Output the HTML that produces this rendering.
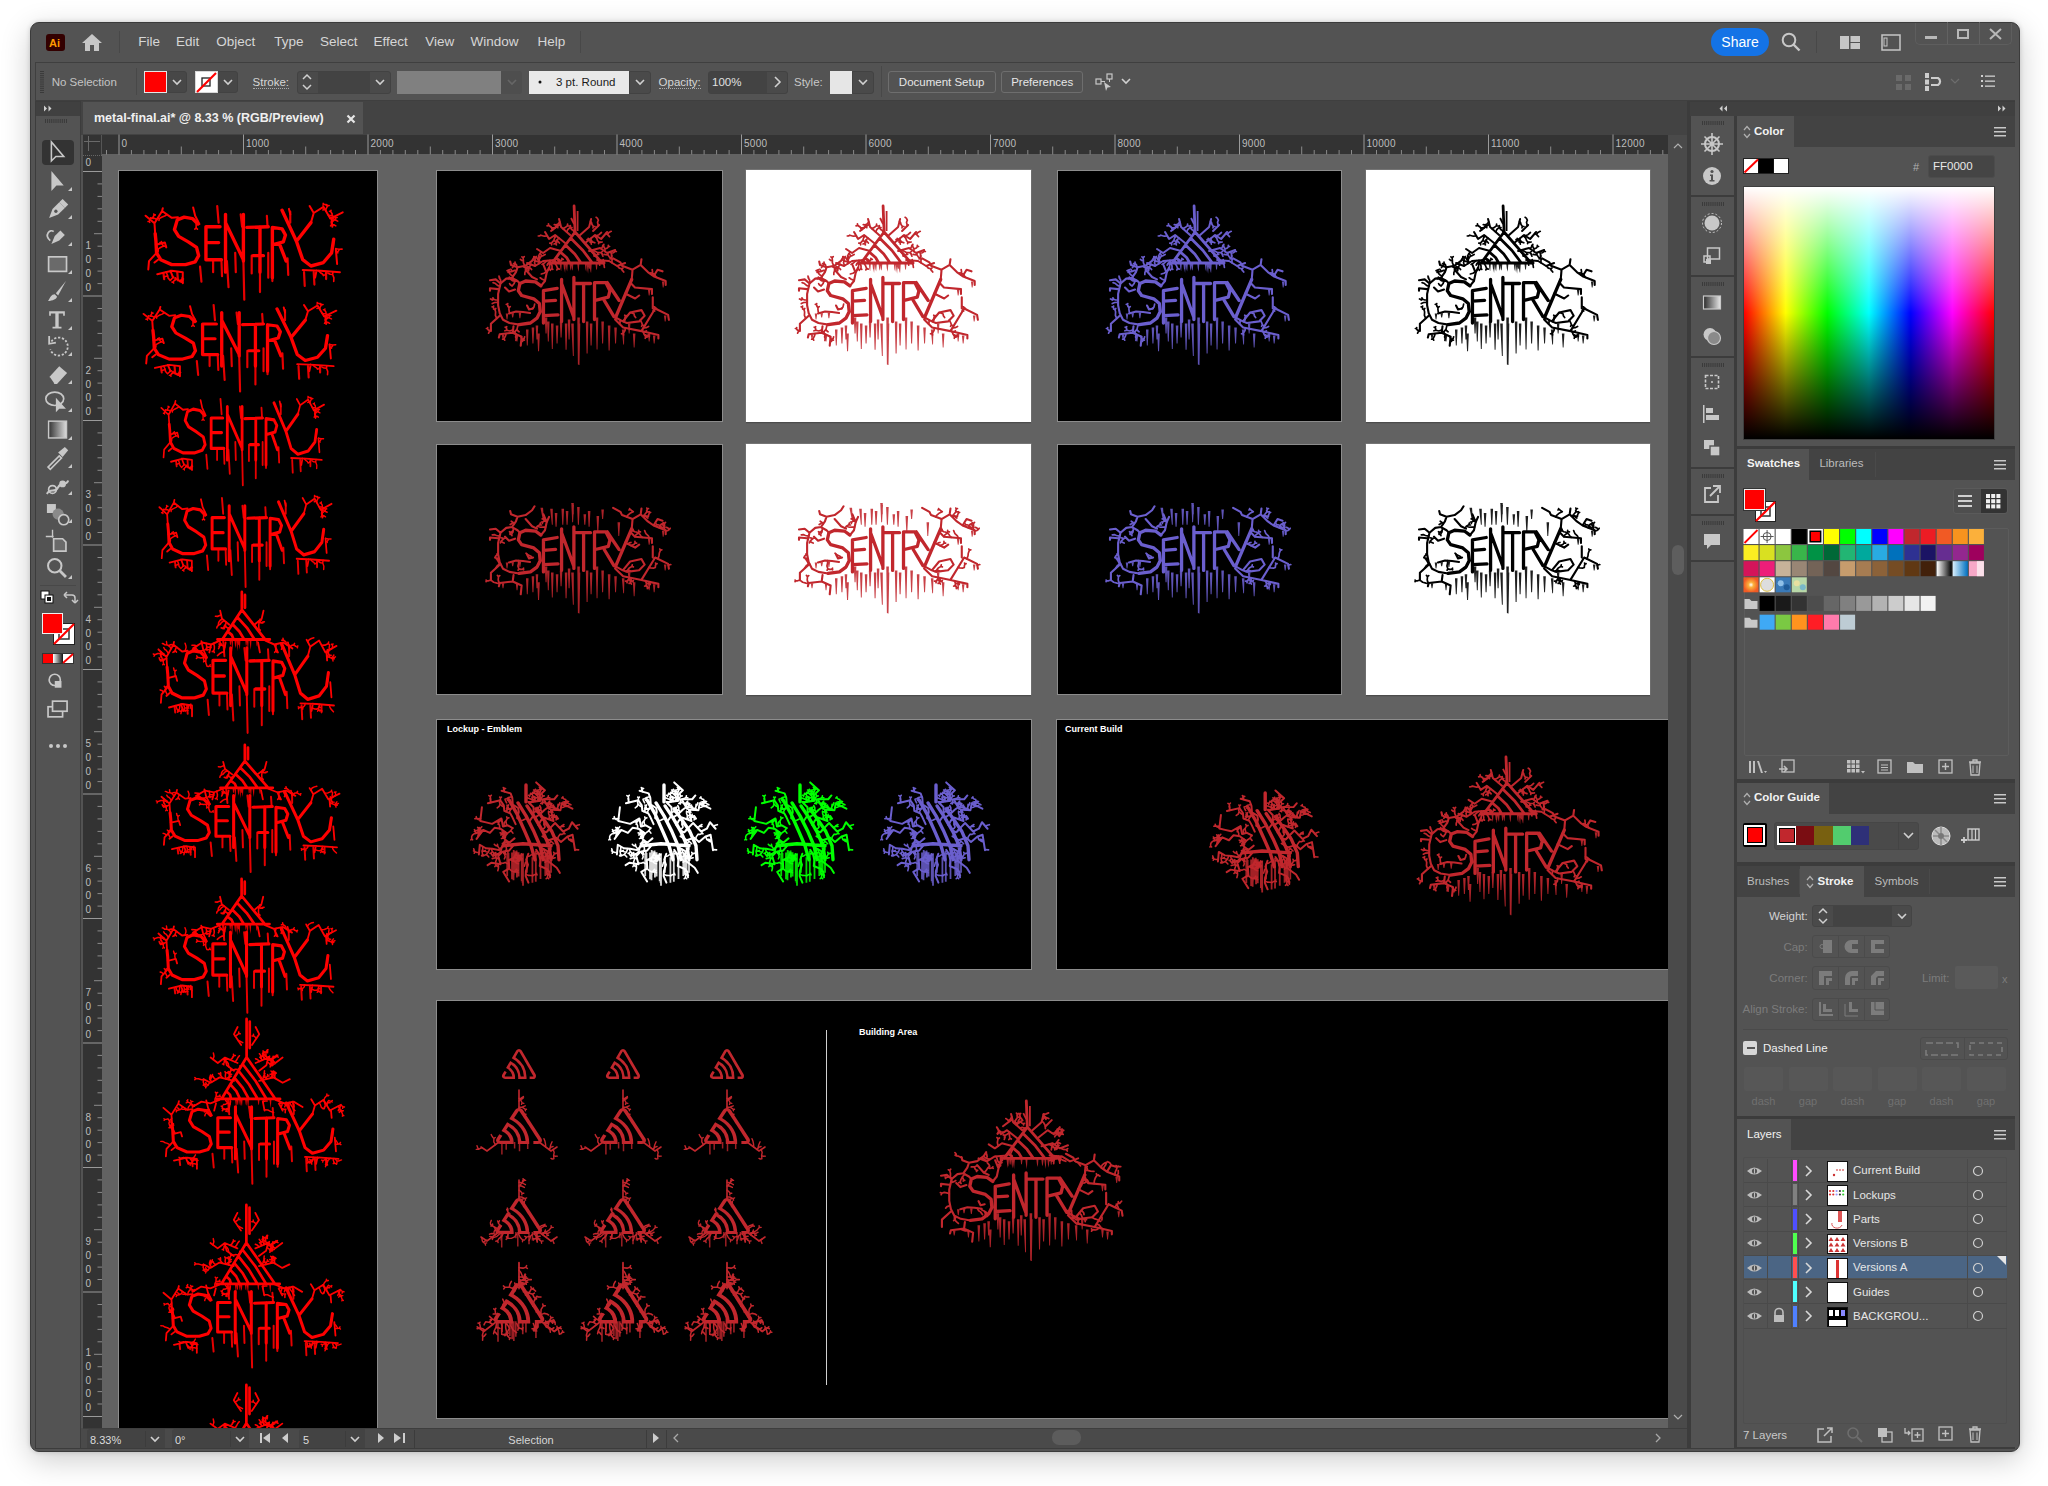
<!DOCTYPE html><html><head><meta charset="utf-8"><style>
*{box-sizing:border-box;margin:0;padding:0}
html,body{width:2048px;height:1486px;overflow:hidden;background:#fff}
body{position:relative;font-family:"Liberation Sans",sans-serif}
.t{position:absolute;white-space:nowrap;line-height:1}
svg{position:absolute;overflow:visible}
</style></head><body><div style="position:absolute;left:30px;top:22px;width:1990px;height:1430px;background:#535353;border-radius:9px;box-shadow:0 8px 30px rgba(0,0,0,0.20),0 0 5px rgba(0,0,0,0.16);border:1px solid #3b3b3b"></div>
<div style="position:absolute;left:46px;top:34px;width:19px;height:17px;background:#330000;border-radius:3px"></div>
<div class="t" style="left:49.0px;top:38.2px;font-size:11px;color:#ff9a00;font-weight:bold;">Ai</div>
<svg style="left:81px;top:33px;" width="22" height="19" viewBox="0 0 22 19"><path d="M11 1 L21 10 L18 10 L18 18 L13 18 L13 12 L9 12 L9 18 L4 18 L4 10 L1 10 Z" fill="#c6c6c6"/></svg>
<div style="position:absolute;left:119px;top:31px;width:1px;height:22px;background:#484848"></div>
<div class="t" style="left:138.3px;top:35.4px;font-size:13.5px;color:#d6d6d6;font-weight:normal;">File</div>
<div class="t" style="left:176.0px;top:35.4px;font-size:13.5px;color:#d6d6d6;font-weight:normal;">Edit</div>
<div class="t" style="left:216.3px;top:35.4px;font-size:13.5px;color:#d6d6d6;font-weight:normal;">Object</div>
<div class="t" style="left:274.3px;top:35.4px;font-size:13.5px;color:#d6d6d6;font-weight:normal;">Type</div>
<div class="t" style="left:320.0px;top:35.4px;font-size:13.5px;color:#d6d6d6;font-weight:normal;">Select</div>
<div class="t" style="left:373.5px;top:35.4px;font-size:13.5px;color:#d6d6d6;font-weight:normal;">Effect</div>
<div class="t" style="left:425.3px;top:35.4px;font-size:13.5px;color:#d6d6d6;font-weight:normal;">View</div>
<div class="t" style="left:470.6px;top:35.4px;font-size:13.5px;color:#d6d6d6;font-weight:normal;">Window</div>
<div class="t" style="left:537.6px;top:35.4px;font-size:13.5px;color:#d6d6d6;font-weight:normal;">Help</div>
<div style="position:absolute;left:580px;top:31px;width:1px;height:22px;background:#484848"></div>
<div style="position:absolute;left:1711px;top:28px;width:58px;height:28px;background:#1473e6;border-radius:14px"></div>
<div class="t" style="left:1540.0px;width:400px;text-align:center;top:34.6px;font-size:14px;color:#ffffff;font-weight:normal;">Share</div>
<svg style="left:1780px;top:31px;" width="22" height="22" viewBox="0 0 22 22"><circle cx="9" cy="9" r="6.3" fill="none" stroke="#c8c8c8" stroke-width="2"/><path d="M13.5 13.5 L19.5 19.5" stroke="#c8c8c8" stroke-width="2.4"/></svg>
<div style="position:absolute;left:1816px;top:31px;width:1px;height:22px;background:#484848"></div>
<svg style="left:1840px;top:36px;" width="21" height="14" viewBox="0 0 21 14"><rect x="0" y="0" width="9" height="13" fill="#c6c6c6"/><rect x="10.5" y="0" width="9.5" height="6" fill="#c6c6c6"/><rect x="10.5" y="7" width="9.5" height="6" fill="#c6c6c6"/></svg>
<svg style="left:1881px;top:34px;" width="20" height="17" viewBox="0 0 20 17"><rect x="1" y="1" width="18" height="15" fill="none" stroke="#c6c6c6" stroke-width="1.5"/><rect x="3" y="4" width="3" height="8" fill="none" stroke="#c6c6c6" stroke-width="1"/></svg>
<div style="position:absolute;left:1915px;top:23px;width:97px;height:21.5px;border:1px solid #5e5e5e;border-top:none;border-radius:0 0 5px 5px"></div>
<div style="position:absolute;left:1947px;top:22px;width:1px;height:22px;background:#626262"></div>
<div style="position:absolute;left:1979px;top:22px;width:1px;height:22px;background:#626262"></div>
<div style="position:absolute;left:1925px;top:36px;width:12px;height:3px;background:#b8b8b8"></div>
<div style="position:absolute;left:1957px;top:29px;width:12px;height:10px;border:2px solid #b8b8b8"></div>
<svg style="left:1989px;top:28px;" width="13" height="12" viewBox="0 0 13 12"><path d="M1 1 L12 11 M12 1 L1 11" stroke="#b8b8b8" stroke-width="2"/></svg>
<div style="position:absolute;left:35px;top:62px;width:1980px;height:39px;background:#535353;border:1px solid #3f3f3f;border-right:none"></div>
<svg style="left:40px;top:71px;" width="5" height="23" viewBox="0 0 5 23"><rect x="0" y="0.0" width="4" height="1" fill="#3a3a3a"/><rect x="0" y="2.1" width="4" height="1" fill="#3a3a3a"/><rect x="0" y="4.2" width="4" height="1" fill="#3a3a3a"/><rect x="0" y="6.3" width="4" height="1" fill="#3a3a3a"/><rect x="0" y="8.4" width="4" height="1" fill="#3a3a3a"/><rect x="0" y="10.5" width="4" height="1" fill="#3a3a3a"/><rect x="0" y="12.6" width="4" height="1" fill="#3a3a3a"/><rect x="0" y="14.7" width="4" height="1" fill="#3a3a3a"/><rect x="0" y="16.8" width="4" height="1" fill="#3a3a3a"/><rect x="0" y="18.9" width="4" height="1" fill="#3a3a3a"/><rect x="0" y="21.0" width="4" height="1" fill="#3a3a3a"/></svg>
<div class="t" style="left:51.7px;top:76.9px;font-size:11.5px;color:#c4c4c4;font-weight:normal;">No Selection</div>
<div style="position:absolute;left:136px;top:68px;width:1px;height:27px;background:#484848"></div>
<div style="position:absolute;left:166px;top:71px;width:21px;height:22px;background:#474747;border:1px solid #424242;border-radius:0 3px 3px 0"></div>
<div style="position:absolute;left:144px;top:71px;width:23px;height:22px;background:#ff0000;border:1.5px solid #e6e6e6"></div>
<svg style="left:171px;top:78.0px;" width="12" height="8" viewBox="0 0 12 8"><path d="M2 2 L6 6 L10 2" fill="none" stroke="#d0d0d0" stroke-width="1.6"/></svg>
<div style="position:absolute;left:217px;top:71px;width:21px;height:22px;background:#474747;border:1px solid #424242;border-radius:0 3px 3px 0"></div>
<div style="position:absolute;left:194.5px;top:71px;width:23px;height:22px;background:#ffffff;border:1px solid #d8d8d8"></div>
<svg style="left:195px;top:71px;" width="23" height="22" viewBox="0 0 23 22"><rect x="7" y="7" width="8" height="8" fill="none" stroke="#222" stroke-width="1.3"/><path d="M2 21 L21 2" stroke="#ff0000" stroke-width="2.2"/></svg>
<svg style="left:222px;top:78.0px;" width="12" height="8" viewBox="0 0 12 8"><path d="M2 2 L6 6 L10 2" fill="none" stroke="#d0d0d0" stroke-width="1.6"/></svg>
<div class="t" style="left:252.6px;top:76.9px;font-size:11.5px;color:#d6d6d6;font-weight:normal;border-bottom:1px dotted #aaa;padding-bottom:0">Stroke:</div>
<div style="position:absolute;left:296.5px;top:70.5px;width:94px;height:23px;background:#4a4a4a;border:1px solid #424242;border-radius:3px"></div>
<div style="position:absolute;left:317.5px;top:71.5px;width:52px;height:21px;background:#434343"></div>
<svg style="left:299px;top:73px;" width="16" height="18" viewBox="0 0 16 18"><path d="M4 6 L8 2 L12 6 M4 12 L8 16 L12 12" fill="none" stroke="#d0d0d0" stroke-width="1.5"/></svg>
<svg style="left:373.5px;top:78.0px;" width="12" height="8" viewBox="0 0 12 8"><path d="M2 2 L6 6 L10 2" fill="none" stroke="#d0d0d0" stroke-width="1.6"/></svg>
<div style="position:absolute;left:396.5px;top:70.5px;width:105px;height:23px;background:#808080"></div>
<div style="position:absolute;left:501px;top:70.5px;width:21px;height:23px;background:#4e4e4e;border-radius:0 3px 3px 0"></div>
<svg style="left:505.5px;top:78.0px;" width="12" height="8" viewBox="0 0 12 8"><path d="M2 2 L6 6 L10 2" fill="none" stroke="#666" stroke-width="1.6"/></svg>
<div style="position:absolute;left:529.3px;top:70.5px;width:100px;height:23px;background:#e9e9e9"></div>
<svg style="left:538px;top:80px;" width="4" height="4" viewBox="0 0 4 4"><circle cx="2" cy="2" r="1.5" fill="#111"/></svg>
<div class="t" style="left:556.0px;top:77.1px;font-size:11.5px;color:#1a1a1a;font-weight:normal;">3 pt. Round</div>
<div style="position:absolute;left:629px;top:70.5px;width:21.5px;height:23px;background:#4a4a4a;border:1px solid #424242;border-radius:0 3px 3px 0"></div>
<svg style="left:633.5px;top:78.0px;" width="12" height="8" viewBox="0 0 12 8"><path d="M2 2 L6 6 L10 2" fill="none" stroke="#d0d0d0" stroke-width="1.6"/></svg>
<div class="t" style="left:658.6px;top:76.9px;font-size:11.5px;color:#d6d6d6;font-weight:normal;border-bottom:1px dotted #aaa">Opacity:</div>
<div style="position:absolute;left:708.4px;top:70.5px;width:80px;height:23px;background:#4a4a4a;border:1px solid #424242;border-radius:3px"></div>
<div style="position:absolute;left:709.4px;top:71.5px;width:58px;height:21px;background:#434343"></div>
<div class="t" style="left:712.0px;top:76.9px;font-size:11.5px;color:#e0e0e0;font-weight:normal;">100%</div>
<svg style="left:772px;top:76px;" width="10" height="12" viewBox="0 0 10 12"><path d="M3 1 L8 6 L3 11" fill="none" stroke="#d0d0d0" stroke-width="1.6"/></svg>
<div class="t" style="left:794.0px;top:76.9px;font-size:11.5px;color:#c8c8c8;font-weight:normal;">Style:</div>
<div style="position:absolute;left:852px;top:70.5px;width:22px;height:23px;background:#4a4a4a;border:1px solid #424242;border-radius:0 3px 3px 0"></div>
<div style="position:absolute;left:830px;top:70.5px;width:22px;height:23px;background:#e6e6e6"></div>
<svg style="left:857px;top:78.0px;" width="12" height="8" viewBox="0 0 12 8"><path d="M2 2 L6 6 L10 2" fill="none" stroke="#d0d0d0" stroke-width="1.6"/></svg>
<div style="position:absolute;left:881px;top:66px;width:1px;height:31px;background:#484848"></div>
<div style="position:absolute;left:888px;top:71px;width:107.5px;height:22px;border:1px solid #6e6e6e;border-radius:3px"></div>
<div class="t" style="left:741.7px;width:400px;text-align:center;top:77.1px;font-size:11.5px;color:#e6e6e6;font-weight:normal;">Document Setup</div>
<div style="position:absolute;left:1001.4px;top:71px;width:81.5px;height:22px;border:1px solid #6e6e6e;border-radius:3px"></div>
<div class="t" style="left:842.2px;width:400px;text-align:center;top:77.1px;font-size:11.5px;color:#e6e6e6;font-weight:normal;">Preferences</div>
<svg style="left:1095px;top:72px;" width="20" height="20" viewBox="0 0 20 20"><rect x="1" y="7" width="5" height="5" fill="none" stroke="#c8c8c8" stroke-width="1.2"/><rect x="12" y="2" width="5" height="5" fill="none" stroke="#c8c8c8" stroke-width="1.2"/><path d="M6 9.5 H10 M14.5 7 V10" stroke="#c8c8c8" stroke-width="1"/><path d="M9 10 L16 15 L12.5 15.5 L11 19 Z" fill="#c8c8c8"/></svg>
<svg style="left:1120px;top:77.0px;" width="12" height="8" viewBox="0 0 12 8"><path d="M2 2 L6 6 L10 2" fill="none" stroke="#d0d0d0" stroke-width="1.6"/></svg>
<svg style="left:1895px;top:74px;" width="18" height="18" viewBox="0 0 18 18"><rect x="1" y="1" width="6" height="6" fill="#6a6a6a"/><rect x="10" y="1" width="6" height="6" fill="#6a6a6a"/><rect x="1" y="10" width="6" height="6" fill="#6a6a6a"/><rect x="10" y="10" width="6" height="6" fill="#6a6a6a"/></svg>
<svg style="left:1924px;top:72px;" width="22" height="20" viewBox="0 0 22 20"><rect x="1" y="1" width="4" height="5" fill="#cdcdcd"/><rect x="1" y="7.5" width="4" height="5" fill="#cdcdcd"/><rect x="1" y="14" width="4" height="5" fill="#cdcdcd"/><path d="M7 6 H14 A4 4 0 0 1 14 13 H7" fill="none" stroke="#cdcdcd" stroke-width="2.2"/></svg>
<svg style="left:1949px;top:77.0px;" width="12" height="8" viewBox="0 0 12 8"><path d="M2 2 L6 6 L10 2" fill="none" stroke="#6e6e6e" stroke-width="1.2"/></svg>
<svg style="left:1981px;top:74px;" width="15" height="14" viewBox="0 0 15 14"><rect x="0" y="1" width="2" height="2" fill="#d0d0d0"/><rect x="0" y="6" width="2" height="2" fill="#d0d0d0"/><rect x="0" y="11" width="2" height="2" fill="#d0d0d0"/><rect x="4" y="1.5" width="10" height="1.3" fill="#d0d0d0"/><rect x="4" y="6.5" width="10" height="1.3" fill="#d0d0d0"/><rect x="4" y="11.5" width="10" height="1.3" fill="#d0d0d0"/></svg>
<div style="position:absolute;left:35px;top:101px;width:46px;height:1347.5px;background:#3c3c3c"></div>
<div style="position:absolute;left:36px;top:101.5px;width:44px;height:14px;background:#404040"></div>
<svg style="left:43px;top:105px;" width="12" height="7" viewBox="0 0 12 7"><path d="M1 0.5 L4 3.5 L1 6.5 Z M5.5 0.5 L8.5 3.5 L5.5 6.5 Z" fill="#d0d0d0"/></svg>
<div style="position:absolute;left:36px;top:115.5px;width:44px;height:1332px;background:#535353"></div>
<svg style="left:45px;top:119px;" width="24" height="5" viewBox="0 0 24 5"><rect x="0.0" y="0" width="1" height="4" fill="#3a3a3a"/><rect x="2.1" y="0" width="1" height="4" fill="#3a3a3a"/><rect x="4.2" y="0" width="1" height="4" fill="#3a3a3a"/><rect x="6.3" y="0" width="1" height="4" fill="#3a3a3a"/><rect x="8.4" y="0" width="1" height="4" fill="#3a3a3a"/><rect x="10.5" y="0" width="1" height="4" fill="#3a3a3a"/><rect x="12.6" y="0" width="1" height="4" fill="#3a3a3a"/><rect x="14.7" y="0" width="1" height="4" fill="#3a3a3a"/><rect x="16.8" y="0" width="1" height="4" fill="#3a3a3a"/><rect x="18.9" y="0" width="1" height="4" fill="#3a3a3a"/><rect x="21.0" y="0" width="1" height="4" fill="#3a3a3a"/></svg>
<div style="position:absolute;left:42px;top:139.5px;width:32px;height:25px;background:#333333;border-radius:4px"></div>
<svg style="left:45.0px;top:139.8px;" width="24" height="24" viewBox="0 0 24 24"><g transform="translate(12,12) scale(1.12) translate(-12,-12)"><path d="M7 3 L7 20 L11 16 L18 16 Z" fill="none" stroke="#c8c8c8" stroke-width="1.4"/></g></svg>
<svg style="left:45.0px;top:168.9px;" width="24" height="24" viewBox="0 0 24 24"><g transform="translate(12,12) scale(1.12) translate(-12,-12)"><path d="M7 3 L7 21 L11.5 16 L18 16 Z" fill="#c8c8c8"/></g></svg>
<svg style="left:67.6px;top:187.4px;" width="5" height="5" viewBox="0 0 5 5"><path d="M4 0 L4 4 L0 4 Z" fill="#c8c8c8"/></svg>
<svg style="left:45.0px;top:196.7px;" width="24" height="24" viewBox="0 0 24 24"><g transform="translate(12,12) scale(1.12) translate(-12,-12)"><path d="M5 20 L8 12 L14 6 L19 11 L13 17 Z" fill="#c8c8c8"/><path d="M14 6 L17 3 L22 8 L19 11" fill="#c8c8c8"/><circle cx="11" cy="14" r="1.5" fill="#535353"/></g></svg>
<svg style="left:67.6px;top:215.2px;" width="5" height="5" viewBox="0 0 5 5"><path d="M4 0 L4 4 L0 4 Z" fill="#c8c8c8"/></svg>
<svg style="left:45.0px;top:223.4px;" width="24" height="24" viewBox="0 0 24 24"><g transform="translate(12,12) scale(1.12) translate(-12,-12)"><path d="M7 20 L10 13 L15 8 L19 12 L14 17 Z" fill="#c8c8c8"/><path d="M6 17 C0 12, 6 6, 9 9" fill="none" stroke="#c8c8c8" stroke-width="1.5"/></g></svg>
<svg style="left:67.6px;top:241.9px;" width="5" height="5" viewBox="0 0 5 5"><path d="M4 0 L4 4 L0 4 Z" fill="#c8c8c8"/></svg>
<svg style="left:45.0px;top:251.2px;" width="24" height="24" viewBox="0 0 24 24"><g transform="translate(12,12) scale(1.12) translate(-12,-12)"><rect x="4.5" y="6.5" width="16" height="13" fill="#6a6a6a" stroke="#c8c8c8" stroke-width="1.5"/></g></svg>
<svg style="left:67.6px;top:269.7px;" width="5" height="5" viewBox="0 0 5 5"><path d="M4 0 L4 4 L0 4 Z" fill="#c8c8c8"/></svg>
<svg style="left:45.0px;top:279.0px;" width="24" height="24" viewBox="0 0 24 24"><g transform="translate(12,12) scale(1.12) translate(-12,-12)"><path d="M20 3 L11 14 L13 16 Z" fill="#c8c8c8"/><path d="M10 15 C7 15, 6 18, 4 21 C8 21, 12 19, 12 17 Z" fill="#c8c8c8"/></g></svg>
<svg style="left:67.6px;top:297.5px;" width="5" height="5" viewBox="0 0 5 5"><path d="M4 0 L4 4 L0 4 Z" fill="#c8c8c8"/></svg>
<svg style="left:45.0px;top:307.0px;" width="24" height="24" viewBox="0 0 24 24"><g transform="translate(12,12) scale(1.12) translate(-12,-12)"><path d="M5 5 H19 V9 H17.5 V7 H13.5 V19 H16 V20.5 H8 V19 H10.5 V7 H6.5 V9 H5 Z" fill="#c8c8c8"/></g></svg>
<svg style="left:67.6px;top:325.5px;" width="5" height="5" viewBox="0 0 5 5"><path d="M4 0 L4 4 L0 4 Z" fill="#c8c8c8"/></svg>
<svg style="left:45.0px;top:333.6px;" width="24" height="24" viewBox="0 0 24 24"><g transform="translate(12,12) scale(1.12) translate(-12,-12)"><path d="M7 8 A8 8 0 1 1 6 15" fill="none" stroke="#c8c8c8" stroke-width="1.6" stroke-dasharray="2 1.5"/><path d="M5 3 L5 10 L11 9" fill="none" stroke="#c8c8c8" stroke-width="1.6"/></g></svg>
<svg style="left:67.6px;top:352.1px;" width="5" height="5" viewBox="0 0 5 5"><path d="M4 0 L4 4 L0 4 Z" fill="#c8c8c8"/></svg>
<svg style="left:45.0px;top:361.5px;" width="24" height="24" viewBox="0 0 24 24"><g transform="translate(12,12) scale(1.12) translate(-12,-12)"><path d="M5 15 L14 5 L21 11 L12 21 L9 21 Z" fill="#c8c8c8"/><path d="M5 15 L9 21" stroke="#535353" stroke-width="1.5"/></g></svg>
<svg style="left:67.6px;top:380.0px;" width="5" height="5" viewBox="0 0 5 5"><path d="M4 0 L4 4 L0 4 Z" fill="#c8c8c8"/></svg>
<svg style="left:45.0px;top:389.3px;" width="24" height="24" viewBox="0 0 24 24"><g transform="translate(12,12) scale(1.12) translate(-12,-12)"><ellipse cx="10" cy="10" rx="8" ry="6" fill="none" stroke="#c8c8c8" stroke-width="1.5"/><path d="M11 9 L11 22 L14 19 L20 19 Z" fill="#c8c8c8"/></g></svg>
<svg style="left:67.6px;top:407.8px;" width="5" height="5" viewBox="0 0 5 5"><path d="M4 0 L4 4 L0 4 Z" fill="#c8c8c8"/></svg>
<svg style="left:45.0px;top:417.2px;" width="24" height="24" viewBox="0 0 24 24"><g transform="translate(12,12) scale(1.12) translate(-12,-12)"><defs><linearGradient id="gtb"><stop offset="0" stop-color="#333"/><stop offset="1" stop-color="#ddd"/></linearGradient></defs><rect x="4.5" y="5" width="16" height="15" fill="url(#gtb)" stroke="#c8c8c8" stroke-width="1.3"/></g></svg>
<svg style="left:67.6px;top:435.7px;" width="5" height="5" viewBox="0 0 5 5"><path d="M4 0 L4 4 L0 4 Z" fill="#c8c8c8"/></svg>
<svg style="left:45.0px;top:445.0px;" width="24" height="24" viewBox="0 0 24 24"><g transform="translate(12,12) scale(1.12) translate(-12,-12)"><path d="M4 21 L14 11 L16 13 L6 23 Z" fill="none" stroke="#c8c8c8" stroke-width="1.5"/><path d="M13 8 L19 3 L22 6 L17 12 Z" fill="#c8c8c8"/></g></svg>
<svg style="left:67.6px;top:463.5px;" width="5" height="5" viewBox="0 0 5 5"><path d="M4 0 L4 4 L0 4 Z" fill="#c8c8c8"/></svg>
<svg style="left:45.0px;top:472.8px;" width="24" height="24" viewBox="0 0 24 24"><g transform="translate(12,12) scale(1.12) translate(-12,-12)"><path d="M3 20 C6 14, 10 20, 13 14 C16 8, 20 14, 22 8" fill="none" stroke="#c8c8c8" stroke-width="1.8"/><circle cx="8" cy="16" r="3.5" fill="none" stroke="#c8c8c8" stroke-width="1.5"/><circle cx="17" cy="11" r="3" fill="#c8c8c8"/></g></svg>
<svg style="left:67.6px;top:491.3px;" width="5" height="5" viewBox="0 0 5 5"><path d="M4 0 L4 4 L0 4 Z" fill="#c8c8c8"/></svg>
<svg style="left:45.0px;top:500.70000000000005px;" width="24" height="24" viewBox="0 0 24 24"><g transform="translate(12,12) scale(1.12) translate(-12,-12)"><rect x="3" y="4" width="8" height="8" fill="#c8c8c8"/><circle cx="13" cy="13" r="5" fill="#8a8a8a"/><circle cx="18" cy="18" r="4.5" fill="#535353" stroke="#c8c8c8" stroke-width="1.5"/></g></svg>
<svg style="left:67.6px;top:519.2px;" width="5" height="5" viewBox="0 0 5 5"><path d="M4 0 L4 4 L0 4 Z" fill="#c8c8c8"/></svg>
<svg style="left:45.0px;top:528.5px;" width="24" height="24" viewBox="0 0 24 24"><g transform="translate(12,12) scale(1.12) translate(-12,-12)"><path d="M8 2 V9 M2 8 H9" stroke="#c8c8c8" stroke-width="1.2"/><path d="M9 10 H17 L20 13 V21 H9 Z" fill="#6a6a6a" stroke="#c8c8c8" stroke-width="1.5"/></g></svg>
<svg style="left:45.0px;top:556.4px;" width="24" height="24" viewBox="0 0 24 24"><g transform="translate(12,12) scale(1.12) translate(-12,-12)"><circle cx="10" cy="10" r="6" fill="none" stroke="#c8c8c8" stroke-width="1.8"/><path d="M14.5 14.5 L20 20" stroke="#c8c8c8" stroke-width="2.5"/></g></svg>
<svg style="left:67.6px;top:574.9px;" width="5" height="5" viewBox="0 0 5 5"><path d="M4 0 L4 4 L0 4 Z" fill="#c8c8c8"/></svg>
<div style="position:absolute;left:40px;top:585px;width:36px;height:1px;background:#484848"></div>
<svg style="left:40px;top:590px;" width="14" height="14" viewBox="0 0 14 14"><rect x="1" y="1" width="8" height="8" fill="#fff" stroke="#111" stroke-width="1"/><rect x="5" y="5" width="8" height="8" fill="#fff" stroke="#111" stroke-width="1"/><rect x="7" y="7" width="4" height="4" fill="#111"/></svg>
<svg style="left:63px;top:590px;" width="14" height="14" viewBox="0 0 14 14"><path d="M2 5 H9 A3 3 0 0 1 12 8 V12" fill="none" stroke="#c8c8c8" stroke-width="1.5"/><path d="M1 5 L4 2 M1 5 L4 8 M12 13 L9 10 M12 13 L15 10" stroke="#c8c8c8" stroke-width="1.5" fill="none"/></svg>
<div style="position:absolute;left:52.7px;top:623.4px;width:22px;height:22px;background:#fff;border:1px solid #222"></div>
<svg style="left:52.7px;top:623.4px;" width="22" height="22" viewBox="0 0 22 22"><rect x="6" y="6" width="10" height="10" fill="none" stroke="#333" stroke-width="1.5"/><path d="M1 21 L21 1" stroke="#f00" stroke-width="2.2"/></svg>
<div style="position:absolute;left:41.8px;top:612.5px;width:21px;height:21px;background:#ff0000;border:1.5px solid #f0f0f0"></div>
<div style="position:absolute;left:41.8px;top:653px;width:32px;height:11px;background:#fff;border:1px solid #333"></div>
<div style="position:absolute;left:42.5px;top:654px;width:10px;height:9px;background:#ff0000"></div>
<svg style="left:53px;top:654px;" width="10" height="9" viewBox="0 0 10 9"><defs><linearGradient id="gsm"><stop offset="0" stop-color="#fff"/><stop offset="1" stop-color="#111"/></linearGradient></defs><rect width="10" height="9" fill="url(#gsm)"/></svg>
<svg style="left:63px;top:654px;" width="10" height="9" viewBox="0 0 10 9"><path d="M0 9 L10 0" stroke="#f00" stroke-width="1.8"/></svg>
<svg style="left:45.0px;top:669.0px;" width="24" height="24" viewBox="0 0 24 24"><g transform="translate(12,12) scale(1.12) translate(-12,-12)"><circle cx="10" cy="11" r="5" fill="none" stroke="#c8c8c8" stroke-width="1.5"/><rect x="10" y="12" width="6" height="6" fill="#c8c8c8"/></g></svg>
<svg style="left:45.0px;top:697.0px;" width="24" height="24" viewBox="0 0 24 24"><g transform="translate(12,12) scale(1.12) translate(-12,-12)"><rect x="4" y="10" width="13" height="9" fill="#535353" stroke="#c8c8c8" stroke-width="1.5"/><rect x="8" y="5" width="13" height="9" fill="#535353" stroke="#c8c8c8" stroke-width="1.5"/></g></svg>
<svg style="left:48px;top:743px;" width="20" height="6" viewBox="0 0 20 6"><circle cx="3" cy="3" r="2" fill="#c8c8c8"/><circle cx="10" cy="3" r="2" fill="#c8c8c8"/><circle cx="17" cy="3" r="2" fill="#c8c8c8"/></svg>
<div style="position:absolute;left:81px;top:101px;width:1608px;height:34px;background:#434343"></div>
<div style="position:absolute;left:83px;top:102px;width:280px;height:32px;background:#535353"></div>
<div class="t" style="left:94.0px;top:111.9px;font-size:12.5px;color:#f0f0f0;font-weight:bold;">metal-final.ai* @ 8.33 % (RGB/Preview)</div>
<svg style="left:346px;top:114px;" width="10" height="10" viewBox="0 0 10 10"><path d="M1.5 1.5 L8.5 8.5 M8.5 1.5 L1.5 8.5" stroke="#e6e6e6" stroke-width="2.2"/></svg>
<div style="position:absolute;left:83px;top:134.5px;width:1585px;height:20px;background:#333333"></div>
<div style="position:absolute;left:83px;top:154px;width:19px;height:1274px;background:#333333"></div>
<div style="position:absolute;left:102px;top:154px;width:1566px;height:1274px;background:#626262;overflow:hidden"></div>
<svg style="left:83px;top:134.5px;" width="19" height="21" viewBox="0 0 19 21"><path d="M5.5 1 V16 M1 6.5 H17" stroke="#6a6a6a" stroke-width="1"/><path d="M18.5 0 V20" stroke="#555" stroke-width="1"/><path d="M0 20.5 H19" stroke="#666" stroke-dasharray="1 1"/></svg>
<svg style="left:0;top:0" width="2048" height="200"><rect x="106.0" y="150" width="1" height="4.5" fill="#8a8a8a"/><rect x="118.5" y="134.5" width="1" height="20" fill="#9a9a9a"/><rect x="130.9" y="150" width="1" height="4.5" fill="#8a8a8a"/><rect x="143.4" y="150" width="1" height="4.5" fill="#8a8a8a"/><rect x="155.8" y="150" width="1" height="4.5" fill="#8a8a8a"/><rect x="168.3" y="150" width="1" height="4.5" fill="#8a8a8a"/><rect x="180.8" y="146.5" width="1" height="8" fill="#8a8a8a"/><rect x="193.2" y="150" width="1" height="4.5" fill="#8a8a8a"/><rect x="205.6" y="150" width="1" height="4.5" fill="#8a8a8a"/><rect x="218.1" y="150" width="1" height="4.5" fill="#8a8a8a"/><rect x="230.6" y="150" width="1" height="4.5" fill="#8a8a8a"/><rect x="243.0" y="134.5" width="1" height="20" fill="#9a9a9a"/><rect x="255.5" y="150" width="1" height="4.5" fill="#8a8a8a"/><rect x="267.9" y="150" width="1" height="4.5" fill="#8a8a8a"/><rect x="280.4" y="150" width="1" height="4.5" fill="#8a8a8a"/><rect x="292.8" y="150" width="1" height="4.5" fill="#8a8a8a"/><rect x="305.2" y="146.5" width="1" height="8" fill="#8a8a8a"/><rect x="317.7" y="150" width="1" height="4.5" fill="#8a8a8a"/><rect x="330.1" y="150" width="1" height="4.5" fill="#8a8a8a"/><rect x="342.6" y="150" width="1" height="4.5" fill="#8a8a8a"/><rect x="355.0" y="150" width="1" height="4.5" fill="#8a8a8a"/><rect x="367.5" y="134.5" width="1" height="20" fill="#9a9a9a"/><rect x="379.9" y="150" width="1" height="4.5" fill="#8a8a8a"/><rect x="392.4" y="150" width="1" height="4.5" fill="#8a8a8a"/><rect x="404.8" y="150" width="1" height="4.5" fill="#8a8a8a"/><rect x="417.3" y="150" width="1" height="4.5" fill="#8a8a8a"/><rect x="429.8" y="146.5" width="1" height="8" fill="#8a8a8a"/><rect x="442.2" y="150" width="1" height="4.5" fill="#8a8a8a"/><rect x="454.7" y="150" width="1" height="4.5" fill="#8a8a8a"/><rect x="467.1" y="150" width="1" height="4.5" fill="#8a8a8a"/><rect x="479.6" y="150" width="1" height="4.5" fill="#8a8a8a"/><rect x="492.0" y="134.5" width="1" height="20" fill="#9a9a9a"/><rect x="504.4" y="150" width="1" height="4.5" fill="#8a8a8a"/><rect x="516.9" y="150" width="1" height="4.5" fill="#8a8a8a"/><rect x="529.3" y="150" width="1" height="4.5" fill="#8a8a8a"/><rect x="541.8" y="150" width="1" height="4.5" fill="#8a8a8a"/><rect x="554.2" y="146.5" width="1" height="8" fill="#8a8a8a"/><rect x="566.7" y="150" width="1" height="4.5" fill="#8a8a8a"/><rect x="579.2" y="150" width="1" height="4.5" fill="#8a8a8a"/><rect x="591.6" y="150" width="1" height="4.5" fill="#8a8a8a"/><rect x="604.0" y="150" width="1" height="4.5" fill="#8a8a8a"/><rect x="616.5" y="134.5" width="1" height="20" fill="#9a9a9a"/><rect x="628.9" y="150" width="1" height="4.5" fill="#8a8a8a"/><rect x="641.4" y="150" width="1" height="4.5" fill="#8a8a8a"/><rect x="653.9" y="150" width="1" height="4.5" fill="#8a8a8a"/><rect x="666.3" y="150" width="1" height="4.5" fill="#8a8a8a"/><rect x="678.8" y="146.5" width="1" height="8" fill="#8a8a8a"/><rect x="691.2" y="150" width="1" height="4.5" fill="#8a8a8a"/><rect x="703.6" y="150" width="1" height="4.5" fill="#8a8a8a"/><rect x="716.1" y="150" width="1" height="4.5" fill="#8a8a8a"/><rect x="728.6" y="150" width="1" height="4.5" fill="#8a8a8a"/><rect x="741.0" y="134.5" width="1" height="20" fill="#9a9a9a"/><rect x="753.4" y="150" width="1" height="4.5" fill="#8a8a8a"/><rect x="765.9" y="150" width="1" height="4.5" fill="#8a8a8a"/><rect x="778.4" y="150" width="1" height="4.5" fill="#8a8a8a"/><rect x="790.8" y="150" width="1" height="4.5" fill="#8a8a8a"/><rect x="803.2" y="146.5" width="1" height="8" fill="#8a8a8a"/><rect x="815.7" y="150" width="1" height="4.5" fill="#8a8a8a"/><rect x="828.1" y="150" width="1" height="4.5" fill="#8a8a8a"/><rect x="840.6" y="150" width="1" height="4.5" fill="#8a8a8a"/><rect x="853.1" y="150" width="1" height="4.5" fill="#8a8a8a"/><rect x="865.5" y="134.5" width="1" height="20" fill="#9a9a9a"/><rect x="877.9" y="150" width="1" height="4.5" fill="#8a8a8a"/><rect x="890.4" y="150" width="1" height="4.5" fill="#8a8a8a"/><rect x="902.9" y="150" width="1" height="4.5" fill="#8a8a8a"/><rect x="915.3" y="150" width="1" height="4.5" fill="#8a8a8a"/><rect x="927.8" y="146.5" width="1" height="8" fill="#8a8a8a"/><rect x="940.2" y="150" width="1" height="4.5" fill="#8a8a8a"/><rect x="952.6" y="150" width="1" height="4.5" fill="#8a8a8a"/><rect x="965.1" y="150" width="1" height="4.5" fill="#8a8a8a"/><rect x="977.6" y="150" width="1" height="4.5" fill="#8a8a8a"/><rect x="990.0" y="134.5" width="1" height="20" fill="#9a9a9a"/><rect x="1002.4" y="150" width="1" height="4.5" fill="#8a8a8a"/><rect x="1014.9" y="150" width="1" height="4.5" fill="#8a8a8a"/><rect x="1027.3" y="150" width="1" height="4.5" fill="#8a8a8a"/><rect x="1039.8" y="150" width="1" height="4.5" fill="#8a8a8a"/><rect x="1052.2" y="146.5" width="1" height="8" fill="#8a8a8a"/><rect x="1064.7" y="150" width="1" height="4.5" fill="#8a8a8a"/><rect x="1077.2" y="150" width="1" height="4.5" fill="#8a8a8a"/><rect x="1089.6" y="150" width="1" height="4.5" fill="#8a8a8a"/><rect x="1102.1" y="150" width="1" height="4.5" fill="#8a8a8a"/><rect x="1114.5" y="134.5" width="1" height="20" fill="#9a9a9a"/><rect x="1126.9" y="150" width="1" height="4.5" fill="#8a8a8a"/><rect x="1139.4" y="150" width="1" height="4.5" fill="#8a8a8a"/><rect x="1151.9" y="150" width="1" height="4.5" fill="#8a8a8a"/><rect x="1164.3" y="150" width="1" height="4.5" fill="#8a8a8a"/><rect x="1176.8" y="146.5" width="1" height="8" fill="#8a8a8a"/><rect x="1189.2" y="150" width="1" height="4.5" fill="#8a8a8a"/><rect x="1201.6" y="150" width="1" height="4.5" fill="#8a8a8a"/><rect x="1214.1" y="150" width="1" height="4.5" fill="#8a8a8a"/><rect x="1226.5" y="150" width="1" height="4.5" fill="#8a8a8a"/><rect x="1239.0" y="134.5" width="1" height="20" fill="#9a9a9a"/><rect x="1251.5" y="150" width="1" height="4.5" fill="#8a8a8a"/><rect x="1263.9" y="150" width="1" height="4.5" fill="#8a8a8a"/><rect x="1276.4" y="150" width="1" height="4.5" fill="#8a8a8a"/><rect x="1288.8" y="150" width="1" height="4.5" fill="#8a8a8a"/><rect x="1301.2" y="146.5" width="1" height="8" fill="#8a8a8a"/><rect x="1313.7" y="150" width="1" height="4.5" fill="#8a8a8a"/><rect x="1326.1" y="150" width="1" height="4.5" fill="#8a8a8a"/><rect x="1338.6" y="150" width="1" height="4.5" fill="#8a8a8a"/><rect x="1351.0" y="150" width="1" height="4.5" fill="#8a8a8a"/><rect x="1363.5" y="134.5" width="1" height="20" fill="#9a9a9a"/><rect x="1376.0" y="150" width="1" height="4.5" fill="#8a8a8a"/><rect x="1388.4" y="150" width="1" height="4.5" fill="#8a8a8a"/><rect x="1400.9" y="150" width="1" height="4.5" fill="#8a8a8a"/><rect x="1413.3" y="150" width="1" height="4.5" fill="#8a8a8a"/><rect x="1425.8" y="146.5" width="1" height="8" fill="#8a8a8a"/><rect x="1438.2" y="150" width="1" height="4.5" fill="#8a8a8a"/><rect x="1450.6" y="150" width="1" height="4.5" fill="#8a8a8a"/><rect x="1463.1" y="150" width="1" height="4.5" fill="#8a8a8a"/><rect x="1475.5" y="150" width="1" height="4.5" fill="#8a8a8a"/><rect x="1488.0" y="134.5" width="1" height="20" fill="#9a9a9a"/><rect x="1500.5" y="150" width="1" height="4.5" fill="#8a8a8a"/><rect x="1512.9" y="150" width="1" height="4.5" fill="#8a8a8a"/><rect x="1525.4" y="150" width="1" height="4.5" fill="#8a8a8a"/><rect x="1537.8" y="150" width="1" height="4.5" fill="#8a8a8a"/><rect x="1550.2" y="146.5" width="1" height="8" fill="#8a8a8a"/><rect x="1562.7" y="150" width="1" height="4.5" fill="#8a8a8a"/><rect x="1575.1" y="150" width="1" height="4.5" fill="#8a8a8a"/><rect x="1587.6" y="150" width="1" height="4.5" fill="#8a8a8a"/><rect x="1600.0" y="150" width="1" height="4.5" fill="#8a8a8a"/><rect x="1612.5" y="134.5" width="1" height="20" fill="#9a9a9a"/><rect x="1625.0" y="150" width="1" height="4.5" fill="#8a8a8a"/><rect x="1637.4" y="150" width="1" height="4.5" fill="#8a8a8a"/><rect x="1649.9" y="150" width="1" height="4.5" fill="#8a8a8a"/><rect x="1662.3" y="150" width="1" height="4.5" fill="#8a8a8a"/></svg>
<div class="t" style="left:121.5px;top:138.5px;font-size:10px;color:#bdbdbd;letter-spacing:0.3px">0</div>
<div class="t" style="left:246.0px;top:138.5px;font-size:10px;color:#bdbdbd;letter-spacing:0.3px">1000</div>
<div class="t" style="left:370.5px;top:138.5px;font-size:10px;color:#bdbdbd;letter-spacing:0.3px">2000</div>
<div class="t" style="left:495.0px;top:138.5px;font-size:10px;color:#bdbdbd;letter-spacing:0.3px">3000</div>
<div class="t" style="left:619.5px;top:138.5px;font-size:10px;color:#bdbdbd;letter-spacing:0.3px">4000</div>
<div class="t" style="left:744.0px;top:138.5px;font-size:10px;color:#bdbdbd;letter-spacing:0.3px">5000</div>
<div class="t" style="left:868.5px;top:138.5px;font-size:10px;color:#bdbdbd;letter-spacing:0.3px">6000</div>
<div class="t" style="left:993.0px;top:138.5px;font-size:10px;color:#bdbdbd;letter-spacing:0.3px">7000</div>
<div class="t" style="left:1117.5px;top:138.5px;font-size:10px;color:#bdbdbd;letter-spacing:0.3px">8000</div>
<div class="t" style="left:1242.0px;top:138.5px;font-size:10px;color:#bdbdbd;letter-spacing:0.3px">9000</div>
<div class="t" style="left:1366.5px;top:138.5px;font-size:10px;color:#bdbdbd;letter-spacing:0.3px">10000</div>
<div class="t" style="left:1491.0px;top:138.5px;font-size:10px;color:#bdbdbd;letter-spacing:0.3px">11000</div>
<div class="t" style="left:1615.5px;top:138.5px;font-size:10px;color:#bdbdbd;letter-spacing:0.3px">12000</div>
<svg style="left:0;top:0" width="200" height="1486"><rect x="83" y="171.0" width="19" height="1" fill="#9a9a9a"/><rect x="97.5" y="183.4" width="4.5" height="1" fill="#8a8a8a"/><rect x="97.5" y="195.9" width="4.5" height="1" fill="#8a8a8a"/><rect x="97.5" y="208.3" width="4.5" height="1" fill="#8a8a8a"/><rect x="97.5" y="220.8" width="4.5" height="1" fill="#8a8a8a"/><rect x="94" y="233.2" width="8" height="1" fill="#8a8a8a"/><rect x="97.5" y="245.7" width="4.5" height="1" fill="#8a8a8a"/><rect x="97.5" y="258.1" width="4.5" height="1" fill="#8a8a8a"/><rect x="97.5" y="270.6" width="4.5" height="1" fill="#8a8a8a"/><rect x="97.5" y="283.1" width="4.5" height="1" fill="#8a8a8a"/><rect x="83" y="295.5" width="19" height="1" fill="#9a9a9a"/><rect x="97.5" y="308.0" width="4.5" height="1" fill="#8a8a8a"/><rect x="97.5" y="320.4" width="4.5" height="1" fill="#8a8a8a"/><rect x="97.5" y="332.9" width="4.5" height="1" fill="#8a8a8a"/><rect x="97.5" y="345.3" width="4.5" height="1" fill="#8a8a8a"/><rect x="94" y="357.8" width="8" height="1" fill="#8a8a8a"/><rect x="97.5" y="370.2" width="4.5" height="1" fill="#8a8a8a"/><rect x="97.5" y="382.6" width="4.5" height="1" fill="#8a8a8a"/><rect x="97.5" y="395.1" width="4.5" height="1" fill="#8a8a8a"/><rect x="97.5" y="407.5" width="4.5" height="1" fill="#8a8a8a"/><rect x="83" y="420.0" width="19" height="1" fill="#9a9a9a"/><rect x="97.5" y="432.4" width="4.5" height="1" fill="#8a8a8a"/><rect x="97.5" y="444.9" width="4.5" height="1" fill="#8a8a8a"/><rect x="97.5" y="457.3" width="4.5" height="1" fill="#8a8a8a"/><rect x="97.5" y="469.8" width="4.5" height="1" fill="#8a8a8a"/><rect x="94" y="482.2" width="8" height="1" fill="#8a8a8a"/><rect x="97.5" y="494.7" width="4.5" height="1" fill="#8a8a8a"/><rect x="97.5" y="507.2" width="4.5" height="1" fill="#8a8a8a"/><rect x="97.5" y="519.6" width="4.5" height="1" fill="#8a8a8a"/><rect x="97.5" y="532.0" width="4.5" height="1" fill="#8a8a8a"/><rect x="83" y="544.5" width="19" height="1" fill="#9a9a9a"/><rect x="97.5" y="557.0" width="4.5" height="1" fill="#8a8a8a"/><rect x="97.5" y="569.4" width="4.5" height="1" fill="#8a8a8a"/><rect x="97.5" y="581.8" width="4.5" height="1" fill="#8a8a8a"/><rect x="97.5" y="594.3" width="4.5" height="1" fill="#8a8a8a"/><rect x="94" y="606.8" width="8" height="1" fill="#8a8a8a"/><rect x="97.5" y="619.2" width="4.5" height="1" fill="#8a8a8a"/><rect x="97.5" y="631.7" width="4.5" height="1" fill="#8a8a8a"/><rect x="97.5" y="644.1" width="4.5" height="1" fill="#8a8a8a"/><rect x="97.5" y="656.5" width="4.5" height="1" fill="#8a8a8a"/><rect x="83" y="669.0" width="19" height="1" fill="#9a9a9a"/><rect x="97.5" y="681.4" width="4.5" height="1" fill="#8a8a8a"/><rect x="97.5" y="693.9" width="4.5" height="1" fill="#8a8a8a"/><rect x="97.5" y="706.4" width="4.5" height="1" fill="#8a8a8a"/><rect x="97.5" y="718.8" width="4.5" height="1" fill="#8a8a8a"/><rect x="94" y="731.2" width="8" height="1" fill="#8a8a8a"/><rect x="97.5" y="743.7" width="4.5" height="1" fill="#8a8a8a"/><rect x="97.5" y="756.1" width="4.5" height="1" fill="#8a8a8a"/><rect x="97.5" y="768.6" width="4.5" height="1" fill="#8a8a8a"/><rect x="97.5" y="781.1" width="4.5" height="1" fill="#8a8a8a"/><rect x="83" y="793.5" width="19" height="1" fill="#9a9a9a"/><rect x="97.5" y="805.9" width="4.5" height="1" fill="#8a8a8a"/><rect x="97.5" y="818.4" width="4.5" height="1" fill="#8a8a8a"/><rect x="97.5" y="830.9" width="4.5" height="1" fill="#8a8a8a"/><rect x="97.5" y="843.3" width="4.5" height="1" fill="#8a8a8a"/><rect x="94" y="855.8" width="8" height="1" fill="#8a8a8a"/><rect x="97.5" y="868.2" width="4.5" height="1" fill="#8a8a8a"/><rect x="97.5" y="880.6" width="4.5" height="1" fill="#8a8a8a"/><rect x="97.5" y="893.1" width="4.5" height="1" fill="#8a8a8a"/><rect x="97.5" y="905.6" width="4.5" height="1" fill="#8a8a8a"/><rect x="83" y="918.0" width="19" height="1" fill="#9a9a9a"/><rect x="97.5" y="930.4" width="4.5" height="1" fill="#8a8a8a"/><rect x="97.5" y="942.9" width="4.5" height="1" fill="#8a8a8a"/><rect x="97.5" y="955.4" width="4.5" height="1" fill="#8a8a8a"/><rect x="97.5" y="967.8" width="4.5" height="1" fill="#8a8a8a"/><rect x="94" y="980.2" width="8" height="1" fill="#8a8a8a"/><rect x="97.5" y="992.7" width="4.5" height="1" fill="#8a8a8a"/><rect x="97.5" y="1005.1" width="4.5" height="1" fill="#8a8a8a"/><rect x="97.5" y="1017.6" width="4.5" height="1" fill="#8a8a8a"/><rect x="97.5" y="1030.1" width="4.5" height="1" fill="#8a8a8a"/><rect x="83" y="1042.5" width="19" height="1" fill="#9a9a9a"/><rect x="97.5" y="1054.9" width="4.5" height="1" fill="#8a8a8a"/><rect x="97.5" y="1067.4" width="4.5" height="1" fill="#8a8a8a"/><rect x="97.5" y="1079.8" width="4.5" height="1" fill="#8a8a8a"/><rect x="97.5" y="1092.3" width="4.5" height="1" fill="#8a8a8a"/><rect x="94" y="1104.8" width="8" height="1" fill="#8a8a8a"/><rect x="97.5" y="1117.2" width="4.5" height="1" fill="#8a8a8a"/><rect x="97.5" y="1129.7" width="4.5" height="1" fill="#8a8a8a"/><rect x="97.5" y="1142.1" width="4.5" height="1" fill="#8a8a8a"/><rect x="97.5" y="1154.6" width="4.5" height="1" fill="#8a8a8a"/><rect x="83" y="1167.0" width="19" height="1" fill="#9a9a9a"/><rect x="97.5" y="1179.4" width="4.5" height="1" fill="#8a8a8a"/><rect x="97.5" y="1191.9" width="4.5" height="1" fill="#8a8a8a"/><rect x="97.5" y="1204.4" width="4.5" height="1" fill="#8a8a8a"/><rect x="97.5" y="1216.8" width="4.5" height="1" fill="#8a8a8a"/><rect x="94" y="1229.2" width="8" height="1" fill="#8a8a8a"/><rect x="97.5" y="1241.7" width="4.5" height="1" fill="#8a8a8a"/><rect x="97.5" y="1254.1" width="4.5" height="1" fill="#8a8a8a"/><rect x="97.5" y="1266.6" width="4.5" height="1" fill="#8a8a8a"/><rect x="97.5" y="1279.0" width="4.5" height="1" fill="#8a8a8a"/><rect x="83" y="1291.5" width="19" height="1" fill="#9a9a9a"/><rect x="97.5" y="1304.0" width="4.5" height="1" fill="#8a8a8a"/><rect x="97.5" y="1316.4" width="4.5" height="1" fill="#8a8a8a"/><rect x="97.5" y="1328.9" width="4.5" height="1" fill="#8a8a8a"/><rect x="97.5" y="1341.3" width="4.5" height="1" fill="#8a8a8a"/><rect x="94" y="1353.8" width="8" height="1" fill="#8a8a8a"/><rect x="97.5" y="1366.2" width="4.5" height="1" fill="#8a8a8a"/><rect x="97.5" y="1378.6" width="4.5" height="1" fill="#8a8a8a"/><rect x="97.5" y="1391.1" width="4.5" height="1" fill="#8a8a8a"/><rect x="97.5" y="1403.5" width="4.5" height="1" fill="#8a8a8a"/><rect x="83" y="1416.0" width="19" height="1" fill="#9a9a9a"/></svg>
<div class="t" style="left:85.5px;top:158.2px;font-size:10px;color:#bdbdbd">0</div>
<div class="t" style="left:85.5px;top:241.3px;font-size:10px;color:#bdbdbd">1</div>
<div class="t" style="left:85.5px;top:255.1px;font-size:10px;color:#bdbdbd">0</div>
<div class="t" style="left:85.5px;top:268.9px;font-size:10px;color:#bdbdbd">0</div>
<div class="t" style="left:85.5px;top:282.7px;font-size:10px;color:#bdbdbd">0</div>
<div class="t" style="left:85.5px;top:365.8px;font-size:10px;color:#bdbdbd">2</div>
<div class="t" style="left:85.5px;top:379.6px;font-size:10px;color:#bdbdbd">0</div>
<div class="t" style="left:85.5px;top:393.4px;font-size:10px;color:#bdbdbd">0</div>
<div class="t" style="left:85.5px;top:407.2px;font-size:10px;color:#bdbdbd">0</div>
<div class="t" style="left:85.5px;top:490.3px;font-size:10px;color:#bdbdbd">3</div>
<div class="t" style="left:85.5px;top:504.1px;font-size:10px;color:#bdbdbd">0</div>
<div class="t" style="left:85.5px;top:517.9px;font-size:10px;color:#bdbdbd">0</div>
<div class="t" style="left:85.5px;top:531.7px;font-size:10px;color:#bdbdbd">0</div>
<div class="t" style="left:85.5px;top:614.8px;font-size:10px;color:#bdbdbd">4</div>
<div class="t" style="left:85.5px;top:628.6px;font-size:10px;color:#bdbdbd">0</div>
<div class="t" style="left:85.5px;top:642.4px;font-size:10px;color:#bdbdbd">0</div>
<div class="t" style="left:85.5px;top:656.2px;font-size:10px;color:#bdbdbd">0</div>
<div class="t" style="left:85.5px;top:739.3px;font-size:10px;color:#bdbdbd">5</div>
<div class="t" style="left:85.5px;top:753.1px;font-size:10px;color:#bdbdbd">0</div>
<div class="t" style="left:85.5px;top:766.9px;font-size:10px;color:#bdbdbd">0</div>
<div class="t" style="left:85.5px;top:780.7px;font-size:10px;color:#bdbdbd">0</div>
<div class="t" style="left:85.5px;top:863.8px;font-size:10px;color:#bdbdbd">6</div>
<div class="t" style="left:85.5px;top:877.6px;font-size:10px;color:#bdbdbd">0</div>
<div class="t" style="left:85.5px;top:891.4px;font-size:10px;color:#bdbdbd">0</div>
<div class="t" style="left:85.5px;top:905.2px;font-size:10px;color:#bdbdbd">0</div>
<div class="t" style="left:85.5px;top:988.3px;font-size:10px;color:#bdbdbd">7</div>
<div class="t" style="left:85.5px;top:1002.1px;font-size:10px;color:#bdbdbd">0</div>
<div class="t" style="left:85.5px;top:1015.9px;font-size:10px;color:#bdbdbd">0</div>
<div class="t" style="left:85.5px;top:1029.7px;font-size:10px;color:#bdbdbd">0</div>
<div class="t" style="left:85.5px;top:1112.8px;font-size:10px;color:#bdbdbd">8</div>
<div class="t" style="left:85.5px;top:1126.6px;font-size:10px;color:#bdbdbd">0</div>
<div class="t" style="left:85.5px;top:1140.4px;font-size:10px;color:#bdbdbd">0</div>
<div class="t" style="left:85.5px;top:1154.2px;font-size:10px;color:#bdbdbd">0</div>
<div class="t" style="left:85.5px;top:1237.3px;font-size:10px;color:#bdbdbd">9</div>
<div class="t" style="left:85.5px;top:1251.1px;font-size:10px;color:#bdbdbd">0</div>
<div class="t" style="left:85.5px;top:1264.9px;font-size:10px;color:#bdbdbd">0</div>
<div class="t" style="left:85.5px;top:1278.7px;font-size:10px;color:#bdbdbd">0</div>
<div class="t" style="left:85.5px;top:1348.0px;font-size:10px;color:#bdbdbd">1</div>
<div class="t" style="left:85.5px;top:1361.8px;font-size:10px;color:#bdbdbd">0</div>
<div class="t" style="left:85.5px;top:1375.6px;font-size:10px;color:#bdbdbd">0</div>
<div class="t" style="left:85.5px;top:1389.4px;font-size:10px;color:#bdbdbd">0</div>
<div class="t" style="left:85.5px;top:1403.2px;font-size:10px;color:#bdbdbd">0</div>
<div style="position:absolute;left:0;top:0;width:1668px;height:1428px;overflow:hidden">
<div style="position:absolute;left:117.8px;top:169.6px;width:260.0px;height:1271.4px;background:#000000;border:1.2px solid #8c8c8c"></div>
<div style="position:absolute;left:436.2px;top:169.6px;width:286.8px;height:252.00000000000003px;background:#000000;border:1.2px solid #8c8c8c"></div>
<div style="position:absolute;left:746.3px;top:170.1px;width:285.20000000000005px;height:251.50000000000003px;background:#ffffff;box-shadow:0 1px 1px rgba(0,0,0,0.35), 0 0 0 0.5px #888"></div>
<div style="position:absolute;left:1056.5px;top:169.6px;width:285.0px;height:252.00000000000003px;background:#000000;border:1.2px solid #8c8c8c"></div>
<div style="position:absolute;left:1365.7px;top:170.1px;width:284.0999999999999px;height:251.50000000000003px;background:#ffffff;box-shadow:0 1px 1px rgba(0,0,0,0.35), 0 0 0 0.5px #888"></div>
<div style="position:absolute;left:436.2px;top:443.5px;width:286.8px;height:251.0px;background:#000000;border:1.2px solid #8c8c8c"></div>
<div style="position:absolute;left:746.3px;top:444.0px;width:285.20000000000005px;height:250.5px;background:#ffffff;box-shadow:0 1px 1px rgba(0,0,0,0.35), 0 0 0 0.5px #888"></div>
<div style="position:absolute;left:1056.5px;top:443.5px;width:285.0px;height:251.0px;background:#000000;border:1.2px solid #8c8c8c"></div>
<div style="position:absolute;left:1365.7px;top:444.0px;width:284.0999999999999px;height:250.5px;background:#ffffff;box-shadow:0 1px 1px rgba(0,0,0,0.35), 0 0 0 0.5px #888"></div>
<div style="position:absolute;left:436.2px;top:719.3px;width:595.8px;height:251.10000000000002px;background:#000000;border:1.2px solid #8c8c8c"></div>
<div style="position:absolute;left:1056.2px;top:719.3px;width:644.8px;height:251.10000000000002px;background:#000000;border:1.2px solid #8c8c8c"></div>
<div style="position:absolute;left:436.2px;top:1000.4px;width:1264.8px;height:419.0000000000001px;background:#000000;border:1.2px solid #8c8c8c"></div>
<div class="t" style="left:447.0px;top:724.9px;font-size:9px;color:#ffffff;font-weight:bold;">Lockup - Emblem</div>
<div class="t" style="left:1065.0px;top:724.9px;font-size:9px;color:#ffffff;font-weight:bold;">Current Build</div>
<div class="t" style="left:859.0px;top:1028.4px;font-size:9px;color:#ffffff;font-weight:bold;">Building Area</div>
<div style="position:absolute;left:825.5px;top:1030px;width:1.2px;height:355px;background:#d0d0d0"></div>
<svg style="left:0;top:0;width:0;height:0;position:absolute"><defs><linearGradient id="dripg" gradientUnits="objectBoundingBox" x1="0" y1="0" x2="0" y2="1"><stop offset="0" stop-color="currentColor"/><stop offset="1" stop-color="currentColor" stop-opacity="0.55"/></linearGradient><symbol id="LA" viewBox="0 0 180 157" overflow="visible"><path d="M51.9 80.9L46.3 76.8L36.6 76.0L30.9 78.4L29.3 85.7L32.6 90.5L44.7 93.8L50.3 98.6L51.1 106.7L47.9 113.2L41.4 118.0L30.1 119.6M54.4 118.0L54.4 85.7L68.1 83.3M54.4 96.2L66.5 95.4M54.4 110.7L68.9 109.9M72.5 116.4L72.5 74.5M72.5 78.5L84.8 112.5M84.8 114.5L84.8 72.5M86.0 78.5L101.4 78.5M94.5 78.5L94.5 116.5M105.4 114.5L105.4 77.6L116.7 77.6L120.8 85.7L119.2 92.2L106.2 95.4M115.1 95.4L124.8 111.6M118.0 77.5L130.0 95.5M142.6 74.4L126.4 112.5" fill="none" stroke="currentColor" stroke-width="3.3" stroke-linecap="round" stroke-linejoin="round"/><path d="M30.1 119.6L20.4 118.0L14.0 114.8L10.7 108.3L9.1 100.2L9.1 88.9L11.5 78.5L17.2 73.6L22.9 72.8L28.5 76.0L30.9 78.4M22.9 72.8L26.9 67.1L28.5 62.3L22.0 59.9L21.2 56.6M28.5 62.3L36.6 60.7L43.0 55.8L45.5 51.8M11.5 78.5L6.7 74.4L1.0 75.2M9.1 84.1L1.0 83.3L1.0 85.7M10.7 110.7L1.9 118.8L1.9 126.1M24.5 121.2L23.7 127.7L10.7 129.3L9.9 132.6M23.7 127.7L32.6 131.7L31.7 140.6M20.0 108.5L27.0 106.5L34.0 107.0L41.0 108.0M36.6 64.7L43.0 72.0L47.9 74.4M51.9 80.9L55.9 76.0L57.6 67.9L54.4 59.9M57.6 67.9L60.0 62.5M16.0 82.5L20.0 86.5L26.0 84.5M38.0 100.5L40.0 104.5L44.0 103.5M142.6 74.4L143.4 64.7L151.5 59.9L158.7 67.1L164.4 71.2L168.4 64.7L173.3 66.3M151.5 59.9L152.3 54.2M143.4 64.7L132.9 60.7L131.3 57.4L124.0 53.4M164.4 71.2L176.5 76.0L176.5 80.0M141.0 77.6L145.8 82.5L162.8 84.1L162.8 88.9M136.0 88.5L146.0 93.5L150.0 90.5M126.4 112.5L133.7 116.4L141.0 107.5L152.3 105.1L155.5 110.7L149.9 116.4L137.7 118.0L133.7 116.4M166.0 103.5L152.3 126.1M166.0 103.5L178.9 109.9L179.7 114.8M163.6 92.2L163.6 103.5M152.3 126.1L169.2 130.1L169.2 133.4M126.0 114.5L134.0 122.5L152.3 126.1" fill="none" stroke="currentColor" stroke-width="2.1" stroke-linecap="round" stroke-linejoin="round"/><path d="M33.8 134.9L35.1 133.4L35.6 131.8M31.7 131.3L32.4 132.9L33.8 134.9M33.5 136.4L33.8 134.9L35.4 135.1M154.3 122.9L156.9 122.7L159.4 121.4M4.7 94.3L2.6 94.4L1.5 94.0M9.1 95.0L6.7 95.0L4.7 94.3M4.0 92.8L4.7 94.3L3.3 95.0M20.0 102.6L19.1 101.3L18.3 99.7M18.7 98.6L18.3 99.7L17.3 99.3M20.9 108.2L20.2 106.6L19.9 104.4L20.0 102.6M21.2 101.6L20.0 102.6L18.9 101.4M9.1 97.3L5.7 97.5L3.3 98.6M154.2 127.4L156.3 126.5L157.2 125.8M155.0 129.4L156.2 129.9L157.2 130.5M157.5 131.6L157.2 130.5L158.3 130.2M156.5 131.7L157.7 131.2L159.2 130.9M160.1 131.6L159.2 130.9L159.8 130.0M152.5 125.7L154.2 127.4L155.0 129.4L156.5 131.7M156.1 133.3L156.5 131.7L158.0 132.1M26.5 76.4L25.4 75.6L24.1 74.2M24.2 73.1L24.1 74.2L23.0 74.1M28.2 75.8L26.5 76.4L23.3 75.6L20.7 73.6M20.4 72.0L20.7 73.6L19.1 73.8M163.0 70.2L163.4 67.1L163.0 64.5M151.2 115.1L152.7 118.1L153.2 119.9M152.4 121.3L153.2 119.9L154.6 120.6M43.3 103.7L44.9 102.1L45.6 99.1M34.4 56.0L32.6 55.4L31.4 54.3M35.7 60.9L34.3 57.7L34.4 56.0L34.1 52.8M35.2 51.6L34.1 52.8L32.9 51.8M145.0 109.0L145.2 110.8L146.5 112.6M140.9 107.7L142.8 108.0L145.0 109.0M26.1 58.6L25.1 60.7L23.5 62.5M28.1 62.2L27.4 59.7L26.1 58.6M26.0 57.0L26.1 58.6L24.5 58.7M17.7 125.2L17.7 124.0L17.2 122.7M17.7 121.7L17.2 122.7L16.2 122.2M24.0 124.9L20.9 126.0L17.7 125.2L15.9 125.8M22.6 66.6L22.4 65.0L21.8 64.1M27.3 65.8L25.6 65.4L22.6 66.6L20.3 66.4M19.3 65.2L20.3 66.4L19.1 67.4M130.5 119.0L131.0 116.9L130.8 115.1M135.7 115.3L135.7 113.4L136.2 111.1M137.2 110.6L136.2 111.1L135.6 110.2M134.7 116.8L135.7 115.3L136.3 113.2M0.7 125.9L-0.9 124.7L-1.5 123.7M-1.3 122.6L-1.5 123.7L-2.6 123.5M1.9 124.2L0.7 125.9L-0.4 128.2M6.0 104.7L5.0 104.0L4.2 102.2M4.6 101.1L4.2 102.2L3.1 101.8M7.7 113.4L6.4 110.4L6.6 106.9L6.0 104.7M6.8 103.4L6.0 104.7L4.6 104.0M17.0 128.5L16.6 130.6L15.1 133.7M13.6 134.2L15.1 133.7L15.7 135.2M27.9 124.4L28.5 125.5L30.1 126.8M29.5 119.5L28.7 121.3L27.9 124.4L26.0 126.6M24.4 126.7L26.0 126.6L26.1 128.2M167.1 72.3L165.5 69.6L163.1 68.3L161.6 67.8M36.8 65.0L35.8 67.7L35.8 69.4M11.5 74.8L10.8 73.9L10.4 72.0M12.1 78.0L11.5 74.8L10.3 73.0L10.0 71.1M136.1 122.9L135.9 125.5L134.0 128.4M132.4 128.8L134.0 128.4L134.4 130.0M10.8 81.3L8.5 80.4L5.9 78.2L4.1 77.6M24.1 71.1L22.3 70.2L20.9 68.8L19.6 66.1M20.2 64.6L19.6 66.1L18.1 65.6M23.1 81.0L21.3 79.7L20.6 78.6M27.1 75.2L25.7 76.4L25.1 78.4L23.1 81.0M27.1 129.2L26.6 132.0L27.1 133.6L26.9 135.5M165.6 102.0L164.9 103.9L164.8 105.2M163.9 105.9L164.8 105.2L165.5 106.1M163.6 101.2L165.6 102.0L167.3 103.7M57.2 66.8L54.9 68.3L52.3 69.0M56.0 75.4L53.2 74.2L51.1 72.8" fill="none" stroke="currentColor" stroke-width="1.7" stroke-linecap="round" stroke-linejoin="round"/><path d="M88.2 112.5L90.8 112.5L89.8 159.5L88.8 159.5ZM106.6 112.5L109.2 112.5L108.4 144.5L107.5 144.5ZM112.2 116.5L114.8 116.5L114.0 138.5L113.0 138.5ZM118.7 120.5L121.3 120.5L120.5 145.5L119.5 145.5ZM125.1 122.5L127.7 122.5L126.9 138.5L126.0 138.5ZM132.7 124.5L135.3 124.5L134.9 139.5L134.1 139.5ZM143.7 128.5L146.3 128.5L145.4 142.5L144.6 142.5ZM158.7 128.5L161.3 128.5L160.4 136.5L159.6 136.5ZM36.9 124.5L39.5 124.5L38.7 140.5L37.8 140.5ZM42.6 122.5L45.2 122.5L44.4 138.5L43.4 138.5ZM46.6 120.5L49.2 120.5L48.4 134.5L47.4 134.5ZM48.2 128.5L50.8 128.5L50.0 146.3L49.0 146.3ZM57.9 116.5L60.5 116.5L59.7 136.5L58.8 136.5ZM61.9 118.5L64.5 118.5L63.7 143.9L62.8 143.9ZM66.7 120.5L69.3 120.5L68.5 138.5L67.5 138.5ZM75.7 118.5L78.3 118.5L77.5 144.7L76.5 144.7ZM82.1 118.5L84.7 118.5L84.7 151.1L83.8 151.1ZM88.6 118.5L91.2 118.5L90.4 160.0L89.5 160.0ZM96.7 116.5L99.3 116.5L98.5 148.5L97.5 148.5ZM100.7 118.5L103.3 118.5L102.5 140.5L101.5 140.5ZM55.7 112.5L58.3 112.5L57.5 128.5L56.5 128.5ZM70.7 116.5L73.3 116.5L72.5 132.5L71.5 132.5ZM78.7 114.5L81.3 114.5L80.5 134.5L79.5 134.5ZM22.4 108.3L25.0 108.3L24.1 112.4L23.2 112.4ZM29.6 107.5L32.2 107.5L31.3 113.2L30.4 113.2ZM16.7 108.5L19.3 108.5L18.4 114.5L17.6 114.5ZM12.7 129.5L15.3 129.5L14.4 134.5L13.6 134.5ZM26.7 129.5L29.3 129.5L28.4 136.5L27.6 136.5ZM158.7 84.5L161.3 84.5L160.4 90.5L159.6 90.5ZM172.7 76.5L175.3 76.5L174.4 82.5L173.6 82.5ZM174.7 110.5L177.3 110.5L176.4 116.5L175.6 116.5ZM163.7 130.5L166.3 130.5L165.4 138.5L164.6 138.5ZM138.7 118.5L141.3 118.5L140.4 128.5L139.6 128.5Z" fill="currentColor" opacity="0.88"/><path d="M86.0 27.0L63.0 58.0M86.0 27.0L113.0 58.0M61.0 58.0L115.0 58.0M86.0 27.0L85.0 1.0M81.5 33.0L93.9 45.5L103.3 58.0M76.4 40.0L85.7 49.0L92.0 58.0M71.2 47.0L77.5 52.5L80.7 58.0M66.7 53.0L70.4 55.5L71.1 58.0" fill="none" stroke="currentColor" stroke-width="2.8" stroke-linecap="round" stroke-linejoin="round"/><path d="M88.5 6 V26 M82 13 L85 19" stroke="currentColor" stroke-width="1.8" fill="none"/><path d="M76.0 38.0L66.0 30.0L60.0 34.0L56.0 27.0M72.0 46.0L61.0 43.0L54.0 48.0L48.0 44.0M66.0 55.0L54.0 56.0L46.0 61.0L38.0 58.0M96.0 38.0L106.0 30.0L112.0 34.0L118.0 27.0M100.0 46.0L111.0 43.0L118.0 48.0L126.0 45.0M108.0 55.0L120.0 56.0L128.0 61.0L136.0 58.0M81.0 30.0L72.0 22.0L70.0 14.0M91.0 30.0L100.0 22.0L102.0 14.0M62.0 26.0L70.0 20.0M110.0 20.0L104.0 26.0" fill="none" stroke="currentColor" stroke-width="2.0" stroke-linecap="round" stroke-linejoin="round"/><path d="M52.3 46.9L50.6 48.9L49.4 51.1M109.2 15.2L108.2 13.1L107.0 12.3M109.2 20.8L108.4 17.3L109.2 15.2M50.4 56.0L48.8 56.3L47.2 56.1M48.8 54.5L49.4 52.7L50.2 51.4M51.3 57.7L50.4 56.0L48.8 54.5L47.8 53.0M122.8 57.8L122.9 54.1L122.4 52.0L122.3 49.0M118.3 29.4L119.8 27.4L122.1 26.3M116.7 28.5L118.3 29.4L120.4 31.6M49.7 56.8L47.5 56.4L46.1 55.3M46.0 54.1L46.1 55.3L44.9 55.4M52.3 51.1L54.1 50.6L56.1 49.4M49.7 58.7L49.7 56.8L50.4 54.0L52.3 51.1M54.0 50.7L52.3 51.1L51.9 49.4M58.1 55.7L55.7 57.7L53.0 59.4M66.2 22.8L62.6 22.5L59.7 20.5M59.4 18.8L59.7 20.5L58.0 20.9M105.1 51.1L107.4 50.2L108.4 49.4M109.6 49.5L108.4 49.4L108.6 48.2M100.7 45.8L102.9 46.7L104.7 49.0L105.1 51.1M132.4 63.8L133.1 65.1L134.6 67.0M128.2 60.9L130.2 63.1L132.4 63.8M133.1 65.3L132.4 63.8L133.9 63.0M103.4 36.9L102.1 37.1L100.9 37.1M101.2 33.8L103.4 36.9L105.7 37.8M62.8 60.2L63.0 61.9L62.9 63.5M62.0 64.3L62.9 63.5L63.7 64.4M61.0 55.4L61.7 58.5L62.8 60.2M112.1 43.8L113.2 42.1L113.9 40.0M109.7 37.0L111.1 37.4L113.1 37.0M105.1 30.7L107.6 33.1L108.4 35.5L109.7 37.0M109.5 38.7L109.7 37.0L111.4 37.2M110.1 57.0L112.4 56.9L114.0 55.8M115.1 56.1L114.0 55.8L114.1 54.7M109.4 55.1L110.1 57.0L110.6 60.1M113.7 57.5L112.3 57.4L110.3 57.5M113.6 55.5L113.7 57.5L114.9 59.6L115.3 62.5M118.8 49.8L116.4 49.6L115.1 49.3M118.7 47.7L118.8 49.8L120.3 52.1L121.8 53.1M112.0 47.7L113.1 49.4L113.8 51.2M104.1 44.9L105.5 46.1L108.8 47.7L112.0 47.7M113.1 48.9L112.0 47.7L113.1 46.5M60.1 57.5L58.9 58.5L58.1 60.1M60.3 55.5L60.1 57.5L60.6 60.3L60.2 64.0M58.9 65.1L60.2 64.0L61.3 65.3M81.2 22.4L82.6 24.4L84.4 25.5M84.6 26.7L84.4 25.5L85.5 25.3M77.7 27.1L78.7 24.5L81.2 22.4M82.9 22.6L81.2 22.4L81.3 20.7M115.9 44.0L118.2 43.0L119.3 41.6M120.5 41.5L119.3 41.6L119.2 40.4M115.7 46.3L115.9 44.0L114.4 41.1L114.7 39.3M122.1 48.3L124.4 47.7L126.0 46.3M127.2 46.5L126.0 46.3L126.1 45.2M121.3 46.8L122.1 48.3L122.9 51.1L122.4 53.1M120.9 53.9L122.4 53.1L123.3 54.5M64.8 35.4L66.8 36.4L67.7 37.7M67.2 31.0L65.5 32.9L64.8 35.4L62.4 38.1M60.7 38.2L62.4 38.1L62.6 39.8M63.5 24.9L61.9 21.7L59.1 20.1M46.4 60.7L45.5 57.8L46.1 55.7L46.0 52.8M47.2 51.5L46.0 52.8L44.8 51.6M67.6 35.2L68.6 36.0L70.3 38.0M70.0 33.2L67.6 35.2L66.6 38.3M65.0 39.0L66.6 38.3L67.3 39.8M69.9 57.5L71.4 56.5L73.0 54.5M74.2 54.4L73.0 54.5L72.8 53.3M64.1 55.2L67.0 57.2L69.9 57.5M101.4 16.3L102.5 17.7L102.9 19.5L104.2 21.3M103.9 22.9L104.2 21.3L105.9 21.5M68.6 19.4L66.6 19.9L65.2 19.7M70.7 17.0L68.6 19.4L68.0 21.2M66.4 21.9L68.0 21.2L68.7 22.7M73.7 23.5L76.0 22.6L78.4 20.8M80.1 21.0L78.4 20.8L78.5 19.1M107.1 30.7L109.9 29.7L112.3 27.5M40.2 62.1L38.4 61.8L36.9 62.2M42.1 59.5L40.2 62.1L39.6 65.8M40.1 62.0L41.7 63.5L42.5 64.6M38.1 63.5L36.2 62.7L34.8 61.9M42.1 59.5L40.1 62.0L38.1 63.5M36.4 63.2L38.1 63.5L37.9 65.2M65.0 55.1L65.6 58.1L67.4 60.5L68.5 63.4M67.8 64.9L68.5 63.4L70.1 64.1M101.7 35.9L100.0 35.6L99.1 34.6M99.1 33.4L99.1 34.6L97.9 34.7M101.9 33.3L101.7 35.9L102.2 39.2M51.8 30.2L50.4 30.9L49.2 31.0M58.3 31.0L55.3 31.2L51.8 30.2" fill="none" stroke="currentColor" stroke-width="1.7" stroke-linecap="round" stroke-linejoin="round"/><path d="M95.6 58L97.8 58L97.1 66.8L96.3 64.0ZM80.4 58L82.6 58L81.9 65.8L81.1 64.0ZM76.6 58L78.8 58L78.1 66.4L77.3 64.0ZM74.8 58L77.0 58L76.3 64.4L75.5 64.0ZM97.5 58L99.7 58L99.0 68.8L98.2 64.0ZM106.3 58L108.5 58L107.8 65.1L107.0 64.0ZM88.1 58L90.3 58L89.6 66.8L88.8 64.0ZM74.5 58L76.7 58L76.0 67.9L75.2 64.0ZM100.2 58L102.4 58L101.7 67.9L100.9 64.0ZM82.1 58L84.3 58L83.6 65.8L82.8 64.0ZM74.2 58L76.4 58L75.7 64.8L74.9 64.0ZM70.6 58L72.8 58L72.1 66.3L71.3 64.0ZM99.1 58L101.3 58L100.6 63.8L99.8 64.0ZM100.5 58L102.7 58L102.0 68.0L101.2 64.0Z" fill="currentColor" opacity="0.85"/></symbol><symbol id="LA2" viewBox="0 0 180 157" overflow="visible"><path d="M51.9 80.9L46.3 76.8L36.6 76.0L30.9 78.4L29.3 85.7L32.6 90.5L44.7 93.8L50.3 98.6L51.1 106.7L47.9 113.2L41.4 118.0L30.1 119.6M54.4 118.0L54.4 85.7L68.1 83.3M54.4 96.2L66.5 95.4M54.4 110.7L68.9 109.9M72.5 116.4L72.5 74.5M72.5 78.5L84.8 112.5M84.8 114.5L84.8 72.5M86.0 78.5L101.4 78.5M94.5 78.5L94.5 116.5M105.4 114.5L105.4 77.6L116.7 77.6L120.8 85.7L119.2 92.2L106.2 95.4M115.1 95.4L124.8 111.6M118.0 77.5L130.0 95.5M142.6 74.4L126.4 112.5" fill="none" stroke="currentColor" stroke-width="3.3" stroke-linecap="round" stroke-linejoin="round"/><path d="M30.1 119.6L20.4 118.0L14.0 114.8L10.7 108.3L9.1 100.2L9.1 88.9L11.5 78.5L17.2 73.6L22.9 72.8L28.5 76.0L30.9 78.4M22.9 72.8L26.9 67.1L28.5 62.3L22.0 59.9L21.2 56.6M28.5 62.3L36.6 60.7L43.0 55.8L45.5 51.8M11.5 78.5L6.7 74.4L1.0 75.2M9.1 84.1L1.0 83.3L1.0 85.7M10.7 110.7L1.9 118.8L1.9 126.1M24.5 121.2L23.7 127.7L10.7 129.3L9.9 132.6M23.7 127.7L32.6 131.7L31.7 140.6M20.0 108.5L27.0 106.5L34.0 107.0L41.0 108.0M36.6 64.7L43.0 72.0L47.9 74.4M51.9 80.9L55.9 76.0L57.6 67.9L54.4 59.9M57.6 67.9L60.0 62.5M16.0 82.5L20.0 86.5L26.0 84.5M38.0 100.5L40.0 104.5L44.0 103.5M142.6 74.4L143.4 64.7L151.5 59.9L158.7 67.1L164.4 71.2L168.4 64.7L173.3 66.3M151.5 59.9L152.3 54.2M143.4 64.7L132.9 60.7L131.3 57.4L124.0 53.4M164.4 71.2L176.5 76.0L176.5 80.0M141.0 77.6L145.8 82.5L162.8 84.1L162.8 88.9M136.0 88.5L146.0 93.5L150.0 90.5M126.4 112.5L133.7 116.4L141.0 107.5L152.3 105.1L155.5 110.7L149.9 116.4L137.7 118.0L133.7 116.4M166.0 103.5L152.3 126.1M166.0 103.5L178.9 109.9L179.7 114.8M163.6 92.2L163.6 103.5M152.3 126.1L169.2 130.1L169.2 133.4M126.0 114.5L134.0 122.5L152.3 126.1" fill="none" stroke="currentColor" stroke-width="2.1" stroke-linecap="round" stroke-linejoin="round"/><path d="M16.3 55.6L15.8 53.5L14.7 52.2M21.4 57.4L18.3 55.8L16.3 55.6L14.8 54.7M22.3 76.0L22.4 77.4L23.3 79.4M22.9 80.5L23.3 79.4L24.3 79.8M24.5 73.7L22.3 76.0L20.6 79.0L19.9 81.4M18.5 82.2L19.9 81.4L20.7 82.9M153.1 129.1L151.6 128.8L150.2 128.9M149.4 128.1L150.2 128.9L149.5 129.7M156.6 127.1L154.6 128.6L153.1 129.1L150.3 129.1M149.2 128.0L150.3 129.1L149.2 130.3M9.1 93.3L7.7 92.4L4.2 91.7L1.8 92.6M0.4 91.9L1.8 92.6L1.2 94.0M175.5 102.6L177.4 102.1L178.8 100.5M172.1 106.5L174.0 104.1L175.5 102.6M177.1 102.7L175.5 102.6L175.5 101.0M129.6 109.7L128.0 109.5L126.3 110.2M125.2 109.8L126.3 110.2L125.8 111.3M129.7 118.2L130.5 115.0L129.6 112.4L129.6 109.7M131.1 117.2L132.3 117.6L134.1 119.1M129.6 118.1L131.1 117.2L132.7 115.5M10.0 104.9L6.9 105.9L5.6 107.4M139.4 109.4L141.6 112.2L141.8 113.9M135.9 119.3L137.7 118.4L140.1 118.3M135.2 114.6L135.0 117.2L135.9 119.3L135.9 121.9M134.8 123.0L135.9 121.9L137.1 123.0M15.8 115.7L14.8 118.3L13.5 119.8M174.4 75.2L175.6 72.9L175.5 70.1M154.1 123.1L156.5 124.0L158.6 126.7L160.2 128.0M10.2 76.4L8.3 76.3L6.0 76.9M5.0 76.4L6.0 76.9L5.4 77.9M11.5 78.5L10.2 76.4L10.3 72.9L9.6 70.1M10.5 68.7L9.6 70.1L8.2 69.3M47.2 67.3L49.2 67.9L51.5 67.3M52.4 67.9L51.5 67.3L52.0 66.4M48.9 65.7L48.2 64.2L46.7 62.5M43.3 72.1L45.4 70.1L47.2 67.3L48.9 65.7M176.1 108.5L175.0 105.5L173.6 103.4M145.2 69.9L145.1 68.7L144.5 67.2M144.9 66.2L144.5 67.2L143.4 66.8M143.0 69.9L145.2 69.9L148.3 70.7L151.6 70.9M140.1 82.5L142.3 82.4L143.6 81.3M136.4 88.7L137.2 86.9L139.3 84.9L140.1 82.5M149.5 116.5L151.8 117.8L155.2 118.9L158.2 120.6M137.2 112.1L139.1 114.1L140.3 117.4L142.8 119.2M143.0 120.8L142.8 119.2L144.3 118.9M165.2 61.3L167.1 62.4L168.3 64.1M158.6 67.0L159.8 64.4L162.2 62.6L165.2 61.3M33.7 66.5L34.7 68.7L36.0 69.9M36.0 71.0L36.0 69.9L37.1 69.8M36.9 65.1L33.7 66.5L30.8 66.5M43.5 110.3L44.2 111.4L44.9 113.3M44.4 114.3L44.9 113.3L45.9 113.8M46.2 112.0L46.0 114.3L46.7 115.6M40.4 107.9L41.6 109.5L43.5 110.3L46.2 112.0M161.0 68.8L161.6 66.5L163.1 64.6L163.8 62.7M158.9 115.2L159.6 117.0L159.4 119.2M12.1 81.7L13.9 81.1L15.5 80.0M11.3 78.3L11.3 80.1L12.1 81.7M154.4 74.8L156.0 74.8L157.5 75.6M151.7 83.1L152.0 80.2L152.8 77.7L154.4 74.8M156.0 74.3L154.4 74.8L154.0 73.2M20.5 128.1L22.1 129.1L24.9 129.9L28.2 129.7M174.3 66.4L175.9 66.1L178.0 66.2M172.1 74.3L172.6 71.5L174.0 68.4L174.3 66.4M175.7 65.6L174.3 66.4L173.4 65.1M36.6 107.4L38.1 110.1L39.9 111.1L41.8 113.7M14.3 114.9L14.2 117.7L15.8 120.6L18.1 122.5M146.6 82.6L146.0 81.0L145.0 79.5L143.5 78.5M143.1 77.0L143.5 78.5L141.9 78.9" fill="none" stroke="currentColor" stroke-width="1.7" stroke-linecap="round" stroke-linejoin="round"/><path d="M88.2 112.5L90.8 112.5L89.8 159.5L88.8 159.5ZM106.6 112.5L109.2 112.5L108.4 144.5L107.5 144.5ZM112.2 116.5L114.8 116.5L114.0 138.5L113.0 138.5ZM118.7 120.5L121.3 120.5L120.5 145.5L119.5 145.5ZM125.1 122.5L127.7 122.5L126.9 138.5L126.0 138.5ZM132.7 124.5L135.3 124.5L134.9 139.5L134.1 139.5ZM143.7 128.5L146.3 128.5L145.4 142.5L144.6 142.5ZM158.7 128.5L161.3 128.5L160.4 136.5L159.6 136.5ZM36.9 124.5L39.5 124.5L38.7 140.5L37.8 140.5ZM42.6 122.5L45.2 122.5L44.4 138.5L43.4 138.5ZM46.6 120.5L49.2 120.5L48.4 134.5L47.4 134.5ZM48.2 128.5L50.8 128.5L50.0 146.3L49.0 146.3ZM57.9 116.5L60.5 116.5L59.7 136.5L58.8 136.5ZM61.9 118.5L64.5 118.5L63.7 143.9L62.8 143.9ZM66.7 120.5L69.3 120.5L68.5 138.5L67.5 138.5ZM75.7 118.5L78.3 118.5L77.5 144.7L76.5 144.7ZM82.1 118.5L84.7 118.5L84.7 151.1L83.8 151.1ZM88.6 118.5L91.2 118.5L90.4 160.0L89.5 160.0ZM96.7 116.5L99.3 116.5L98.5 148.5L97.5 148.5ZM100.7 118.5L103.3 118.5L102.5 140.5L101.5 140.5ZM55.7 112.5L58.3 112.5L57.5 128.5L56.5 128.5ZM70.7 116.5L73.3 116.5L72.5 132.5L71.5 132.5ZM78.7 114.5L81.3 114.5L80.5 134.5L79.5 134.5ZM22.4 108.3L25.0 108.3L24.1 112.4L23.2 112.4ZM29.6 107.5L32.2 107.5L31.3 113.2L30.4 113.2ZM16.7 108.5L19.3 108.5L18.4 114.5L17.6 114.5ZM12.7 129.5L15.3 129.5L14.4 134.5L13.6 134.5ZM26.7 129.5L29.3 129.5L28.4 136.5L27.6 136.5ZM158.7 84.5L161.3 84.5L160.4 90.5L159.6 90.5ZM172.7 76.5L175.3 76.5L174.4 82.5L173.6 82.5ZM174.7 110.5L177.3 110.5L176.4 116.5L175.6 116.5ZM163.7 130.5L166.3 130.5L165.4 138.5L164.6 138.5ZM138.7 118.5L141.3 118.5L140.4 128.5L139.6 128.5Z" fill="currentColor" opacity="0.88"/><path d="M86.0 27.0L63.0 58.0M86.0 27.0L113.0 58.0M61.0 58.0L115.0 58.0M86.0 27.0L85.0 1.0M81.5 33.0L93.9 45.5L103.3 58.0M76.4 40.0L85.7 49.0L92.0 58.0M71.2 47.0L77.5 52.5L80.7 58.0M66.7 53.0L70.4 55.5L71.1 58.0" fill="none" stroke="currentColor" stroke-width="2.8" stroke-linecap="round" stroke-linejoin="round"/><path d="M88.5 6 V26 M82 13 L85 19" stroke="currentColor" stroke-width="1.8" fill="none"/><path d="M76.0 38.0L66.0 30.0L60.0 34.0L56.0 27.0M72.0 46.0L61.0 43.0L54.0 48.0L48.0 44.0M66.0 55.0L54.0 56.0L46.0 61.0L38.0 58.0M96.0 38.0L106.0 30.0L112.0 34.0L118.0 27.0M100.0 46.0L111.0 43.0L118.0 48.0L126.0 45.0M108.0 55.0L120.0 56.0L128.0 61.0L136.0 58.0M81.0 30.0L72.0 22.0L70.0 14.0M91.0 30.0L100.0 22.0L102.0 14.0M62.0 26.0L70.0 20.0M110.0 20.0L104.0 26.0" fill="none" stroke="currentColor" stroke-width="2.0" stroke-linecap="round" stroke-linejoin="round"/><path d="M113.3 32.5L114.1 31.0L115.2 30.3M116.4 30.6L115.2 30.3L115.5 29.1M115.3 32.6L116.1 31.1L116.3 29.8M117.2 29.1L116.3 29.8L115.5 28.9M110.5 33.0L113.3 32.5L115.3 32.6L117.9 33.8M109.2 55.1L110.7 57.9L111.3 60.4M80.9 29.9L83.1 29.2L84.3 27.7M115.5 33.8L113.5 35.4L113.0 36.5M117.6 36.1L118.5 34.6L120.2 33.7M121.3 34.1L120.2 33.7L120.5 32.6M113.1 32.7L115.5 33.8L117.6 36.1M113.3 55.4L113.4 57.4L112.1 60.5L111.9 63.2M100.2 21.2L102.0 22.4L103.5 25.1L103.8 28.4M61.4 60.1L60.2 60.6L58.9 62.0M60.0 55.5L61.0 57.3L61.4 60.1M78.9 21.5L80.5 22.8L82.0 23.6M82.3 24.7L82.0 23.6L83.2 23.2M81.4 20.3L80.2 18.5L78.8 17.1M78.8 15.9L78.8 17.1L77.6 17.1M74.8 24.5L77.8 22.8L78.9 21.5L81.4 20.3M101.9 14.3L104.6 13.8L106.9 12.8M63.9 35.2L64.0 36.9L63.3 39.2M68.4 31.9L66.6 33.8L63.9 35.2M62.2 34.7L63.9 35.2L63.4 36.8M132.0 59.5L133.9 61.4L136.2 62.5L138.3 65.4M114.5 55.5L116.0 57.2L117.6 60.4L118.0 62.8M57.3 45.7L56.8 44.0L56.5 42.0L57.1 38.7M58.5 37.7L57.1 38.7L56.1 37.3M110.5 45.7L109.9 47.5L109.6 49.6M113.0 47.9L114.5 47.0L116.1 45.1M117.3 45.0L116.1 45.1L116.0 43.9M107.3 44.0L110.5 45.7L113.0 47.9M113.1 49.6L113.0 47.9L114.7 47.7M118.7 47.8L121.7 49.1L124.4 49.4M125.4 50.7L124.4 49.4L125.7 48.3M114.9 49.0L116.0 47.4L116.6 45.6M110.3 43.2L111.4 46.1L112.9 47.8L114.9 49.0M61.1 55.4L60.0 57.8L59.8 60.8M58.5 61.9L59.8 60.8L61.0 62.1M119.3 55.9L118.5 58.8L118.3 60.6M59.8 31.5L57.7 32.6L56.8 33.9M57.7 30.3L57.5 31.8L56.4 33.5M62.8 32.1L59.8 31.5L57.7 30.3M45.9 58.2L46.4 56.1L45.9 53.5M49.2 59.0L45.9 58.2L43.0 56.0M59.7 55.5L59.5 57.8L59.7 60.2L58.8 63.8M57.3 64.6L58.8 63.8L59.7 65.3M67.5 20.8L66.5 19.5L64.8 18.4M70.7 16.8L69.2 19.1L67.5 20.8M76.2 17.4L75.9 15.3L76.0 13.8M73.3 23.1L74.4 20.1L76.2 17.4L76.4 14.3M77.7 13.2L76.4 14.3L75.3 13.0M116.4 28.9L119.8 29.3L121.8 30.1M78.5 27.8L80.9 27.2L83.6 27.9M68.6 32.1L68.3 34.7L68.8 37.9M67.8 39.2L68.8 37.9L70.2 38.8M111.3 55.3L109.8 56.9L109.3 59.3M107.9 60.2L109.3 59.3L110.2 60.7M114.7 42.5L117.2 42.6L118.6 43.2M112.7 44.2L114.7 42.5L116.9 39.6M55.1 55.9L56.1 57.9L56.6 60.1L58.4 62.8M116.7 55.7L117.8 57.9L120.7 59.7L123.8 60.9M71.3 45.8L71.1 47.9L71.3 49.6L69.8 52.8M46.0 61.0L43.3 58.5L40.6 57.3M104.0 17.3L102.5 17.9L101.6 18.9M101.8 14.7L104.0 17.3L104.3 19.3M101.3 16.8L104.6 17.4L107.1 18.4M76.5 23.6L74.4 22.2L73.6 20.8M79.2 17.9L78.7 15.9L78.6 14.3M79.4 13.4L78.6 14.3L77.7 13.5M75.4 25.0L76.5 23.6L77.3 20.4L79.2 17.9M115.7 32.1L117.5 32.1L119.2 32.6M119.4 32.5L119.5 30.9L119.4 29.7M120.1 28.8L119.4 29.7L118.4 28.9M114.1 31.6L115.7 32.1L119.4 32.5M120.4 33.8L119.4 32.5L120.7 31.4" fill="none" stroke="currentColor" stroke-width="1.7" stroke-linecap="round" stroke-linejoin="round"/><path d="M65.8 58L68.0 58L67.3 66.0L66.5 64.0ZM102.6 58L104.8 58L104.1 68.6L103.3 64.0ZM79.2 58L81.4 58L80.7 63.5L79.9 64.0ZM94.8 58L97.0 58L96.3 66.6L95.5 64.0ZM100.0 58L102.2 58L101.5 63.3L100.7 64.0ZM99.7 58L101.9 58L101.2 65.7L100.4 64.0ZM71.7 58L73.9 58L73.2 64.6L72.4 64.0ZM68.0 58L70.2 58L69.5 64.0L68.7 64.0ZM84.0 58L86.2 58L85.5 68.7L84.7 64.0ZM108.4 58L110.6 58L109.9 64.4L109.1 64.0ZM65.4 58L67.6 58L66.9 67.5L66.1 64.0ZM71.5 58L73.7 58L73.0 68.5L72.2 64.0ZM105.6 58L107.8 58L107.1 67.4L106.3 64.0ZM69.9 58L72.1 58L71.4 68.1L70.6 64.0Z" fill="currentColor" opacity="0.85"/></symbol><symbol id="LB" viewBox="0 0 180 112" overflow="visible"><path d="M51.9 32.4L46.3 28.3L36.6 27.5L30.9 29.9L29.3 37.2L32.6 42.0L44.7 45.3L50.3 50.1L51.1 58.2L47.9 64.7L41.4 69.5L30.1 71.1M54.4 69.5L54.4 37.2L68.1 34.8M54.4 47.7L66.5 46.9M54.4 62.2L68.9 61.4M72.5 67.9L72.5 26.0M72.5 30.0L84.8 64.0M84.8 66.0L84.8 24.0M86.0 30.0L101.4 30.0M94.5 30.0L94.5 68.0M105.4 66.0L105.4 29.1L116.7 29.1L120.8 37.2L119.2 43.7L106.2 46.9M115.1 46.9L124.8 63.1M118.0 29.0L130.0 47.0M142.6 25.9L126.4 64.0" fill="none" stroke="currentColor" stroke-width="3.3" stroke-linecap="round" stroke-linejoin="round"/><path d="M30.1 71.1L20.4 69.5L14.0 66.3L10.7 59.8L9.1 51.7L9.1 40.4L11.5 30.0L17.2 25.1L22.9 24.3L28.5 27.5L30.9 29.9M22.9 24.3L26.9 18.6L28.5 13.8L22.0 11.4L21.2 8.1M28.5 13.8L36.6 12.2L43.0 7.3L45.5 3.3M11.5 30.0L6.7 25.9L1.0 26.7M9.1 35.6L1.0 34.8L1.0 37.2M10.7 62.2L1.9 70.3L1.9 77.6M24.5 72.7L23.7 79.2L10.7 80.8L9.9 84.1M23.7 79.2L32.6 83.2L31.7 92.1M20.0 60.0L27.0 58.0L34.0 58.5L41.0 59.5M36.6 16.2L43.0 23.5L47.9 25.9M51.9 32.4L55.9 27.5L57.6 19.4L54.4 11.4M57.6 19.4L60.0 14.0M16.0 34.0L20.0 38.0L26.0 36.0M38.0 52.0L40.0 56.0L44.0 55.0M142.6 25.9L143.4 16.2L151.5 11.4L158.7 18.6L164.4 22.7L168.4 16.2L173.3 17.8M151.5 11.4L152.3 5.7M143.4 16.2L132.9 12.2L131.3 8.9L124.0 4.9M164.4 22.7L176.5 27.5L176.5 31.5M141.0 29.1L145.8 34.0L162.8 35.6L162.8 40.4M136.0 40.0L146.0 45.0L150.0 42.0M126.4 64.0L133.7 67.9L141.0 59.0L152.3 56.6L155.5 62.2L149.9 67.9L137.7 69.5L133.7 67.9M166.0 55.0L152.3 77.6M166.0 55.0L178.9 61.4L179.7 66.3M163.6 43.7L163.6 55.0M152.3 77.6L169.2 81.6L169.2 84.9M126.0 66.0L134.0 74.0L152.3 77.6" fill="none" stroke="currentColor" stroke-width="2.1" stroke-linecap="round" stroke-linejoin="round"/><path d="M14.6 36.1L13.5 35.4L11.8 35.1M12.3 38.3L13.3 39.5L15.1 40.4M17.1 35.1L14.6 36.1L12.3 38.3L11.4 40.2M166.1 65.0L166.3 63.0L166.9 61.6M167.9 61.2L166.9 61.6L166.4 60.6M159.9 65.0L161.5 65.6L164.7 65.7L166.1 65.0M157.4 81.6L159.0 81.2L160.4 81.3M161.1 82.2L160.4 81.3L161.2 80.6M156.9 83.1L157.9 83.8L158.6 85.2M158.2 86.3L158.6 85.2L159.7 85.6M156.4 78.6L157.4 81.6L156.9 83.1M155.5 83.9L156.9 83.1L157.7 84.5M180.0 26.9L178.8 25.3L177.3 24.6M176.5 28.1L178.3 28.0L180.0 26.9L181.0 25.5M157.6 9.1L157.7 7.9L158.2 6.1M159.3 5.6L158.2 6.1L157.7 5.1M153.3 13.2L155.5 11.7L157.6 9.1M159.2 9.0L157.6 9.1L157.5 7.5M179.1 62.7L181.6 62.1M43.0 55.2L42.0 53.8L39.2 52.6L37.0 50.7M56.6 24.3L54.2 24.2L51.4 24.5L49.2 23.7M56.2 18.2L54.6 18.5L53.5 19.4M52.4 19.2L53.5 19.4L53.3 20.5M57.8 19.0L56.2 18.2L54.7 16.3M54.9 14.7L54.7 16.3L53.1 16.1M147.8 29.5L145.6 29.0L144.1 28.0M144.0 26.9L144.1 28.0L143.0 28.2M153.1 34.7L151.5 33.0L150.6 31.4L147.8 29.5M141.7 75.5L142.1 78.3L141.5 80.4M140.0 81.1L141.5 80.4L142.3 81.8M24.0 19.6L23.0 20.6L21.2 21.7M25.2 21.0L24.0 19.6L22.2 18.4M156.4 13.0L157.2 14.1L158.7 15.2M159.2 13.6L159.5 11.8L160.4 9.9M161.4 9.5L160.4 9.9L160.0 8.8M153.5 13.4L156.4 13.0L159.2 13.6M11.6 61.5L10.0 62.0L8.6 62.9L6.6 65.8M160.3 35.4L159.2 33.2L156.8 31.0L155.5 27.9M1.9 77.8L-0.4 78.5L-2.1 78.6M-2.9 77.8L-2.1 78.6L-2.9 79.4M10.6 81.3L8.0 80.9L4.7 80.0L1.9 77.8M138.5 67.7L139.9 67.9L141.4 68.6M136.5 69.0L138.5 67.7L140.1 65.5L142.7 64.1M144.2 64.5L142.7 64.1L143.1 62.5M175.5 24.3L173.6 24.8L172.1 24.3M171.6 23.3L172.1 24.3L171.1 24.8M175.1 26.9L175.5 24.3L175.2 20.8M176.3 19.6L175.2 20.8L174.0 19.8M10.5 62.4L9.5 59.3L8.0 57.0L5.9 54.9M24.2 27.6L22.7 29.2L21.5 29.5M20.5 29.0L21.5 29.5L20.9 30.5M24.3 25.1L24.2 27.6L23.9 29.4L22.6 31.4M21.0 31.7L22.6 31.4L22.9 33.0M141.9 43.0L144.7 41.8L145.9 40.4M147.5 40.4L145.9 40.4L145.8 38.8M10.7 33.4L7.3 32.8L5.7 31.9L3.3 32.1M138.6 41.3L140.2 40.2L141.8 39.8M170.9 22.7L168.8 22.0L167.6 21.9M166.9 21.0L167.6 21.9L166.7 22.6M172.0 21.4L173.5 21.9L174.7 23.3M170.0 24.9L170.9 22.7L172.0 21.4L173.6 20.8M6.1 55.3L6.5 53.9L8.0 52.3M9.1 52.3L8.0 52.3L8.0 51.2M10.1 57.0L8.6 55.9L6.1 55.3M144.1 8.7L142.3 7.4L140.8 6.6M140.5 5.6L140.8 6.6L139.8 7.0M137.5 13.9L138.8 12.2L141.4 10.0L144.1 8.7M29.8 66.4L31.7 67.0L33.8 66.7M34.7 67.4L33.8 66.7L34.5 65.8M29.5 58.2L29.6 60.6L28.9 63.5L29.8 66.4M29.1 67.8L29.8 66.4L31.3 67.0M139.4 77.1L141.4 78.4L143.3 78.8M144.0 79.7L143.3 78.8L144.2 78.1M140.3 75.2L139.4 77.1L137.9 78.8M136.3 78.8L137.9 78.8L137.9 80.4M168.6 56.3L169.8 53.5L170.1 50.7L171.2 47.8M172.7 47.2L171.2 47.8L170.6 46.4M145.9 34.0L146.5 32.4L148.4 30.8L149.7 29.2M151.3 29.1L149.7 29.2L149.5 27.6M10.7 80.9L9.6 79.2L9.2 77.4L9.5 74.3M10.7 73.3L9.5 74.3L8.4 73.0M47.0 25.5L48.3 23.5L50.9 21.8M52.4 22.2L50.9 21.8L51.2 20.3" fill="none" stroke="currentColor" stroke-width="1.7" stroke-linecap="round" stroke-linejoin="round"/><path d="M88.2 64.0L90.8 64.0L89.8 111.0L88.8 111.0ZM106.6 64.0L109.2 64.0L108.4 96.0L107.5 96.0ZM112.2 68.0L114.8 68.0L114.0 90.0L113.0 90.0ZM118.7 72.0L121.3 72.0L120.5 97.0L119.5 97.0ZM125.1 74.0L127.7 74.0L126.9 90.0L126.0 90.0ZM132.7 76.0L135.3 76.0L134.9 91.0L134.1 91.0ZM143.7 80.0L146.3 80.0L145.4 94.0L144.6 94.0ZM158.7 80.0L161.3 80.0L160.4 88.0L159.6 88.0ZM36.9 76.0L39.5 76.0L38.7 92.0L37.8 92.0ZM42.6 74.0L45.2 74.0L44.4 90.0L43.4 90.0ZM46.6 72.0L49.2 72.0L48.4 86.0L47.4 86.0ZM48.2 80.0L50.8 80.0L50.0 97.8L49.0 97.8ZM57.9 68.0L60.5 68.0L59.7 88.0L58.8 88.0ZM61.9 70.0L64.5 70.0L63.7 95.4L62.8 95.4ZM66.7 72.0L69.3 72.0L68.5 90.0L67.5 90.0ZM75.7 70.0L78.3 70.0L77.5 96.2L76.5 96.2ZM82.1 70.0L84.7 70.0L84.7 102.6L83.8 102.6ZM88.6 70.0L91.2 70.0L90.4 111.5L89.5 111.5ZM96.7 68.0L99.3 68.0L98.5 100.0L97.5 100.0ZM100.7 70.0L103.3 70.0L102.5 92.0L101.5 92.0ZM55.7 64.0L58.3 64.0L57.5 80.0L56.5 80.0ZM70.7 68.0L73.3 68.0L72.5 84.0L71.5 84.0ZM78.7 66.0L81.3 66.0L80.5 86.0L79.5 86.0ZM51.4 4.9L54.0 4.9L54.9 17.8L53.9 17.8ZM61.1 5.7L63.7 5.7L63.7 21.9L62.8 21.9ZM82.1 0.0L84.7 0.0L84.7 11.4L83.8 11.4ZM72.4 5.7L75.0 5.7L74.2 21.9L73.2 21.9ZM82.3 2.0L84.9 2.0L84.0 19.4L83.1 19.4ZM88.0 4.1L90.6 4.1L89.8 21.9L88.8 21.9ZM94.4 11.4L97.0 11.4L96.2 21.9L95.2 21.9ZM112.2 6.5L114.8 6.5L114.0 16.2L113.0 16.2ZM107.4 13.0L110.0 13.0L109.2 29.1L108.2 29.1ZM128.4 19.4L131.0 19.4L130.1 33.2L129.2 33.2ZM65.7 10.0L68.3 10.0L67.5 24.0L66.5 24.0ZM76.7 8.0L79.3 8.0L78.5 22.0L77.5 22.0ZM98.7 8.0L101.3 8.0L100.5 24.0L99.5 24.0ZM22.4 59.8L25.0 59.8L24.1 63.9L23.2 63.9ZM29.6 59.0L32.2 59.0L31.3 64.7L30.4 64.7ZM16.7 60.0L19.3 60.0L18.4 66.0L17.6 66.0ZM12.7 81.0L15.3 81.0L14.4 86.0L13.6 86.0ZM26.7 81.0L29.3 81.0L28.4 88.0L27.6 88.0ZM158.7 36.0L161.3 36.0L160.4 42.0L159.6 42.0ZM172.7 28.0L175.3 28.0L174.4 34.0L173.6 34.0ZM174.7 62.0L177.3 62.0L176.4 68.0L175.6 68.0ZM163.7 82.0L166.3 82.0L165.4 90.0L164.6 90.0ZM138.7 70.0L141.3 70.0L140.4 80.0L139.6 80.0Z" fill="currentColor" opacity="0.88"/></symbol><symbol id="LC" viewBox="0 0 200 96" overflow="visible"><path d="M54.0 20.1L48.5 14.6L40.2 13.2L33.3 15.9L30.5 25.6L34.7 32.5L44.3 38.0L52.6 43.5L54.7 51.8L51.2 58.0L41.6 60.8L27.8 60.8L16.7 55.9L12.6 49.0L11.9 36.6L11.2 29.7M76.1 22.8L62.0 22.8L62.0 55.9L77.5 55.9M62.0 38.7L74.7 38.7M81.6 68.4L81.6 10.4M81.6 18.7L99.5 55.9M99.5 57.3L99.5 10.4M103.0 23.5L124.4 22.8M116.1 23.1L116.1 68.4M109.2 51.8L119.5 51.8M128.5 73.9L128.5 23.5L138.2 24.9L141.6 31.1L139.5 38.0L129.2 40.8M135.4 39.4L142.3 57.3M138.2 6.3L152.6 37.3M167.1 18.7L152.6 37.3L158.9 55.9L167.1 62.2L179.6 58.7L187.8 49.0L189.9 35.3" fill="none" stroke="currentColor" stroke-width="3.4" stroke-linecap="round" stroke-linejoin="round"/><path d="M11.2 29.7L10.5 19.4L18.1 7.0L27.8 13.9L34.0 13.2M10.5 19.4L1.6 11.8M18.1 7.0L18.8 4.2M11.9 40.8L20.9 38.7L22.3 43.5M12.6 49.0L5.0 57.3L4.3 65.6M14.0 55.9L10.5 58.7M13.3 70.4L27.8 67.0L38.8 68.4L38.8 79.4M26.4 67.0L29.2 73.9M167.1 18.7L169.9 9.0L165.8 2.1M169.9 9.0L179.6 2.8L186.5 14.6L198.9 8.3M187.8 14.6L188.5 22.8M158.9 66.3L176.8 67.0L196.1 68.4M172.7 66.7L171.3 73.9M189.9 35.3L189.2 43.5M192.0 44.9L193.3 60.1M49.2 3.5L51.2 11.8L55.4 20.1M145.1 4.9L146.4 10.4" fill="none" stroke="currentColor" stroke-width="2.0" stroke-linecap="round" stroke-linejoin="round"/><path d="M20.1 42.1L18.6 40.9L17.2 38.9M17.5 37.7L17.2 38.9L16.0 38.6M14.3 45.1L14.2 47.6L12.9 49.9M11.8 50.2L12.9 49.9L13.3 51.1M22.0 42.5L20.1 42.1L17.4 43.1L14.3 45.1M36.1 78.0L36.9 76.4L38.3 75.1M39.5 75.2L38.3 75.1L38.3 73.9M38.8 78.7L36.1 78.0L33.4 75.5L31.0 74.9M23.0 10.5L20.7 12.0L17.6 13.3L15.3 14.7M13.6 14.3L15.3 14.7L15.0 16.4M188.3 11.9L188.3 9.8L186.9 7.6M187.2 6.4L186.9 7.6L185.7 7.3M184.6 11.4L188.3 11.9L190.0 12.5L191.6 13.8M191.8 15.5L191.6 13.8L193.4 13.6M195.2 45.4L195.0 46.6L193.9 47.9M192.7 48.0L193.9 47.9L194.0 49.1M192.0 44.9L195.2 45.4L198.3 45.3M23.7 71.7L22.2 72.6L20.0 73.3M26.2 76.6L27.8 75.1L28.8 73.7M30.0 73.5L28.8 73.7L28.6 72.5M22.1 68.3L23.7 71.7L24.1 74.3L26.2 76.6M32.5 75.6L30.3 76.7L29.3 78.1M28.1 78.4L29.3 78.1L29.6 79.3M38.8 76.9L35.7 76.7L32.5 75.6M31.7 74.0L32.5 75.6L30.9 76.4M188.8 70.8L186.3 70.5L184.0 69.2M189.2 67.9L188.8 70.8L190.1 74.1L189.9 77.7M54.1 17.4L52.2 20.4L52.2 24.0M50.9 25.2L52.2 24.0L53.5 25.2M179.6 71.8L181.1 71.1L181.8 70.1M174.8 66.9L176.7 69.0L178.7 70.2L179.6 71.8M8.9 14.4L9.2 12.8L10.1 11.2M11.3 10.9L10.1 11.2L9.8 10.0M6.5 13.9L6.4 15.2L5.3 17.3M4.1 17.6L5.3 17.3L5.7 18.4M12.9 15.6L10.7 14.4L8.9 14.4L6.5 13.9M187.8 20.5L190.0 20.8L192.0 22.0M188.0 13.8L188.1 16.2L187.4 18.3L187.8 20.5M186.8 22.0L187.8 20.5L189.3 21.5M182.1 5.2L180.4 5.5L179.1 6.0M183.6 2.1L181.7 0.6L180.1 0.3M179.4 -0.6L180.1 0.3L179.1 1.1M182.0 7.0L182.1 5.2L183.6 2.1M185.3 1.6L183.6 2.1L183.0 0.5M190.9 15.8L189.1 17.3L187.4 18.0M186.3 14.3L188.9 14.4L190.9 15.8L193.9 17.2" fill="none" stroke="currentColor" stroke-width="1.6" stroke-linecap="round" stroke-linejoin="round"/><path d="M83.0 57.3L84.6 83.5M99.5 57.3L100.4 96.0M116.1 60.1L116.1 88.4M128.5 68.4L128.5 77.3M56.1 62.8L57.5 78.0M77.5 55.9L78.1 72.5M69.2 55.9L69.2 68.4M91.3 49.0L91.9 68.4M107.8 51.8L107.8 69.7M124.4 49.0L124.4 73.9M143.7 54.6L144.4 71.1M160.2 68.4L160.9 82.2M169.9 68.4L170.6 80.8M33.3 68.4L34.0 76.6M19.5 69.7L20.2 75.3M182.3 68.4L182.3 75.3M73.3 2.1L74.7 18.7M96.8 10.4L98.2 22.8M123.0 11.8L123.7 22.8M146.4 7.7L146.4 18.7" fill="none" stroke="currentColor" stroke-width="2.2" stroke-linecap="round" opacity="0.9"/></symbol><symbol id="LCA" viewBox="0 0 200 143" overflow="visible"><g transform="translate(0,47.2)"><path d="M54.0 20.1L48.5 14.6L40.2 13.2L33.3 15.9L30.5 25.6L34.7 32.5L44.3 38.0L52.6 43.5L54.7 51.8L51.2 58.0L41.6 60.8L27.8 60.8L16.7 55.9L12.6 49.0L11.9 36.6L11.2 29.7M76.1 22.8L62.0 22.8L62.0 55.9L77.5 55.9M62.0 38.7L74.7 38.7M81.6 68.4L81.6 10.4M81.6 18.7L99.5 55.9M99.5 57.3L99.5 10.4M103.0 23.5L124.4 22.8M116.1 23.1L116.1 68.4M109.2 51.8L119.5 51.8M128.5 73.9L128.5 23.5L138.2 24.9L141.6 31.1L139.5 38.0L129.2 40.8M135.4 39.4L142.3 57.3M138.2 6.3L152.6 37.3M167.1 18.7L152.6 37.3L158.9 55.9L167.1 62.2L179.6 58.7L187.8 49.0L189.9 35.3" fill="none" stroke="currentColor" stroke-width="3.4" stroke-linecap="round" stroke-linejoin="round"/><path d="M11.2 29.7L10.5 19.4L18.1 7.0L27.8 13.9L34.0 13.2M10.5 19.4L1.6 11.8M18.1 7.0L18.8 4.2M11.9 40.8L20.9 38.7L22.3 43.5M12.6 49.0L5.0 57.3L4.3 65.6M14.0 55.9L10.5 58.7M13.3 70.4L27.8 67.0L38.8 68.4L38.8 79.4M26.4 67.0L29.2 73.9M167.1 18.7L169.9 9.0L165.8 2.1M169.9 9.0L179.6 2.8L186.5 14.6L198.9 8.3M187.8 14.6L188.5 22.8M158.9 66.3L176.8 67.0L196.1 68.4M172.7 66.7L171.3 73.9M189.9 35.3L189.2 43.5M192.0 44.9L193.3 60.1M49.2 3.5L51.2 11.8L55.4 20.1M145.1 4.9L146.4 10.4" fill="none" stroke="currentColor" stroke-width="2.0" stroke-linecap="round" stroke-linejoin="round"/><path d="M28.2 71.4L27.3 73.0L26.5 76.6M3.5 15.8L4.8 16.6L6.6 16.8M7.4 17.7L6.6 16.8L7.5 16.0M4.9 14.7L3.5 15.8L0.9 16.0L-2.5 17.2M-4.1 16.4L-2.5 17.2L-3.3 18.7M30.5 70.8L33.0 71.0L34.2 70.6M35.3 71.1L34.2 70.6L34.8 69.5M30.1 72.9L32.2 73.4L34.3 73.5M29.7 67.2L30.5 70.8L30.1 72.9M28.7 73.9L30.1 72.9L31.2 74.3M7.3 54.9L5.3 53.2L3.5 52.7M182.4 7.7L186.0 7.5L189.5 6.0M191.1 6.7L189.5 6.0L190.2 4.4M190.8 68.0L191.7 70.5L193.1 72.4L195.5 74.8M161.6 70.4L158.9 70.2L157.5 70.5M156.5 69.8L157.5 70.5L156.8 71.6M164.1 66.5L163.7 68.4L161.6 70.4M159.8 70.4L161.6 70.4L161.5 72.2M12.7 15.8L10.4 12.8L8.4 11.6L7.5 10.0M179.1 72.8L180.9 73.2L182.8 74.0M180.4 67.2L178.8 70.5L179.1 72.8M178.0 74.1L179.1 72.8L180.4 73.9M8.3 7.1L7.4 6.2L5.9 5.8M15.5 11.3L14.1 8.8L11.6 7.3L8.3 7.1M188.5 13.5L190.1 16.3L191.3 17.7M191.1 19.4L191.3 17.7L193.0 17.8M8.9 21.6L6.2 21.9L4.6 22.4M3.5 21.8L4.6 22.4L4.0 23.5M7.1 23.0L6.9 24.2L7.2 26.3M6.4 27.3L7.2 26.3L8.2 27.1M4.0 23.4L2.9 22.0L2.4 20.3M10.6 20.9L8.9 21.6L7.1 23.0L4.0 23.4M188.3 19.7L190.0 16.8L189.9 13.1M191.2 11.9L189.9 13.1L188.7 11.9M11.6 57.9L9.8 54.7L9.2 52.5L9.3 50.4M10.6 49.2L9.3 50.4L8.1 49.1M3.8 17.4L4.9 19.1L5.8 21.2M4.7 14.4L3.8 17.4L4.5 19.8M21.8 9.6L20.7 11.0L19.7 13.2L17.6 14.8M31.1 13.5L32.2 10.0L32.1 8.3L31.1 5.6M55.4 28.7L57.0 29.0L58.4 28.4M59.5 28.9L58.4 28.4L58.9 27.3M55.0 19.3L54.2 22.0L54.1 25.3L55.4 28.7M38.8 72.3L37.4 71.1L36.6 68.5M37.5 67.0L36.6 68.5L35.1 67.7M21.7 9.5L20.5 11.5L20.4 13.2M19.1 14.4L20.4 13.2L21.6 14.5M19.9 33.9L18.8 31.9L18.4 30.5M20.4 38.8L19.8 35.9L19.9 33.9M21.3 32.8L19.9 33.9L18.8 32.6M191.2 12.5L190.7 10.4L191.2 7.7M194.2 10.6L194.6 9.1L194.3 7.3M195.0 6.3L194.3 7.3L193.3 6.6M187.9 15.6L189.4 14.6L191.2 12.5L194.2 10.6M22.2 72.2L24.2 73.5L25.9 74.2M20.8 68.6L22.2 72.2L23.8 74.7M25.4 67.6L25.0 71.3L24.1 73.8L22.6 75.1M193.2 20.6L194.5 19.6L196.0 17.5M194.7 21.6L195.5 20.5L197.7 19.3M188.2 19.4L190.1 19.4L193.2 20.6L194.7 21.6M195.0 23.4L194.7 21.6L196.4 21.3M167.0 4.3L168.6 2.0L171.1 0.7L173.8 -0.0M10.3 7.0L10.8 5.6L10.5 3.9M17.8 7.5L15.8 6.9L13.1 7.8L10.3 7.0M43.1 10.8L42.1 12.0L40.3 12.7M39.2 12.2L40.3 12.7L39.8 13.9M51.7 12.7L47.9 13.4L46.0 13.2L43.1 10.8M42.9 9.1L43.1 10.8L41.3 11.1M177.1 72.1L178.4 71.5L179.8 70.4M181.0 70.5L179.8 70.4L179.9 69.2M171.9 70.9L174.8 72.0L177.1 72.1M51.6 19.8L51.4 21.3L52.1 23.3M51.6 24.4L52.1 23.3L53.3 23.8M54.4 18.1L51.6 19.8L48.7 20.4L45.1 19.8M44.1 18.4L45.1 19.8L43.7 20.9" fill="none" stroke="currentColor" stroke-width="1.6" stroke-linecap="round" stroke-linejoin="round"/><path d="M83.0 57.3L84.6 83.5M99.5 57.3L100.4 96.0M116.1 60.1L116.1 88.4M128.5 68.4L128.5 77.3M56.1 62.8L57.5 78.0M77.5 55.9L78.1 72.5M69.2 55.9L69.2 68.4M91.3 49.0L91.9 68.4M107.8 51.8L107.8 69.7M124.4 49.0L124.4 73.9M143.7 54.6L144.4 71.1M160.2 68.4L160.9 82.2M169.9 68.4L170.6 80.8M33.3 68.4L34.0 76.6M19.5 69.7L20.2 75.3M182.3 68.4L182.3 75.3M73.3 2.1L74.7 18.7M96.8 10.4L98.2 22.8M123.0 11.8L123.7 22.8M146.4 7.7L146.4 18.7" fill="none" stroke="currentColor" stroke-width="2.2" stroke-linecap="round" opacity="0.9"/></g><path d="M94.0 19.0L73.0 48.0M94.0 19.0L119.0 48.0M67.0 49.0L125.0 49.0M94.0 19.0L94.0 1.0M97.5 4.0L97.5 17.0M88.8 26.2L99.6 37.1L107.5 48.0M83.5 33.5L91.2 40.8L96.0 48.0M78.2 40.8L82.9 44.4L84.5 48.0" fill="none" stroke="currentColor" stroke-width="3.0" stroke-linecap="round" stroke-linejoin="round"/><path d="M80.0 34.0L72.0 28.0L70.0 20.0M108.0 34.0L116.0 28.0L118.0 20.0M70.0 50.0L60.0 54.0L50.0 52.0L40.0 58.0M120.0 50.0L130.0 54.0L140.0 52.0L150.0 58.0M76.0 52.0L74.0 62.0M112.0 52.0L114.0 62.0M60.0 54.0L58.0 62.0M130.0 54.0L134.0 62.0" fill="none" stroke="currentColor" stroke-width="2.0" stroke-linecap="round" stroke-linejoin="round"/><path d="M44.0 55.6L42.3 55.0L38.7 54.8M113.0 32.4L114.1 31.4L114.6 29.7M115.7 29.2L114.6 29.7L114.1 28.6M112.3 30.8L113.0 32.4L112.7 34.9L113.0 38.4M112.0 39.7L113.0 38.4L114.4 39.5M55.1 56.4L57.6 56.8L58.7 56.5M59.8 57.1L58.7 56.5L59.3 55.5M54.6 58.5L56.6 59.1L58.6 59.3M54.6 52.9L55.1 56.4L54.6 58.5M53.2 59.3L54.6 58.5L55.5 59.9M69.2 50.3L70.2 52.6L71.6 53.8M132.3 53.5L131.4 56.9L131.6 60.6M130.4 61.9L131.6 60.6L132.8 61.7M74.1 61.4L71.6 62.0L69.6 63.1L67.0 65.2M151.5 54.4L153.7 55.8L155.1 56.2M155.6 57.2L155.1 56.2L156.1 55.6M147.5 56.5L148.8 55.1L151.5 54.4M153.0 55.2L151.5 54.4L152.4 52.9M74.6 29.9L71.4 31.8L70.1 33.6L68.4 34.4M69.9 54.7L69.2 56.5L68.2 58.2M75.1 56.6L72.1 54.7L69.9 54.7M68.7 53.5L69.9 54.7L68.7 55.9M67.8 34.9L66.8 35.7L66.3 37.2M72.6 28.4L70.0 29.5L68.3 31.8L67.8 34.9M137.1 52.6L137.8 55.6L138.6 57.2M137.9 58.8L138.6 57.2L140.2 57.7M76.1 33.3L74.6 35.4L73.9 36.9M72.8 37.3L73.9 36.9L74.4 38.0M76.0 35.4L76.8 36.4L78.5 37.5M78.8 38.7L78.5 37.5L79.7 37.2M74.3 38.0L72.6 37.9L71.1 37.2M76.7 31.5L76.1 33.3L76.0 35.4L74.3 38.0M144.1 54.5L142.8 51.5L139.9 49.4M139.6 47.7L139.9 49.4L138.2 49.7M62.8 52.9L63.6 56.3L63.5 58.6L62.8 60.5M61.3 61.2L62.8 60.5L63.5 62.0M115.1 32.1L116.9 31.5L119.0 31.1M112.4 30.7L115.1 32.1L117.4 32.1M71.1 24.3L69.4 24.7L67.2 25.6L64.7 25.5" fill="none" stroke="currentColor" stroke-width="1.7" stroke-linecap="round" stroke-linejoin="round"/><path d="M80.3 49L82.5 49L81.8 54.1L81.0 55.0ZM102.5 49L104.7 49L104.0 59.5L103.2 55.0ZM89.3 49L91.5 49L90.8 54.2L90.0 55.0ZM85.7 49L87.9 49L87.2 57.8L86.4 55.0ZM87.7 49L89.9 49L89.2 60.9L88.4 55.0ZM90.3 49L92.5 49L91.8 59.4L91.0 55.0ZM82.2 49L84.4 49L83.7 61.3L82.9 55.0ZM99.4 49L101.6 49L100.9 60.0L100.1 55.0ZM109.6 49L111.8 49L111.1 56.2L110.3 55.0ZM97.7 49L99.9 49L99.2 55.1L98.4 55.0Z" fill="currentColor" opacity="0.85"/></symbol><symbol id="LCA2" viewBox="0 0 200 187" overflow="visible"><g transform="translate(0,88.2)"><path d="M54.0 20.1L48.5 14.6L40.2 13.2L33.3 15.9L30.5 25.6L34.7 32.5L44.3 38.0L52.6 43.5L54.7 51.8L51.2 58.0L41.6 60.8L27.8 60.8L16.7 55.9L12.6 49.0L11.9 36.6L11.2 29.7M76.1 22.8L62.0 22.8L62.0 55.9L77.5 55.9M62.0 38.7L74.7 38.7M81.6 68.4L81.6 10.4M81.6 18.7L99.5 55.9M99.5 57.3L99.5 10.4M103.0 23.5L124.4 22.8M116.1 23.1L116.1 68.4M109.2 51.8L119.5 51.8M128.5 73.9L128.5 23.5L138.2 24.9L141.6 31.1L139.5 38.0L129.2 40.8M135.4 39.4L142.3 57.3M138.2 6.3L152.6 37.3M167.1 18.7L152.6 37.3L158.9 55.9L167.1 62.2L179.6 58.7L187.8 49.0L189.9 35.3" fill="none" stroke="currentColor" stroke-width="3.4" stroke-linecap="round" stroke-linejoin="round"/><path d="M11.2 29.7L10.5 19.4L18.1 7.0L27.8 13.9L34.0 13.2M10.5 19.4L1.6 11.8M18.1 7.0L18.8 4.2M11.9 40.8L20.9 38.7L22.3 43.5M12.6 49.0L5.0 57.3L4.3 65.6M14.0 55.9L10.5 58.7M13.3 70.4L27.8 67.0L38.8 68.4L38.8 79.4M26.4 67.0L29.2 73.9M167.1 18.7L169.9 9.0L165.8 2.1M169.9 9.0L179.6 2.8L186.5 14.6L198.9 8.3M187.8 14.6L188.5 22.8M158.9 66.3L176.8 67.0L196.1 68.4M172.7 66.7L171.3 73.9M189.9 35.3L189.2 43.5M192.0 44.9L193.3 60.1M49.2 3.5L51.2 11.8L55.4 20.1M145.1 4.9L146.4 10.4" fill="none" stroke="currentColor" stroke-width="2.0" stroke-linecap="round" stroke-linejoin="round"/><path d="M3.2 50.4L1.2 49.1L-1.3 49.0M9.1 52.8L6.0 51.2L3.2 50.4M174.6 66.9L172.2 68.4L168.6 68.7L165.9 69.9M164.3 69.2L165.9 69.9L165.3 71.5M23.9 66.9L22.5 67.7L21.1 67.9M26.6 67.4L23.9 66.9L20.4 67.7M18.9 66.7L20.4 67.7L19.5 69.2M38.8 74.5L36.3 73.8L32.9 73.5L30.3 72.8M194.2 70.4L194.4 72.6L194.1 74.1M191.9 68.1L194.2 70.4L196.2 70.8L199.5 69.6M31.5 8.1L32.9 8.7L35.1 9.0M35.9 9.9L35.1 9.0L36.1 8.2M28.6 13.8L29.3 10.9L31.5 8.1L32.6 5.1M34.3 4.5L32.6 5.1L31.9 3.5M182.1 7.1L185.0 6.1L186.9 6.1M6.6 23.9L4.5 24.5L3.1 24.7M2.2 23.9L3.1 24.7L2.4 25.6M11.1 28.5L8.7 26.9L6.6 23.9M192.1 46.9L193.6 48.3L195.5 51.4M192.6 52.2L195.2 52.1L197.4 51.6M198.8 52.6L197.4 51.6L198.3 50.2M186.9 67.7L184.5 70.2L183.2 73.8M181.6 74.5L183.2 73.8L184.0 75.3M35.0 69.7L37.4 69.7L40.0 70.2M34.1 71.3L32.3 69.7L31.2 68.1M31.3 73.8L29.9 72.7L28.8 71.3M34.9 67.9L35.0 69.7L34.1 71.3L31.3 73.8M29.6 73.7L31.3 73.8L31.3 75.6M183.2 -1.9L185.3 -2.2M179.8 3.2L180.9 0.5L183.2 -1.9M185.0 -1.8L183.2 -1.9L183.2 -3.6M8.7 32.1L10.5 30.7L12.1 30.3M13.1 31.0L12.1 30.3L12.7 29.3M10.8 23.4L8.5 26.1L7.7 28.9L8.7 32.1M185.3 3.4L186.5 4.2L188.3 4.4M189.0 5.3L188.3 4.4L189.2 3.6M183.3 9.3L183.7 5.7L185.3 3.4M34.6 67.1L36.0 66.1L37.2 63.9M38.8 69.7L36.6 68.1L34.6 67.1M52.1 13.4L50.3 13.8L47.8 14.7M46.2 14.0L47.8 14.7L47.1 16.3M181.0 69.2L182.7 69.9L184.0 70.9M182.0 67.4L181.0 69.2L179.0 70.3M177.3 69.8L179.0 70.3L178.5 72.0M199.7 15.0L200.1 17.4L200.9 19.9M200.4 20.9L200.9 19.9L202.0 20.4M195.7 9.9L197.9 13.1L199.7 15.0M199.7 16.8L199.7 15.0L201.5 15.0M190.3 70.0L190.8 71.1L191.0 72.8M190.3 73.8L191.0 72.8L192.0 73.6M190.4 68.0L190.3 70.0L191.5 72.7L193.9 74.4M174.6 6.0L176.0 8.1L176.9 10.9L178.8 12.8M167.5 70.4L165.0 69.8L164.0 68.8M168.0 66.6L167.5 70.4L166.1 72.5M164.3 72.8L166.1 72.5L166.4 74.2M198.5 8.5L201.1 10.4M200.7 12.2L201.1 10.4L202.8 10.7M52.5 14.3L50.3 16.1L48.1 18.7L47.6 20.5M9.5 33.5L9.6 31.9L10.4 30.8M14.7 40.1L13.2 37.2L11.0 34.6L9.5 33.5M9.2 31.8L9.5 33.5L7.7 33.8M162.2 72.0L164.0 71.3L165.4 70.1M160.5 66.4L161.7 68.2L162.2 72.0M161.1 73.4L162.2 72.0L163.6 73.0M182.5 67.4L183.1 70.5L183.1 73.9L181.6 77.2M197.5 12.3L196.2 13.6L195.8 14.9M198.4 8.6L197.5 12.3L198.0 15.4M197.0 16.8L198.0 15.4L199.5 16.3M181.4 9.6L180.5 10.8L179.6 12.7M179.1 3.1L180.8 5.9L181.4 9.6L180.3 12.6M21.6 12.8L23.2 13.4L25.4 13.2M26.3 14.1L25.4 13.2L26.2 12.3M20.1 13.7L18.5 12.7L17.4 11.7M22.9 10.4L21.6 12.8L20.1 13.7L16.6 14.6M15.1 13.7L16.6 14.6L15.8 16.1" fill="none" stroke="currentColor" stroke-width="1.6" stroke-linecap="round" stroke-linejoin="round"/><path d="M83.0 57.3L84.6 83.5M99.5 57.3L100.4 96.0M116.1 60.1L116.1 88.4M128.5 68.4L128.5 77.3M56.1 62.8L57.5 78.0M77.5 55.9L78.1 72.5M69.2 55.9L69.2 68.4M91.3 49.0L91.9 68.4M107.8 51.8L107.8 69.7M124.4 49.0L124.4 73.9M143.7 54.6L144.4 71.1M160.2 68.4L160.9 82.2M169.9 68.4L170.6 80.8M33.3 68.4L34.0 76.6M19.5 69.7L20.2 75.3M182.3 68.4L182.3 75.3M73.3 2.1L74.7 18.7M96.8 10.4L98.2 22.8M123.0 11.8L123.7 22.8M146.4 7.7L146.4 18.7" fill="none" stroke="currentColor" stroke-width="2.2" stroke-linecap="round" opacity="0.9"/></g><path d="M94.0 43.6L66.8 89.0M94.0 43.6L125.2 89.0M60.8 90.0L131.2 90.0M94.0 43.6L94.0 1.0M97.5 4.0L97.5 33.4M89.5 51.2L104.0 70.1L115.4 89.0M85.0 58.7L96.8 73.9L105.7 89.0M80.4 66.3L89.7 77.7L96.0 89.0M75.9 73.9L82.6 81.4L86.3 89.0M71.4 81.4L75.5 85.2L76.6 89.0" fill="none" stroke="currentColor" stroke-width="3.0" stroke-linecap="round" stroke-linejoin="round"/><path d="M80.0 58.6L72.0 52.6L70.0 44.6M108.0 58.6L116.0 52.6L118.0 44.6M63.8 91.0L53.8 95.0L43.8 93.0L33.8 99.0M126.2 91.0L136.2 95.0L146.2 93.0L156.2 99.0M76.0 93.0L74.0 103.0M112.0 93.0L114.0 103.0M60.0 95.0L58.0 103.0M130.0 95.0L134.0 103.0M84.0 50.0L70.0 44.0L62.0 50.0L54.0 44.0M104.0 50.0L118.0 44.0L126.0 50.0L134.0 44.0M80.0 70.0L64.0 66.0L54.0 72.0L46.0 68.0M108.0 70.0L124.0 66.0L134.0 72.0L142.0 68.0M88.0 30.0L80.0 18.0L84.0 10.0M100.0 30.0L108.0 18.0L104.0 10.0" fill="none" stroke="currentColor" stroke-width="2.0" stroke-linecap="round" stroke-linejoin="round"/><path d="M145.1 99.2L145.9 101.4L147.7 102.9M141.8 93.9L143.4 97.0L145.1 99.2M46.5 68.3L43.9 68.6L40.5 67.5L37.6 67.4M36.5 66.2L37.6 67.4L36.4 68.6M77.9 45.0L78.4 43.5L79.1 42.4M75.8 46.5L77.9 45.0L79.8 42.0M81.5 41.7L79.8 42.0L79.4 40.4M81.2 48.8L82.9 46.8L84.4 43.9L86.0 41.9M125.0 64.2L125.8 62.1L126.7 60.9M125.9 67.2L125.0 64.2L123.4 62.8L120.0 62.5M60.1 86.9L61.6 87.2L63.8 86.8M64.7 87.5L63.8 86.8L64.4 85.8M58.9 93.0L58.9 90.1L60.1 86.9L60.4 83.9M61.8 82.8L60.4 83.9L59.4 82.5M121.7 46.8L124.0 44.8L125.7 44.1M85.3 57.4L86.1 55.5L86.8 54.3M88.0 54.1L86.8 54.3L86.6 53.2M78.9 57.8L81.6 57.0L85.3 57.4M84.7 25.1L86.6 25.7L89.7 27.4M81.4 20.1L83.5 18.9L85.2 17.4M86.9 17.6L85.2 17.4L85.3 15.7M120.7 66.8L122.2 63.7L122.3 60.1M123.5 59.0L122.3 60.1L121.1 58.9M131.8 94.6L130.4 92.7L129.4 90.3M133.6 94.5L133.3 96.8L132.5 98.6M137.1 95.4L136.9 97.2L136.4 98.8M130.3 95.7L131.8 94.6L133.6 94.5L137.1 95.4M138.0 96.8L137.1 95.4L138.5 94.4M113.2 40.2L113.2 38.1L112.3 36.6M117.7 44.1L115.2 42.7L113.2 40.2M113.5 38.5L113.2 40.2L111.5 40.0M69.2 47.3L69.1 49.5L68.3 50.9M67.2 51.2L68.3 50.9L68.7 52.0M74.3 54.3L73.7 50.9L72.2 48.6L69.2 47.3M123.5 42.5L124.9 42.7L126.6 42.2M127.6 42.8L126.6 42.2L127.1 41.2M124.0 48.5L123.0 45.2L123.5 42.5M137.7 101.4L137.0 102.8L136.9 105.2M133.0 100.9L135.6 101.4L137.7 101.4M104.9 22.7L103.7 21.4L101.7 19.7M101.6 18.0L101.7 19.7L100.1 19.9M115.9 66.2L114.1 66.0L112.6 65.4M115.5 68.1L115.9 66.2L117.4 64.5M119.1 64.5L117.4 64.5L117.4 62.8M74.6 62.3L75.8 60.2L76.8 58.0M77.9 57.5L76.8 58.0L76.3 56.9M74.3 68.6L74.8 64.9L74.6 62.3M75.7 61.0L74.6 62.3L73.3 61.2M125.4 64.5L125.4 63.3L126.0 61.7M127.1 61.2L126.0 61.7L125.4 60.7M124.4 66.2L125.4 64.5L125.5 61.7L124.2 59.1M111.2 46.9L110.2 44.6L109.8 41.8L108.3 39.7M51.2 74.7L49.2 73.2L48.7 71.9M53.1 71.6L51.2 74.7L49.0 76.0M47.4 75.5L49.0 76.0L48.6 77.6M70.7 61.2L72.5 60.6L74.5 59.5M71.0 67.8L70.3 64.7L70.7 61.2L70.0 59.6M28.5 93.5L28.2 92.0L28.6 90.8M35.4 98.1L33.1 95.8L30.3 94.1L28.5 93.5M27.8 92.0L28.5 93.5L27.0 94.3M55.9 64.6L54.9 66.0L54.4 67.7M60.3 68.2L58.4 67.4L55.9 64.6M56.1 62.9L55.9 64.6L54.2 64.5M116.0 68.0L114.6 65.3L113.5 62.2L113.9 58.6M74.1 65.7L75.9 65.5L77.0 64.7M71.1 67.8L74.1 65.7L75.7 63.0M77.3 62.6L75.7 63.0L75.2 61.4M115.5 38.0L116.5 37.0L117.7 35.3M116.6 44.6L115.5 41.7L115.5 38.0L117.0 35.3M120.1 47.1L120.0 45.4L119.1 43.5M119.6 42.4L119.1 43.5L118.0 43.1M121.4 48.2L121.1 49.9L120.6 51.2M117.4 46.8L120.1 47.1L121.4 48.2L123.5 50.9M123.2 52.6L123.5 50.9L125.2 51.2M120.6 52.7L122.3 51.2L123.7 49.3M116.9 49.1L119.0 50.2L120.6 52.7M120.2 54.4L120.6 52.7L122.3 53.1M112.5 42.6L111.1 42.7L109.7 43.8M108.6 43.6L109.7 43.8L109.6 45.0M112.5 37.2L114.1 37.8L116.6 37.9M117.4 38.7L116.6 37.9L117.5 37.0M113.8 45.8L112.5 42.6L111.9 39.6L112.5 37.2M52.9 66.6L55.0 65.4L57.1 65.1M55.4 71.2L53.1 68.5L52.9 66.6L53.9 63.3M113.8 102.1L117.5 102.2L120.5 103.8L124.0 105.0M110.7 69.3L112.2 67.4L112.8 64.8L114.4 61.5M122.9 66.3L122.7 64.1L124.1 60.7M125.7 60.1L124.1 60.7L123.4 59.2M108.2 48.2L106.1 46.2L103.9 45.3M140.6 94.1L141.1 97.5L140.9 100.2L142.1 103.5M73.0 94.5L70.8 95.8L68.3 96.1M75.4 96.0L73.0 94.5L70.8 91.7M72.6 100.6L72.6 101.8L72.0 103.2M70.9 103.7L72.0 103.2L72.5 104.3M70.1 101.7L68.7 100.6L66.9 100.3M68.1 101.8L67.2 100.7L66.8 98.6M67.4 97.6L66.8 98.6L65.8 98.0M74.4 100.9L72.6 100.6L70.1 101.7L68.1 101.8M66.9 100.6L68.1 101.8L67.0 103.1M114.4 45.6L113.7 43.9L111.3 42.1M65.2 64.0L65.3 62.1L65.1 60.6M67.4 66.8L65.2 64.0L64.4 62.4M65.0 60.8L64.4 62.4L62.8 61.8M56.7 46.1L57.8 42.5L57.1 39.0M112.0 93.0L114.7 92.3L116.9 92.3M121.0 46.2L122.2 44.7L124.9 43.4L127.7 42.7M129.2 43.6L127.7 42.7L128.6 41.2M46.2 68.1L45.8 71.2L46.6 73.3M45.8 74.8L46.6 73.3L48.1 74.0" fill="none" stroke="currentColor" stroke-width="1.7" stroke-linecap="round" stroke-linejoin="round"/><path d="M94.4 90L96.6 90L95.9 101.7L95.1 96.0ZM111.5 90L113.7 90L113.0 97.6L112.2 96.0ZM119.4 90L121.6 90L120.9 100.6L120.1 96.0ZM106.2 90L108.4 90L107.7 96.8L106.9 96.0ZM83.0 90L85.2 90L84.5 97.1L83.7 96.0ZM74.7 90L76.9 90L76.2 96.6L75.4 96.0ZM87.4 90L89.6 90L88.9 98.1L88.1 96.0ZM85.6 90L87.8 90L87.1 97.7L86.3 96.0ZM92.3 90L94.5 90L93.8 97.7L93.0 96.0ZM81.1 90L83.3 90L82.6 102.0L81.8 96.0Z" fill="currentColor" opacity="0.85"/></symbol><symbol id="LB2" viewBox="0 0 180 112" overflow="visible"><path d="M51.9 32.4L46.3 28.3L36.6 27.5L30.9 29.9L29.3 37.2L32.6 42.0L44.7 45.3L50.3 50.1L51.1 58.2L47.9 64.7L41.4 69.5L30.1 71.1M54.4 69.5L54.4 37.2L68.1 34.8M54.4 47.7L66.5 46.9M54.4 62.2L68.9 61.4M72.5 67.9L72.5 26.0M72.5 30.0L84.8 64.0M84.8 66.0L84.8 24.0M86.0 30.0L101.4 30.0M94.5 30.0L94.5 68.0M105.4 66.0L105.4 29.1L116.7 29.1L120.8 37.2L119.2 43.7L106.2 46.9M115.1 46.9L124.8 63.1M118.0 29.0L130.0 47.0M142.6 25.9L126.4 64.0" fill="none" stroke="currentColor" stroke-width="3.3" stroke-linecap="round" stroke-linejoin="round"/><path d="M30.1 71.1L20.4 69.5L14.0 66.3L10.7 59.8L9.1 51.7L9.1 40.4L11.5 30.0L17.2 25.1L22.9 24.3L28.5 27.5L30.9 29.9M22.9 24.3L26.9 18.6L28.5 13.8L22.0 11.4L21.2 8.1M28.5 13.8L36.6 12.2L43.0 7.3L45.5 3.3M11.5 30.0L6.7 25.9L1.0 26.7M9.1 35.6L1.0 34.8L1.0 37.2M10.7 62.2L1.9 70.3L1.9 77.6M24.5 72.7L23.7 79.2L10.7 80.8L9.9 84.1M23.7 79.2L32.6 83.2L31.7 92.1M20.0 60.0L27.0 58.0L34.0 58.5L41.0 59.5M36.6 16.2L43.0 23.5L47.9 25.9M51.9 32.4L55.9 27.5L57.6 19.4L54.4 11.4M57.6 19.4L60.0 14.0M16.0 34.0L20.0 38.0L26.0 36.0M38.0 52.0L40.0 56.0L44.0 55.0M142.6 25.9L143.4 16.2L151.5 11.4L158.7 18.6L164.4 22.7L168.4 16.2L173.3 17.8M151.5 11.4L152.3 5.7M143.4 16.2L132.9 12.2L131.3 8.9L124.0 4.9M164.4 22.7L176.5 27.5L176.5 31.5M141.0 29.1L145.8 34.0L162.8 35.6L162.8 40.4M136.0 40.0L146.0 45.0L150.0 42.0M126.4 64.0L133.7 67.9L141.0 59.0L152.3 56.6L155.5 62.2L149.9 67.9L137.7 69.5L133.7 67.9M166.0 55.0L152.3 77.6M166.0 55.0L178.9 61.4L179.7 66.3M163.6 43.7L163.6 55.0M152.3 77.6L169.2 81.6L169.2 84.9M126.0 66.0L134.0 74.0L152.3 77.6" fill="none" stroke="currentColor" stroke-width="2.1" stroke-linecap="round" stroke-linejoin="round"/><path d="M24.0 71.3L24.6 70.3L25.2 68.6M25.2 73.8L23.6 74.9L22.6 75.9M22.8 69.9L24.0 71.3L25.2 73.8L27.9 75.5M28.2 77.1L27.9 75.5L29.4 75.1M161.1 63.0L163.9 64.8L166.2 65.5M166.9 66.9L166.2 65.5L167.6 64.7M134.8 68.3L136.4 66.2L139.7 65.0L142.3 65.6M14.3 85.1L13.1 84.8L10.8 84.9M15.8 80.2L15.8 82.0L14.3 85.1M45.4 3.4L42.9 2.3L41.5 0.2M148.8 27.0L149.1 24.7L148.6 22.9M142.7 25.0L145.7 25.4L147.4 26.0L148.8 27.0M145.1 15.2L143.5 12.4L142.6 9.5M135.2 35.0L137.5 34.7L139.4 33.7M140.5 34.1L139.4 33.7L139.8 32.6M136.1 40.0L136.1 38.2L135.2 35.0M55.5 14.2L53.1 14.2L50.9 14.8M49.5 14.0L50.9 14.8L50.1 16.2M156.4 55.5L157.6 57.3L157.7 58.7M156.9 59.5L157.7 58.7L158.5 59.5M152.9 57.6L155.2 56.7L156.4 55.5M134.2 74.0L132.9 76.6L132.6 79.2M153.0 12.9L155.0 12.7L157.7 12.9L161.1 12.6M162.3 13.6L161.1 12.6L162.1 11.3M142.4 75.7L140.7 77.5L140.1 79.6M9.7 30.3L10.5 31.2L10.9 32.7M10.2 33.6L10.9 32.7L11.8 33.3M6.7 35.4L7.7 32.4L9.7 30.3M169.1 81.6L169.4 83.9L171.2 86.3L172.0 88.9M23.3 19.7L24.5 18.2L25.7 17.4M26.8 17.7L25.7 17.4L25.9 16.3M20.8 17.3L19.1 17.4L17.9 17.8M25.7 20.3L23.3 19.7L20.8 17.3M147.4 26.6L148.8 25.9L150.6 25.8M148.8 29.1L150.2 29.3L151.9 30.5M142.7 24.7L144.8 25.0L147.4 26.6L148.8 29.1M147.1 22.4L147.6 21.2L147.3 18.9M148.4 21.5L150.0 22.0L151.6 21.6M152.6 22.2L151.6 21.6L152.2 20.6M142.8 23.5L145.1 23.4L147.1 22.4L148.4 21.5M150.0 21.8L148.4 21.5L148.7 19.9M21.6 9.7L19.8 10.2L18.0 11.3M155.0 81.4L153.7 81.6L152.5 82.4M151.4 82.3L152.5 82.4L152.3 83.6M156.8 78.7L155.0 81.4L154.5 83.3L152.9 84.7M1.9 74.8L-0.0 73.4L-2.4 72.2M171.4 86.3L172.9 86.5L174.5 87.1M174.9 88.2L174.5 87.1L175.6 86.7M169.2 84.2L171.4 86.3L174.1 87.5L177.1 87.5M178.2 88.7L177.1 87.5L178.2 86.4M1.9 71.3L0.2 72.9L-1.2 76.0M158.4 57.0L159.6 55.6L160.4 53.7M153.4 58.6L156.6 57.3L158.4 57.0M159.7 58.0L158.4 57.0L159.4 55.8M167.5 53.7L165.8 52.3L164.5 50.4M164.8 49.3L164.5 50.4L163.4 50.2M168.1 56.1L167.5 53.7L165.1 51.4M152.9 80.4L154.1 79.9L155.9 80.2M152.3 77.6L152.9 80.4L154.3 82.2L156.6 83.2M157.2 84.7L156.6 83.2L158.1 82.6M165.5 21.0L166.8 22.0L168.9 22.2L171.9 21.2M22.9 56.0L24.8 55.4L26.4 54.1M20.8 59.8L21.6 57.8L22.9 56.0L23.6 52.8M132.3 11.0L133.9 10.5L136.0 7.9L138.1 7.2M139.5 7.9L138.1 7.2L138.8 5.7M160.3 68.1L160.6 70.2L161.4 72.3M157.4 69.2L160.3 68.1L162.7 65.8M156.6 8.5L156.9 10.2L157.9 11.5M157.7 12.6L157.9 11.5L159.0 11.7M151.6 11.5L152.5 10.0L154.7 8.9L156.6 8.5M157.9 9.4L156.6 8.5L157.4 7.1M18.0 68.3L16.4 69.3L14.7 69.8" fill="none" stroke="currentColor" stroke-width="1.7" stroke-linecap="round" stroke-linejoin="round"/><path d="M88.2 64.0L90.8 64.0L89.8 111.0L88.8 111.0ZM106.6 64.0L109.2 64.0L108.4 96.0L107.5 96.0ZM112.2 68.0L114.8 68.0L114.0 90.0L113.0 90.0ZM118.7 72.0L121.3 72.0L120.5 97.0L119.5 97.0ZM125.1 74.0L127.7 74.0L126.9 90.0L126.0 90.0ZM132.7 76.0L135.3 76.0L134.9 91.0L134.1 91.0ZM143.7 80.0L146.3 80.0L145.4 94.0L144.6 94.0ZM158.7 80.0L161.3 80.0L160.4 88.0L159.6 88.0ZM36.9 76.0L39.5 76.0L38.7 92.0L37.8 92.0ZM42.6 74.0L45.2 74.0L44.4 90.0L43.4 90.0ZM46.6 72.0L49.2 72.0L48.4 86.0L47.4 86.0ZM48.2 80.0L50.8 80.0L50.0 97.8L49.0 97.8ZM57.9 68.0L60.5 68.0L59.7 88.0L58.8 88.0ZM61.9 70.0L64.5 70.0L63.7 95.4L62.8 95.4ZM66.7 72.0L69.3 72.0L68.5 90.0L67.5 90.0ZM75.7 70.0L78.3 70.0L77.5 96.2L76.5 96.2ZM82.1 70.0L84.7 70.0L84.7 102.6L83.8 102.6ZM88.6 70.0L91.2 70.0L90.4 111.5L89.5 111.5ZM96.7 68.0L99.3 68.0L98.5 100.0L97.5 100.0ZM100.7 70.0L103.3 70.0L102.5 92.0L101.5 92.0ZM55.7 64.0L58.3 64.0L57.5 80.0L56.5 80.0ZM70.7 68.0L73.3 68.0L72.5 84.0L71.5 84.0ZM78.7 66.0L81.3 66.0L80.5 86.0L79.5 86.0ZM51.4 4.9L54.0 4.9L54.9 17.8L53.9 17.8ZM61.1 5.7L63.7 5.7L63.7 21.9L62.8 21.9ZM82.1 0.0L84.7 0.0L84.7 11.4L83.8 11.4ZM72.4 5.7L75.0 5.7L74.2 21.9L73.2 21.9ZM82.3 2.0L84.9 2.0L84.0 19.4L83.1 19.4ZM88.0 4.1L90.6 4.1L89.8 21.9L88.8 21.9ZM94.4 11.4L97.0 11.4L96.2 21.9L95.2 21.9ZM112.2 6.5L114.8 6.5L114.0 16.2L113.0 16.2ZM107.4 13.0L110.0 13.0L109.2 29.1L108.2 29.1ZM128.4 19.4L131.0 19.4L130.1 33.2L129.2 33.2ZM65.7 10.0L68.3 10.0L67.5 24.0L66.5 24.0ZM76.7 8.0L79.3 8.0L78.5 22.0L77.5 22.0ZM98.7 8.0L101.3 8.0L100.5 24.0L99.5 24.0ZM22.4 59.8L25.0 59.8L24.1 63.9L23.2 63.9ZM29.6 59.0L32.2 59.0L31.3 64.7L30.4 64.7ZM16.7 60.0L19.3 60.0L18.4 66.0L17.6 66.0ZM12.7 81.0L15.3 81.0L14.4 86.0L13.6 86.0ZM26.7 81.0L29.3 81.0L28.4 88.0L27.6 88.0ZM158.7 36.0L161.3 36.0L160.4 42.0L159.6 42.0ZM172.7 28.0L175.3 28.0L174.4 34.0L173.6 34.0ZM174.7 62.0L177.3 62.0L176.4 68.0L175.6 68.0ZM163.7 82.0L166.3 82.0L165.4 90.0L164.6 90.0ZM138.7 70.0L141.3 70.0L140.4 80.0L139.6 80.0Z" fill="currentColor" opacity="0.88"/></symbol><symbol id="EM" viewBox="0 0 106 105" overflow="visible"><path d="M36.0 16.0L44.0 30.0L52.0 48.0L58.0 62.0L62.0 76.0M45.0 19.0L53.0 32.0L61.0 48.0L67.0 62.0L70.0 76.0M54.0 22.0L62.0 34.0L70.0 48.0L76.0 62.0L78.0 76.0M63.0 25.0L71.0 36.0L79.0 48.0L85.0 62.0L86.0 76.0M30.0 62.0L50.0 60.0L78.0 62.0M53.0 18.0L53.0 1.0" fill="none" stroke="currentColor" stroke-width="3.4" stroke-linecap="round" stroke-linejoin="round"/><path d="M33.6 49.3L27.7 45.0L21.5 44.0L16.9 49.1L10.2 46.1L3.6 55.1M39.7 44.2L34.8 41.5L30.0 42.7L28.4 34.6L19.2 40.0L13.0 38.5L7.3 37.1L8.9 23.4M42.6 40.3L39.6 33.7L37.2 29.4L31.3 27.0L30.8 21.4L27.3 16.4L14.9 19.3M48.2 37.2L44.1 34.2L45.8 28.2L45.2 24.1L39.8 20.8L39.3 14.0L37.6 9.4L28.6 6.9M56.0 38.1L59.7 32.8L60.7 28.8L60.5 23.4L55.7 18.5L67.5 16.8L66.6 11.5L71.8 6.3L63.2 -1.6M63.0 33.0L67.0 30.4L71.7 25.9L75.1 23.4L70.7 15.4L81.2 15.3L84.4 11.5M65.4 41.3L67.9 36.6L70.9 33.6L80.5 37.2L77.8 25.5L87.5 26.3L88.7 19.4L99.4 24.8M68.8 46.4L73.3 48.5L76.9 44.5L82.1 39.2L90.1 47.7L95.8 44.9L99.0 38.4L104.6 44.9M69.4 52.4L75.6 56.4L83.2 54.0L88.0 58.2L94.2 53.0L99.6 51.0L102.0 66.4M66.2 62.7L71.1 65.5L74.7 67.7L74.4 76.9L78.5 80.1L83.7 84.0L86.8 89.2M63.2 66.1L65.9 70.1L67.4 76.6L66.8 82.3L73.9 85.3L76.5 88.5L77.0 93.6M55.3 70.0L53.2 76.1L55.0 81.1L52.9 87.4L52.7 92.4L55.4 99.0M43.5 69.4L40.8 74.2L35.7 76.5L36.3 84.6L30.3 88.3L36.1 97.8M40.0 62.2L36.1 66.8L29.5 68.1L25.2 72.2L27.6 80.5L18.6 79.0L14.6 81.5M41.5 54.6L37.2 58.2L33.8 60.8L29.3 62.8L26.1 66.4L19.3 65.1L12.8 64.5L6.8 61.0L5.9 70.7" fill="none" stroke="currentColor" stroke-width="2.0" stroke-linecap="round" stroke-linejoin="round"/><path d="M59.8 32.3L61.9 34.2L62.9 36.4M40.1 74.5L40.9 77.3L43.2 79.2L45.4 80.1M68.7 14.3L67.8 15.7L66.5 16.6M69.6 16.1L69.5 17.3L68.8 19.1M67.8 19.6L68.8 19.1L69.4 20.1M66.9 13.2L68.7 14.3L69.6 16.1L69.9 18.1M68.9 19.5L69.9 18.1L71.3 19.0M87.1 50.5L89.1 50.6L90.8 49.6M92.0 49.9L90.8 49.6L91.1 48.4M84.8 55.4L85.2 53.1L87.1 50.5M72.1 43.1L70.9 44.7L69.1 45.4M69.9 34.6L71.0 37.5L70.9 40.8L72.1 43.1M4.5 49.0L5.5 46.8L5.6 44.5M6.4 43.7L5.6 44.5L4.7 43.6M-0.6 51.3L-1.3 52.7L-1.3 55.1M-2.1 56.0L-1.3 55.1L-0.4 56.0M7.3 50.1L4.5 49.0L1.4 49.7L-0.6 51.3M65.1 15.2L67.0 14.6L68.6 14.9M63.7 9.9L61.5 8.9L60.7 7.8M63.9 17.3L65.1 15.2L65.1 12.6L63.7 9.9M73.3 20.2L74.8 19.1L76.8 18.8L78.9 19.8M59.7 92.2L61.3 91.1L63.1 90.6M64.1 91.2L63.1 90.6L63.6 89.6M52.8 90.6L55.1 91.7L58.0 91.8L59.7 92.2M31.5 42.3L31.0 40.5L31.3 38.7L33.0 36.9M77.9 65.4L77.7 63.2L78.0 61.5M78.9 60.8L78.0 61.5L77.2 60.6M74.7 68.2L76.8 67.1L77.9 65.4M81.3 25.8L80.7 22.9L80.5 21.1M4.9 48.3L5.4 50.0L4.9 52.4M8.8 48.1L6.6 47.7L4.9 48.3L2.7 49.8M28.6 35.5L26.0 38.0L25.1 40.4M54.4 72.7L56.7 72.2L58.3 71.1M31.6 7.7L31.0 5.1M32.6 4.5L31.0 5.1L30.3 3.6M94.1 18.4L95.8 19.9L97.9 20.9M91.7 20.9L94.1 18.4M95.6 17.6L94.1 18.4L93.3 16.9M44.3 72.2L44.4 73.4L45.4 74.9M45.2 76.1L45.4 74.9L46.6 75.1M42.5 71.0L44.3 72.2L46.7 73.0M47.5 74.5L46.7 73.0L48.2 72.2M26.6 44.8L26.6 41.9L25.2 38.5M25.9 37.0L25.2 38.5L23.7 37.9M65.5 17.1L66.4 15.5L66.8 11.9L66.5 8.4M67.6 7.1L66.5 8.4L65.2 7.4M33.0 48.9L30.6 49.0L28.6 49.7M27.1 49.0L28.6 49.7L27.9 51.3M74.7 91.2L76.0 91.0L77.4 91.6M74.3 85.8L73.9 88.8L74.7 91.2L74.5 93.9M73.2 95.0L74.5 93.9L75.7 95.1M18.4 18.5L17.5 17.0L17.0 14.3M83.4 31.9L83.9 32.9L85.3 34.8M79.8 34.1L82.0 33.1L83.4 31.9M22.6 74.0L23.0 71.8L22.2 69.9M22.7 68.8L22.2 69.9L21.1 69.4M26.0 75.0L22.6 74.0L19.2 74.9M35.6 13.5L35.5 14.8L34.7 16.4M32.0 15.2L32.7 17.3L33.6 18.9M38.8 12.7L35.6 13.5L33.7 14.7L32.0 15.2M64.0 11.5L66.0 10.2L67.2 8.0M61.6 9.1L61.8 6.6L62.3 5.3M66.5 17.0L65.5 14.2L64.0 11.5L61.6 9.1M61.6 7.4L61.6 9.1L59.9 9.2M81.3 70.1L82.9 69.9L84.1 69.3M74.5 74.9L77.9 73.7L80.2 72.3L81.3 70.1M82.9 69.6L81.3 70.1L80.7 68.5M71.6 67.8L70.6 68.8L69.3 70.7M68.2 70.9L69.3 70.7L69.6 71.8M70.8 65.3L71.6 67.8L72.9 70.3L74.1 72.0M83.9 26.0L84.0 24.2L86.0 21.2L86.8 18.8M37.0 75.9L39.8 77.4L41.9 77.8L43.9 77.0M45.4 77.6L43.9 77.0L44.5 75.4M78.2 23.1L77.0 23.8L75.7 24.9M82.5 25.9L81.4 24.4L78.2 23.1M77.6 21.5L78.2 23.1L76.6 23.8M44.4 72.1L46.0 71.5L47.8 71.5M42.4 71.2L44.4 72.1L47.2 72.4M48.2 73.8L47.2 72.4L48.5 71.3M87.9 23.7L90.5 23.4L91.9 22.3M93.6 22.6L91.9 22.3L92.2 20.6M74.9 19.1L74.9 20.7L75.9 22.7M73.0 19.7L74.9 19.1L76.8 17.1M58.0 18.3L56.7 17.9L55.0 17.8M60.6 16.6L59.6 15.4L58.9 13.1M57.1 19.9L58.0 18.3L60.6 16.6L62.2 14.2M63.9 13.8L62.2 14.2L61.8 12.5M7.6 34.7L5.0 34.9L3.0 34.2M6.7 46.0L7.1 44.9L8.8 43.0M9.7 46.8L6.7 46.0L3.2 46.6L1.4 47.6M76.4 31.9L77.9 31.6L80.4 32.1M81.1 33.1L80.4 32.1L81.4 31.4M75.5 27.5L77.6 28.1L78.9 27.8M79.9 28.4L78.9 27.8L79.5 26.7M75.9 35.4L76.4 31.9L75.6 29.5L75.5 27.5M63.4 27.6L64.7 28.7L66.1 29.3M66.5 30.4L66.1 29.3L67.2 28.9M65.7 27.3L65.4 26.1L65.2 24.1M65.9 23.2L65.2 24.1L64.2 23.4M60.7 28.4L63.4 27.6L65.7 27.3M67.0 28.4L65.7 27.3L66.8 26.0M74.4 47.4L75.1 45.9L76.7 45.0M77.8 45.3L76.7 45.0L76.9 43.8M72.5 48.1L74.4 47.4L76.7 45.4M78.4 45.6L76.7 45.4L76.8 43.7M42.9 70.4L45.7 72.7L47.1 75.7M46.6 77.3L47.1 75.7L48.8 76.2M34.9 25.4L35.3 24.1L34.9 21.9M35.6 21.0L34.9 21.9L33.9 21.2M32.6 27.5L34.9 25.4L36.9 25.0L40.0 23.4M87.0 44.4L88.5 42.0L91.0 40.7M37.5 47.2L38.8 47.8L39.9 49.3M33.2 51.2L32.0 50.9L30.6 51.2M29.6 50.5L30.6 51.2L30.0 52.2M39.7 44.2L37.5 47.2L34.9 49.1L33.2 51.2M67.2 69.6L65.6 70.3L63.4 70.0M70.6 65.2L68.3 67.7L67.2 69.6M31.5 50.2L30.3 49.6L29.2 47.9M32.2 56.5L31.4 57.5L30.6 59.5M29.5 60.0L30.6 59.5L31.0 60.6M32.2 48.2L31.5 50.2L30.9 53.7L32.2 56.5M31.6 58.1L32.2 56.5L33.8 57.1M24.8 62.6L22.5 61.8L21.3 60.5M26.9 65.4L24.8 62.6L24.4 60.5M39.2 63.2L36.7 61.2L34.7 60.7M29.3 62.8L28.3 66.1L27.5 67.8L25.6 69.9M23.9 70.0L25.6 69.9L25.7 71.6M15.4 68.3L13.3 68.0L11.2 67.2M13.2 70.8L14.7 72.0L15.8 73.2M16.8 64.9L15.4 68.3L13.2 70.8L9.9 72.4M32.1 78.7L30.1 79.5L27.6 79.3M36.0 80.4L34.2 79.8L32.1 78.7M54.1 13.9L53.6 12.6L53.4 11.3M60.5 17.8L58.6 15.6L56.3 14.5L54.1 13.9M33.9 41.7L33.3 39.7L33.0 37.3L34.3 34.6M35.9 34.0L34.3 34.6L33.7 33.0M85.7 26.2L84.7 24.1L85.1 20.5M2.0 68.1L1.3 66.8L0.7 65.0M6.1 68.7L4.0 68.7L2.0 68.1M0.5 67.2L2.0 68.1L1.2 69.5M69.7 4.6L68.2 4.1L66.3 3.2M67.4 4.3L66.5 5.4L65.0 6.4M63.8 6.1L65.0 6.4L64.8 7.5M71.7 6.4L69.7 4.6L67.4 4.3M40.9 88.2L42.7 86.9L43.6 85.6M36.0 84.8L38.3 87.0L40.9 88.2L44.1 88.0M45.4 89.1L44.1 88.0L45.2 86.6M70.7 15.4L73.7 14.4L75.1 13.5M76.8 13.9L75.1 13.5L75.4 11.8M47.8 36.9L49.7 36.4L52.3 35.1M88.6 19.7L90.2 21.1L93.1 21.9L95.9 21.9M59.1 10.0L57.5 10.5L56.6 11.4M55.5 11.3L56.6 11.4L56.6 12.6M62.3 17.5L61.9 15.0L60.2 12.6L59.1 10.0M59.7 8.4L59.1 10.0L57.5 9.4M23.6 75.3L23.1 74.2L22.9 72.0M23.7 71.1L22.9 72.0L22.0 71.3M25.6 73.6L23.6 75.3L22.6 78.3L23.0 81.6M21.9 82.9L23.0 81.6L24.3 82.7M9.0 67.4L11.1 67.4L12.3 66.6M9.7 62.7L9.8 65.4L9.0 67.4L9.6 70.7M8.6 72.1L9.6 70.7L11.0 71.6M69.2 35.3L71.3 37.8L72.0 41.4M101.9 65.9L105.6 66.1M65.4 10.0L67.1 7.9L67.6 6.1M68.6 5.5L67.6 6.1L66.9 5.1M66.9 11.2L65.4 10.0L63.4 7.6L60.6 6.0M67.6 15.4L68.8 15.6L69.9 16.4M65.6 17.1L67.6 15.4L69.5 12.3M71.2 11.9L69.5 12.3L69.1 10.6M80.9 32.0L82.6 33.4L83.4 34.8M83.1 36.0L83.4 34.8L84.6 35.2M75.4 35.2L78.4 34.0L80.9 32.0M82.6 32.2L80.9 32.0L81.1 30.3M7.4 36.4L5.3 35.7L3.5 34.5M3.2 32.8L3.5 34.5L1.8 34.8M29.8 7.2L31.6 4.2M78.1 57.5L76.5 59.3L75.0 60.4M73.9 60.3L75.0 60.4L74.9 61.6M75.8 56.3L78.1 57.5L80.7 60.0M70.0 74.2L71.3 75.4L72.5 77.4M72.2 78.6L72.5 77.4L73.7 77.7M73.0 72.2L74.0 70.4L75.1 69.7M74.8 71.6L75.9 72.7L76.5 74.0M66.9 74.5L70.0 74.2L73.0 72.2L74.8 71.6M5.7 48.6L5.8 47.1L5.0 45.6M2.8 49.6L2.5 47.4L1.4 45.8M8.1 49.0L5.7 48.6L2.8 49.6M20.0 72.6L19.0 71.3L18.2 69.9M18.6 68.8L18.2 69.9L17.1 69.6M26.5 71.0L22.8 71.1L20.0 72.6M53.7 77.5L52.4 78.9L51.5 82.5M79.0 21.3L77.3 22.5L76.4 24.0M75.3 24.4L76.4 24.0L76.8 25.2M83.4 26.0L81.4 22.9L79.0 21.3L76.1 20.3M75.3 18.8L76.1 20.3L74.6 21.1M32.4 48.4L31.3 51.8L30.1 53.6M25.0 80.0L25.5 83.0L25.4 84.7L24.8 87.1M90.2 20.1L93.5 18.7L94.5 17.2M34.5 57.4L32.7 59.1L30.4 60.0M29.4 59.6L30.4 60.0L30.0 61.1M31.6 55.1L32.5 53.2L32.5 51.8M33.3 51.0L32.5 51.8L31.6 51.0M36.8 58.5L34.5 57.4L31.6 55.1L30.1 54.2M29.7 52.6L30.1 54.2L28.5 54.7M93.1 17.9L91.3 17.9L89.8 18.4M92.7 15.5L91.0 15.0L89.9 14.0M89.9 12.8L89.9 14.0L88.7 14.0M92.3 21.2L93.1 17.9L92.7 15.5M30.4 67.9L31.8 71.1L32.2 73.2L31.4 75.1M27.0 20.1L26.1 22.5L24.2 23.9M26.5 18.2L27.4 16.0L27.5 14.0M28.4 13.2L27.5 14.0L26.7 13.2M30.9 23.1L28.8 21.9L27.0 20.1L26.5 18.2M67.9 26.3L66.0 25.8L64.3 24.4M69.2 28.3L67.9 26.3L67.8 23.7L66.8 21.6M33.5 65.9L32.6 66.9L31.7 68.7M30.5 69.1L31.7 68.7L32.0 69.8M32.2 68.8L30.5 68.1L28.5 68.4M27.5 67.6L28.5 68.4L27.7 69.3M32.2 61.5L33.3 63.7L33.5 65.9L32.2 68.8M30.6 69.4L32.2 68.8L32.9 70.4M102.7 42.7L104.3 41.4L106.4 40.8M37.6 25.8L36.1 24.6L34.5 24.2M33.8 23.2L34.5 24.2L33.5 24.9M36.0 28.9L37.6 25.8L39.3 24.3M95.8 55.7L97.7 55.5L100.1 56.4M94.7 52.8L95.8 55.7L97.5 56.9L99.5 58.0M18.6 65.1L19.0 67.2L20.7 69.3M20.5 71.0L20.7 69.3L22.4 69.4M86.0 43.4L89.0 42.7L91.0 42.6M36.8 58.5L34.2 58.2L31.1 59.8M47.0 75.3L47.4 73.4L48.6 71.3M49.7 71.0L48.6 71.3L48.3 70.2M41.1 73.6L43.6 74.5L47.0 75.3L49.3 75.0M17.2 18.7L17.8 16.2L17.3 12.6M18.3 11.3L17.3 12.6L15.9 11.6M74.5 74.7L76.8 74.0L80.3 74.4L82.2 74.0" fill="none" stroke="currentColor" stroke-width="1.6" stroke-linecap="round" stroke-linejoin="round"/><path d="M49.6 71.5V99.5M40.5 71.6V96.5M73.9 68.7V88.7M72.3 68.9V92.4M40.7 66.3V91.1M43.9 68.5V93.9M53.9 73.0V89.1M34.9 66.8V86.3M39.0 68.7V95.6M48.7 69.6V97.6M34.2 70.1V92.5M35.5 69.3V86.7M59.4 73.6V99.2M43.6 66.8V89.7M75.6 72.3V90.4M78.0 72.0V89.0M62.8 67.2V98.1M42.3 67.6V88.5M67.5 72.0V95.3M45.6 68.4V92.9M73.2 71.9V91.3M50.0 69.6V102.2" fill="none" stroke="currentColor" stroke-width="1.8" opacity="0.85"/></symbol><symbol id="T0" viewBox="0 0 80 80" overflow="visible"><path transform="translate(23.0,2.0) scale(0.680,0.682)" d="M29,2.26a4.67,4.67,0,0,0-8,0L14.42,13.53A32.21,32.21,0,0,1,32.17,40.19H27.55A27.68,27.68,0,0,0,12.09,17.47L6,28a15.92,15.92,0,0,1,9.23,12.17H4.62A.76.76,0,0,1,4,39.06l2.94-5a10.74,10.74,0,0,0-3.36-1.9l-2.910,5a4.54,4.54,0,0,0,1.69,6.24A4.660,4.660,0,0,0,4.62,44H19.15a19.4,19.4,0,0,0-8-17.31l2.31-4A23.87,23.87,0,0,1,23.76,44H36.07a35.88,35.880,0,0,0-16.41-31.8l4.67-8a.77.77,0,0,1,1.05-.27c.53.29,20.29,34.77,20.66,35.17a.76.76,0,0,1-.68,1.13H40.6q.09,1.91,0,3.81h4.78A4.59,4.59,0,0,0,50,39.43a4.49,4.49,0,0,0-.62-2.280Z" fill="currentColor"/></symbol><symbol id="T1" viewBox="0 0 80 80" overflow="visible"><path transform="translate(17.0,24.0) scale(0.920,0.818)" d="M29,2.26a4.67,4.67,0,0,0-8,0L14.42,13.53A32.21,32.21,0,0,1,32.17,40.19H27.55A27.68,27.68,0,0,0,12.09,17.47L6,28a15.92,15.92,0,0,1,9.23,12.17H4.62A.76.76,0,0,1,4,39.06l2.94-5a10.74,10.74,0,0,0-3.36-1.9l-2.910,5a4.54,4.54,0,0,0,1.69,6.24A4.660,4.660,0,0,0,4.62,44H19.15a19.4,19.4,0,0,0-8-17.31l2.31-4A23.87,23.87,0,0,1,23.76,44H36.07a35.88,35.880,0,0,0-16.41-31.8l4.67-8a.77.77,0,0,1,1.05-.27c.53.29,20.29,34.77,20.66,35.17a.76.76,0,0,1-.68,1.13H40.6q.09,1.91,0,3.81h4.78A4.59,4.59,0,0,0,50,39.43a4.49,4.49,0,0,0-.62-2.280Z" fill="currentColor"/><path d="M40.0 26.0L40.0 6.0M20.0 58.0L8.0 67.0L2.0 63.0M60.0 58.0L72.0 67.0L78.0 63.0" fill="none" stroke="currentColor" stroke-width="1.6" stroke-linecap="round"/><path d="M14.9 54.6L13.2 52.5L12.2 50.6M16.4 60.7L14.8 57.9L14.9 54.6M16.2 53.4L14.9 54.6L13.7 53.3M66.7 63.0L66.6 60.5L65.9 56.9L65.0 54.7M41.5 15.6L42.8 15.1L44.5 13.7M40.0 14.3L41.5 15.6L43.1 18.8M42.5 20.4L43.1 18.8L44.8 19.3M40.0 17.1L41.7 14.3L44.4 12.5M70.0 65.5L72.2 63.1L74.1 62.5M74.6 71.7L76.1 72.2L78.3 72.1M74.9 74.8L73.2 75.0L72.0 74.4M74.2 65.5L75.2 68.4L74.6 71.7L74.9 74.8M-0.1 65.2L-1.2 64.0L-2.0 61.7M2.9 63.6L-0.1 65.2L-2.7 65.4M70.1 65.6L71.1 63.7L71.7 61.0L73.1 57.8M43.4 26.7L44.3 29.0L45.8 30.4M45.8 31.6L45.8 30.4L47.0 30.3M40.0 24.3L41.7 26.0L43.4 26.7M42.9 23.2L45.0 24.4L46.3 25.4M46.4 26.7L46.3 25.4L47.5 25.3M40.0 23.1L42.9 23.2L46.2 21.8" fill="none" stroke="currentColor" stroke-width="1.4" stroke-linecap="round" stroke-linejoin="round"/><path d="M48.7 58V65.1M40.5 58V67.2M27.2 58V65.8M22.9 58V70.4M35.6 58V64.5" fill="none" stroke="currentColor" stroke-width="1.5" opacity="0.8"/></symbol><symbol id="T2" viewBox="0 0 80 80" overflow="visible"><path transform="translate(17.0,24.0) scale(0.920,0.818)" d="M29,2.26a4.67,4.67,0,0,0-8,0L14.42,13.53A32.21,32.21,0,0,1,32.17,40.19H27.55A27.68,27.68,0,0,0,12.09,17.47L6,28a15.92,15.92,0,0,1,9.23,12.17H4.62A.76.76,0,0,1,4,39.06l2.94-5a10.74,10.74,0,0,0-3.36-1.9l-2.910,5a4.54,4.54,0,0,0,1.69,6.24A4.660,4.660,0,0,0,4.62,44H19.15a19.4,19.4,0,0,0-8-17.31l2.31-4A23.87,23.87,0,0,1,23.76,44H36.07a35.88,35.880,0,0,0-16.41-31.8l4.67-8a.77.77,0,0,1,1.05-.27c.53.29,20.29,34.77,20.66,35.17a.76.76,0,0,1-.68,1.13H40.6q.09,1.91,0,3.81h4.78A4.59,4.59,0,0,0,50,39.43a4.49,4.49,0,0,0-.62-2.280Z" fill="currentColor"/><path d="M40.0 26.0L40.0 6.0M20.0 58.0L8.0 67.0L2.0 63.0M60.0 58.0L72.0 67.0L78.0 63.0" fill="none" stroke="currentColor" stroke-width="1.6" stroke-linecap="round"/><path d="M4.3 68.4L6.0 67.0L8.0 66.2M2.8 63.6L3.3 66.8L4.3 68.4L6.1 69.4M6.5 71.1L6.1 69.4L7.7 68.9M40.0 12.1L42.5 12.0L45.4 13.4M14.9 59.7L15.1 57.8L15.7 56.2M16.5 60.6L14.9 59.7L12.8 59.5L10.5 60.2M40.0 11.9L42.6 9.6L44.8 6.6M46.6 6.4L44.8 6.6L44.5 4.9M60.0 58.0L60.6 55.8L62.4 53.9L65.7 51.8M67.4 52.2L65.7 51.8L66.0 50.1M40.0 23.0L42.6 23.0L46.0 24.6M46.6 26.2L46.0 24.6L47.6 23.9M63.4 60.5L65.7 59.2L69.0 59.3L71.1 58.2M40.0 16.2L41.6 17.3L43.0 19.1M42.8 20.8L43.0 19.1L44.8 19.2M65.8 57.7L67.4 59.2L68.3 61.0M67.9 62.1L68.3 61.0L69.5 61.3M64.0 61.0L65.8 57.7L66.4 56.0M40.0 25.5L41.8 25.6L44.5 24.9M73.7 66.1L74.1 67.3L75.0 69.4M71.7 66.8L73.7 66.1L75.5 64.9M43.4 9.0L43.5 7.0L44.3 5.8M45.5 5.6L44.3 5.8L44.0 4.6M40.0 8.1L43.4 9.0L46.4 10.7M56.9 62.3L59.0 62.5L61.2 62.2M57.5 65.7L59.2 64.8L60.9 64.9M57.5 60.0L56.9 62.3L57.5 65.7L58.4 67.7M51.5 62.1L50.9 64.7L50.0 66.5M53.9 60.0L51.5 62.1L47.5 63.2M45.8 62.3L47.5 63.2L46.6 64.9M39.6 60.0L41.3 63.5L43.6 65.9M43.5 67.8L43.6 65.9L45.5 66.0M66.2 58.3L67.3 59.4L68.3 61.2M62.5 59.3L66.2 58.3L69.8 56.4L72.3 53.5M74.2 53.4L72.3 53.5L72.1 51.6M28.9 38.0L28.9 35.1L28.3 34.0M30.9 39.5L28.9 38.0L27.7 35.4M19.5 49.6L19.8 48.0L20.4 46.7M22.2 52.3L19.5 49.6L18.6 46.9M58.2 62.9L56.7 64.5L55.2 64.9M54.0 64.3L55.2 64.9L54.5 66.1M55.2 60.0L58.2 62.9L60.6 66.1L62.3 67.3M62.6 69.2L62.3 67.3L64.1 66.9M17.5 59.3L17.0 56.7L15.6 53.6L13.7 51.9M13.6 50.0L13.7 51.9L11.8 52.0M11.6 50.4L11.4 48.7L12.3 46.3M19.4 56.4L17.2 53.8L14.9 52.7L11.6 50.4M58.3 53.1L60.6 53.0L62.6 51.7L64.9 50.8M28.5 64.2L28.4 62.4L29.1 59.7M30.3 59.1L29.1 59.7L28.4 58.6M37.6 60.0L35.6 62.9L32.3 64.4L28.5 64.2M27.3 62.7L28.5 64.2L27.1 65.4M44.5 32.6L45.3 30.1L45.4 27.2M24.0 60.0L22.7 62.4L19.9 64.6L18.6 66.8M16.8 67.2L18.6 66.8L19.1 68.6M14.2 63.7L12.5 62.7L10.7 62.4M20.6 60.0L17.4 62.7L14.2 63.7M12.5 62.8L14.2 63.7L13.3 65.4" fill="none" stroke="currentColor" stroke-width="1.4" stroke-linecap="round" stroke-linejoin="round"/><path d="M58.0 58V64.4M36.9 58V64.3M53.4 58V66.5M38.8 58V72.4M50.0 58V70.2M22.1 58V66.4M58.1 58V68.7M29.0 58V65.1M22.7 58V73.5M58.3 58V68.7" fill="none" stroke="currentColor" stroke-width="1.5" opacity="0.8"/></symbol><symbol id="T3" viewBox="0 0 80 80" overflow="visible"><path transform="translate(17.0,24.0) scale(0.920,0.818)" d="M29,2.26a4.67,4.67,0,0,0-8,0L14.42,13.53A32.21,32.21,0,0,1,32.17,40.19H27.55A27.68,27.68,0,0,0,12.09,17.47L6,28a15.92,15.92,0,0,1,9.23,12.17H4.62A.76.76,0,0,1,4,39.06l2.94-5a10.74,10.74,0,0,0-3.36-1.9l-2.910,5a4.54,4.54,0,0,0,1.69,6.24A4.660,4.660,0,0,0,4.62,44H19.15a19.4,19.4,0,0,0-8-17.31l2.31-4A23.87,23.87,0,0,1,23.76,44H36.07a35.88,35.880,0,0,0-16.41-31.8l4.67-8a.77.77,0,0,1,1.05-.27c.53.29,20.29,34.77,20.66,35.17a.76.76,0,0,1-.68,1.13H40.6q.09,1.91,0,3.81h4.78A4.59,4.59,0,0,0,50,39.43a4.49,4.49,0,0,0-.62-2.280Z" fill="currentColor"/><path d="M40.0 26.0L40.0 6.0M20.0 58.0L8.0 67.0L2.0 63.0M60.0 58.0L72.0 67.0L78.0 63.0" fill="none" stroke="currentColor" stroke-width="1.6" stroke-linecap="round"/><path d="M42.8 25.1L41.2 27.2L40.2 27.9M39.0 27.7L40.2 27.9L40.0 29.1M40.0 23.5L42.8 25.1L44.7 25.5M66.8 60.8L66.0 59.0L63.9 57.8M66.0 62.5L66.8 60.8L67.5 57.9L69.1 55.1M70.8 54.7L69.1 55.1L68.6 53.5M43.0 21.8L45.2 20.2L46.5 18.5M47.2 21.9L48.9 20.9L51.2 21.0M40.0 20.8L43.0 21.8L45.4 21.5L47.2 21.9M13.5 59.1L14.1 57.9L13.9 56.4M9.8 58.5L8.7 60.1L8.2 61.2M16.1 60.9L13.5 59.1L9.8 58.5M74.8 64.2L76.6 64.1L78.5 64.6M72.0 67.0L73.6 65.8L74.8 64.2M76.5 64.0L74.8 64.2L74.5 62.5M40.0 10.4L43.7 10.8L46.1 10.1M47.6 11.0L46.1 10.1L46.9 8.6M40.0 12.6L41.7 14.7L43.2 18.2M7.0 72.1L8.7 70.9L9.9 69.4M7.7 66.8L6.7 70.4L7.0 72.1L6.9 74.9M45.8 19.7L45.8 21.8L46.7 23.2M46.5 24.4L46.7 23.2L47.9 23.4M40.0 18.6L42.6 18.7L45.8 19.7L47.9 19.8M68.1 57.9L70.3 58.2L72.3 58.9M71.6 56.7L72.8 58.7L72.9 60.9M63.2 60.4L66.0 59.8L68.1 57.9L71.6 56.7M76.7 69.5L78.0 69.2L79.5 67.7M80.8 67.7L79.5 67.7L79.5 66.5M75.3 64.8L76.1 66.4L76.7 69.5M44.7 19.6L44.7 17.8L45.5 16.0M40.0 23.5L43.0 21.5L44.7 19.6L45.9 16.7M4.9 63.9L4.5 61.3L4.0 60.0M4.5 58.9L4.0 60.0L2.8 59.6M9.1 66.2L7.4 64.8L4.9 63.9L1.9 64.6M40.0 23.6L43.8 23.9L46.7 25.1M31.4 64.6L30.4 65.6L29.6 67.5M28.4 67.9L29.6 67.5L30.1 68.7M28.6 60.0L30.1 62.0L31.4 64.6M54.1 62.7L53.8 64.5L54.7 66.7M53.0 60.0L54.1 62.7L53.5 66.6M18.9 63.6L21.1 63.6L22.7 64.4M17.4 66.8L19.2 68.5L20.2 69.9M19.6 60.0L18.9 63.6L17.4 66.8L16.9 69.0M33.9 28.8L35.8 27.2L36.6 25.3M37.8 24.8L36.6 25.3L36.1 24.0M31.2 27.5L31.7 25.1L33.1 22.6M36.7 30.9L33.9 28.8L31.2 27.5L27.3 27.8M25.8 26.6L27.3 27.8L26.1 29.3M28.6 69.5L29.4 70.8L31.4 72.9M31.3 74.2L31.4 72.9L32.7 72.9M27.9 60.0L27.9 64.0L28.6 67.1L28.6 69.5M27.2 70.8L28.6 69.5L29.9 70.9M59.9 51.4L58.2 50.1L55.6 49.7M58.9 54.0L59.9 51.4L60.1 47.4L62.0 44.5M63.9 44.2L62.0 44.5L61.6 42.7M52.4 34.0L53.6 36.5L54.7 37.9M54.4 39.2L54.7 37.9L56.0 38.1M43.9 31.8L47.9 32.2L49.7 33.2L52.4 34.0M53.3 35.7L52.4 34.0L54.0 33.0M40.3 26.5L42.4 26.0L45.8 23.9M62.7 59.6L66.3 58.1L69.4 58.3M70.6 59.8L69.4 58.3L70.8 57.0M66.8 64.1L68.2 65.8L68.5 67.7M62.9 60.0L64.8 63.1L66.8 64.1L70.1 64.8M71.1 66.5L70.1 64.8L71.7 63.8M18.6 51.3L18.5 49.5L18.1 47.7M18.9 46.6L18.1 47.7L17.0 47.0M22.5 51.8L18.6 51.3L16.6 51.6M55.1 60.0L55.3 62.7L54.9 65.1M53.4 66.2L54.9 65.1L56.1 66.7M56.2 35.8L57.6 36.5L60.0 36.4M52.6 44.6L53.4 40.9L54.4 38.5L56.2 35.8M39.4 63.5L40.7 64.3L42.6 64.7M43.3 65.8L42.6 64.7L43.7 63.9M38.0 60.0L39.4 63.5L39.0 65.9M57.2 62.5L55.1 63.2L53.2 64.8M51.8 64.7L53.2 64.8L53.1 66.1M57.1 60.0L57.2 62.5L56.1 64.9M15.4 55.7L14.8 57.3L13.2 58.5M18.6 57.6L15.4 55.7L13.2 53.7M62.8 51.0L65.5 51.6L66.9 52.4M58.8 53.8L60.6 51.9L62.8 51.0M32.7 60.0L32.6 62.1L34.5 65.7L37.8 68.1M24.3 69.6L25.7 69.9L28.3 69.2M29.4 69.8L28.3 69.2L28.9 68.0M24.0 60.0L24.6 62.5L24.2 65.7L24.3 69.6M26.6 41.2L25.4 43.3L25.2 44.8M28.5 43.1L26.6 41.2L25.2 38.3M51.3 29.1L53.3 29.7L55.1 31.2M45.8 34.6L47.8 33.6L49.7 31.9L51.3 29.1M53.2 28.6L51.3 29.1L50.8 27.3" fill="none" stroke="currentColor" stroke-width="1.4" stroke-linecap="round" stroke-linejoin="round"/><path d="M33.8 58V74.0M31.7 58V71.3M43.3 58V66.1M57.1 58V64.0M43.4 58V69.5M20.9 58V76.2M56.5 58V64.3M37.1 58V71.7M39.7 58V65.0M46.3 58V68.1M35.3 58V75.6M55.4 58V72.8M20.1 58V64.5M24.7 58V67.6M20.8 58V64.8" fill="none" stroke="currentColor" stroke-width="1.5" opacity="0.8"/></symbol></defs></svg>
<svg style="left:488.8px;top:205.0px;color:#c1272d" width="180.2" height="157.0" viewBox="0 0 180 157" preserveAspectRatio="none"><use href="#LA"/></svg>
<svg style="left:798.4px;top:205.0px;color:#c1272d" width="180.2" height="157.0" viewBox="0 0 180 157" preserveAspectRatio="none"><use href="#LA"/></svg>
<svg style="left:1109.1px;top:205.0px;color:#6b5fce" width="180.2" height="157.0" viewBox="0 0 180 157" preserveAspectRatio="none"><use href="#LA"/></svg>
<svg style="left:1417.8px;top:205.0px;color:#000" width="180.2" height="157.0" viewBox="0 0 180 157" preserveAspectRatio="none"><use href="#LA"/></svg>
<svg style="left:488.8px;top:503.4px;color:#c1272d" width="180.2" height="111.0" viewBox="0 0 180 112" preserveAspectRatio="none"><use href="#LB"/></svg>
<svg style="left:798.4px;top:503.4px;color:#c1272d" width="180.2" height="111.0" viewBox="0 0 180 112" preserveAspectRatio="none"><use href="#LB"/></svg>
<svg style="left:1109.1px;top:503.4px;color:#6b5fce" width="180.2" height="111.0" viewBox="0 0 180 112" preserveAspectRatio="none"><use href="#LB"/></svg>
<svg style="left:1417.8px;top:503.4px;color:#000" width="180.2" height="111.0" viewBox="0 0 180 112" preserveAspectRatio="none"><use href="#LB"/></svg>
<svg style="left:143.6px;top:203.9px;color:#ff0000" width="199.8" height="95.7" viewBox="0 0 200 96" preserveAspectRatio="none"><use href="#LC"/></svg>
<svg style="left:142.0px;top:303.0px;color:#ff0000" width="195.4" height="88.6" viewBox="0 0 200 96" preserveAspectRatio="none"><use href="#LC"/></svg>
<svg style="left:160.0px;top:396.5px;color:#ff0000" width="165.0" height="88.3" viewBox="0 0 200 96" preserveAspectRatio="none"><use href="#LC"/></svg>
<svg style="left:158.0px;top:495.7px;color:#ff0000" width="174.5" height="90.9" viewBox="0 0 200 96" preserveAspectRatio="none"><use href="#LC"/></svg>
<svg style="left:156.9px;top:591.4px;color:#ff0000" width="180.5" height="141.6" viewBox="0 0 200 143" preserveAspectRatio="none"><use href="#LCA"/></svg>
<svg style="left:160.0px;top:743.5px;color:#ff0000" width="180.5" height="127.9" viewBox="0 0 200 143" preserveAspectRatio="none"><use href="#LCA"/></svg>
<svg style="left:157.0px;top:878.0px;color:#ff0000" width="180.0" height="134.6" viewBox="0 0 200 143" preserveAspectRatio="none"><use href="#LCA"/></svg>
<svg style="left:162.0px;top:1017.7px;color:#ff0000" width="180.0" height="168.2" viewBox="0 0 200 187" preserveAspectRatio="none"><use href="#LCA2"/></svg>
<svg style="left:161.8px;top:1204.0px;color:#ff0000" width="179.5" height="166.0" viewBox="0 0 200 187" preserveAspectRatio="none"><use href="#LCA2"/></svg>
<svg style="left:161.8px;top:1383.7px;color:#ff0000" width="179.5" height="168.3" viewBox="0 0 200 187" preserveAspectRatio="none"><use href="#LCA2"/></svg>
<svg style="left:473.0px;top:784.4px;color:#c1272d" width="106.0" height="104.6" viewBox="0 0 106 105" preserveAspectRatio="none"><use href="#EM"/></svg>
<svg style="left:610.6px;top:784.4px;color:#ffffff" width="106.0" height="104.6" viewBox="0 0 106 105" preserveAspectRatio="none"><use href="#EM"/></svg>
<svg style="left:746.6px;top:784.4px;color:#00ff00" width="106.0" height="104.6" viewBox="0 0 106 105" preserveAspectRatio="none"><use href="#EM"/></svg>
<svg style="left:882.5px;top:784.4px;color:#6b5fce" width="106.0" height="104.6" viewBox="0 0 106 105" preserveAspectRatio="none"><use href="#EM"/></svg>
<svg style="left:1212.4px;top:791.8px;color:#c1272d" width="106.4" height="103.2" viewBox="0 0 106 105" preserveAspectRatio="none"><use href="#EM"/></svg>
<svg style="left:1420.3px;top:756.4px;color:#c1272d" width="182.1" height="156.3" viewBox="0 0 180 157" preserveAspectRatio="none"><use href="#LA"/></svg>
<svg style="left:939.8px;top:1100.4px;color:#c1272d" width="182.8" height="158.1" viewBox="0 0 180 157" preserveAspectRatio="none"><use href="#LA2"/></svg>
<svg style="left:479.0px;top:1047.0px;color:#c1272d" width="80.0" height="80.0" viewBox="0 0 80 80" preserveAspectRatio="none"><use href="#T0"/></svg>
<svg style="left:479.0px;top:1084.0px;color:#c1272d" width="80.0" height="80.0" viewBox="0 0 80 80" preserveAspectRatio="none"><use href="#T1"/></svg>
<svg style="left:479.0px;top:1174.0px;color:#c1272d" width="80.0" height="80.0" viewBox="0 0 80 80" preserveAspectRatio="none"><use href="#T2"/></svg>
<svg style="left:475.0px;top:1256.0px;color:#c1272d" width="88.0" height="90.0" viewBox="0 0 80 80" preserveAspectRatio="none"><use href="#T3"/></svg>
<svg style="left:582.6px;top:1047.0px;color:#c1272d" width="80.0" height="80.0" viewBox="0 0 80 80" preserveAspectRatio="none"><use href="#T0"/></svg>
<svg style="left:582.6px;top:1084.0px;color:#c1272d" width="80.0" height="80.0" viewBox="0 0 80 80" preserveAspectRatio="none"><use href="#T1"/></svg>
<svg style="left:582.6px;top:1174.0px;color:#c1272d" width="80.0" height="80.0" viewBox="0 0 80 80" preserveAspectRatio="none"><use href="#T2"/></svg>
<svg style="left:578.6px;top:1256.0px;color:#c1272d" width="88.0" height="90.0" viewBox="0 0 80 80" preserveAspectRatio="none"><use href="#T3"/></svg>
<svg style="left:686.5px;top:1047.0px;color:#c1272d" width="80.0" height="80.0" viewBox="0 0 80 80" preserveAspectRatio="none"><use href="#T0"/></svg>
<svg style="left:686.5px;top:1084.0px;color:#c1272d" width="80.0" height="80.0" viewBox="0 0 80 80" preserveAspectRatio="none"><use href="#T1"/></svg>
<svg style="left:686.5px;top:1174.0px;color:#c1272d" width="80.0" height="80.0" viewBox="0 0 80 80" preserveAspectRatio="none"><use href="#T2"/></svg>
<svg style="left:682.5px;top:1256.0px;color:#c1272d" width="88.0" height="90.0" viewBox="0 0 80 80" preserveAspectRatio="none"><use href="#T3"/></svg>
</div>
<div style="position:absolute;left:1668px;top:135px;width:19.5px;height:1293px;background:#4a4a4a"></div>
<svg style="left:1672px;top:142px;" width="12" height="8" viewBox="0 0 12 8"><path d="M2 6 L6 2 L10 6" fill="none" stroke="#b0b0b0" stroke-width="1.2"/></svg>
<div style="position:absolute;left:1671.5px;top:545px;width:12px;height:30px;background:#5e5e5e;border-radius:6px"></div>
<svg style="left:1672px;top:1413px;" width="12" height="8" viewBox="0 0 12 8"><path d="M2 2 L6 6 L10 2" fill="none" stroke="#b0b0b0" stroke-width="1.2"/></svg>
<div style="position:absolute;left:1687px;top:101px;width:3px;height:1347.5px;background:#3c3c3c"></div>
<div style="position:absolute;left:81px;top:1428px;width:1606px;height:20px;background:#4a4a4a"></div>
<div style="position:absolute;left:81px;top:1447.5px;width:1609px;height:1px;background:#3c3c3c"></div>
<div style="position:absolute;left:83px;top:1428px;width:1604px;height:1px;background:#3e3e3e"></div>
<div style="position:absolute;left:87px;top:1429px;width:78px;height:18.5px;background:#434343;border-radius:3px 0 0 0"></div>
<div class="t" style="left:90.0px;top:1434.7px;font-size:11px;color:#dcdcdc;font-weight:normal;">8.33%</div>
<div style="position:absolute;left:145px;top:1431px;width:1px;height:16px;background:#3c3c3c"></div>
<svg style="left:149px;top:1435.0px;" width="12" height="8" viewBox="0 0 12 8"><path d="M2 2 L6 6 L10 2" fill="none" stroke="#d0d0d0" stroke-width="1.6"/></svg>
<div style="position:absolute;left:172px;top:1429px;width:77px;height:18.5px;background:#434343;border-radius:3px 0 0 0"></div>
<div class="t" style="left:175.0px;top:1434.7px;font-size:11px;color:#dcdcdc;font-weight:normal;">0°</div>
<div style="position:absolute;left:230px;top:1431px;width:1px;height:16px;background:#3c3c3c"></div>
<svg style="left:234px;top:1435.0px;" width="12" height="8" viewBox="0 0 12 8"><path d="M2 2 L6 6 L10 2" fill="none" stroke="#d0d0d0" stroke-width="1.6"/></svg>
<svg style="left:259px;top:1432px;" width="14" height="12" viewBox="0 0 14 12"><rect x="1" y="1" width="2" height="10" fill="#cdcdcd"/><path d="M11 1 L4 6 L11 11 Z" fill="#cdcdcd"/></svg>
<svg style="left:280px;top:1432px;" width="10" height="12" viewBox="0 0 10 12"><path d="M8 1 L2 6 L8 11 Z" fill="#cdcdcd"/></svg>
<div style="position:absolute;left:298.5px;top:1429px;width:66.5px;height:18.5px;background:#434343;border-radius:3px 0 0 0"></div>
<div class="t" style="left:303.0px;top:1435.2px;font-size:11px;color:#dcdcdc;font-weight:normal;">5</div>
<div style="position:absolute;left:345px;top:1431px;width:1px;height:16px;background:#3c3c3c"></div>
<svg style="left:349px;top:1435.0px;" width="12" height="8" viewBox="0 0 12 8"><path d="M2 2 L6 6 L10 2" fill="none" stroke="#d0d0d0" stroke-width="1.6"/></svg>
<svg style="left:376px;top:1432px;" width="10" height="12" viewBox="0 0 10 12"><path d="M2 1 L8 6 L2 11 Z" fill="#cdcdcd"/></svg>
<svg style="left:393px;top:1432px;" width="14" height="12" viewBox="0 0 14 12"><path d="M1 1 L8 6 L1 11 Z" fill="#cdcdcd"/><rect x="10" y="1" width="2" height="10" fill="#cdcdcd"/></svg>
<div style="position:absolute;left:414px;top:1430px;width:1px;height:18px;background:#3c3c3c"></div>
<div class="t" style="left:331.0px;width:400px;text-align:center;top:1434.7px;font-size:11px;color:#d6d6d6;font-weight:normal;">Selection</div>
<div style="position:absolute;left:646px;top:1430px;width:1px;height:18px;background:#3c3c3c"></div>
<svg style="left:651px;top:1432px;" width="10" height="12" viewBox="0 0 10 12"><path d="M2 1 L8 6 L2 11 Z" fill="#cdcdcd"/></svg>
<div style="position:absolute;left:666px;top:1430px;width:1px;height:18px;background:#3c3c3c"></div>
<svg style="left:672px;top:1432px;" width="8" height="12" viewBox="0 0 8 12"><path d="M6 2 L2 6 L6 10" fill="none" stroke="#a8a8a8" stroke-width="1.3"/></svg>
<div style="position:absolute;left:1052px;top:1430px;width:29px;height:15px;background:#5c5c5c;border-radius:7px"></div>
<svg style="left:1654px;top:1432px;" width="8" height="12" viewBox="0 0 8 12"><path d="M2 2 L6 6 L2 10" fill="none" stroke="#a8a8a8" stroke-width="1.3"/></svg>
<div style="position:absolute;left:1690px;top:101px;width:325px;height:1347.5px;background:#3c3c3c"></div>
<div style="position:absolute;left:1690px;top:101.5px;width:325px;height:14px;background:#404040"></div>
<svg style="left:1716px;top:105px;" width="12" height="7" viewBox="0 0 12 7"><path d="M11 0.5 L8 3.5 L11 6.5 Z M6.5 0.5 L3.5 3.5 L6.5 6.5 Z" fill="#d0d0d0"/></svg>
<svg style="left:1997px;top:105px;" width="12" height="7" viewBox="0 0 12 7"><path d="M1 0.5 L4 3.5 L1 6.5 Z M5.5 0.5 L8.5 3.5 L5.5 6.5 Z" fill="#d0d0d0"/></svg>
<div style="position:absolute;left:1690.5px;top:115.7px;width:43px;height:79.3px;background:#535353"></div>
<svg style="left:1702px;top:120.7px;" width="22" height="5" viewBox="0 0 22 5"><rect x="0.0" y="0" width="1" height="4" fill="#3a3a3a"/><rect x="2.1" y="0" width="1" height="4" fill="#3a3a3a"/><rect x="4.2" y="0" width="1" height="4" fill="#3a3a3a"/><rect x="6.3" y="0" width="1" height="4" fill="#3a3a3a"/><rect x="8.4" y="0" width="1" height="4" fill="#3a3a3a"/><rect x="10.5" y="0" width="1" height="4" fill="#3a3a3a"/><rect x="12.6" y="0" width="1" height="4" fill="#3a3a3a"/><rect x="14.7" y="0" width="1" height="4" fill="#3a3a3a"/><rect x="16.8" y="0" width="1" height="4" fill="#3a3a3a"/><rect x="18.9" y="0" width="1" height="4" fill="#3a3a3a"/><rect x="21.0" y="0" width="1" height="4" fill="#3a3a3a"/></svg>
<div style="position:absolute;left:1690.5px;top:197px;width:43px;height:78px;background:#535353"></div>
<svg style="left:1702px;top:202px;" width="22" height="5" viewBox="0 0 22 5"><rect x="0.0" y="0" width="1" height="4" fill="#3a3a3a"/><rect x="2.1" y="0" width="1" height="4" fill="#3a3a3a"/><rect x="4.2" y="0" width="1" height="4" fill="#3a3a3a"/><rect x="6.3" y="0" width="1" height="4" fill="#3a3a3a"/><rect x="8.4" y="0" width="1" height="4" fill="#3a3a3a"/><rect x="10.5" y="0" width="1" height="4" fill="#3a3a3a"/><rect x="12.6" y="0" width="1" height="4" fill="#3a3a3a"/><rect x="14.7" y="0" width="1" height="4" fill="#3a3a3a"/><rect x="16.8" y="0" width="1" height="4" fill="#3a3a3a"/><rect x="18.9" y="0" width="1" height="4" fill="#3a3a3a"/><rect x="21.0" y="0" width="1" height="4" fill="#3a3a3a"/></svg>
<div style="position:absolute;left:1690.5px;top:277px;width:43px;height:78.5px;background:#535353"></div>
<svg style="left:1702px;top:282px;" width="22" height="5" viewBox="0 0 22 5"><rect x="0.0" y="0" width="1" height="4" fill="#3a3a3a"/><rect x="2.1" y="0" width="1" height="4" fill="#3a3a3a"/><rect x="4.2" y="0" width="1" height="4" fill="#3a3a3a"/><rect x="6.3" y="0" width="1" height="4" fill="#3a3a3a"/><rect x="8.4" y="0" width="1" height="4" fill="#3a3a3a"/><rect x="10.5" y="0" width="1" height="4" fill="#3a3a3a"/><rect x="12.6" y="0" width="1" height="4" fill="#3a3a3a"/><rect x="14.7" y="0" width="1" height="4" fill="#3a3a3a"/><rect x="16.8" y="0" width="1" height="4" fill="#3a3a3a"/><rect x="18.9" y="0" width="1" height="4" fill="#3a3a3a"/><rect x="21.0" y="0" width="1" height="4" fill="#3a3a3a"/></svg>
<div style="position:absolute;left:1690.5px;top:357.5px;width:43px;height:109.5px;background:#535353"></div>
<svg style="left:1702px;top:362.5px;" width="22" height="5" viewBox="0 0 22 5"><rect x="0.0" y="0" width="1" height="4" fill="#3a3a3a"/><rect x="2.1" y="0" width="1" height="4" fill="#3a3a3a"/><rect x="4.2" y="0" width="1" height="4" fill="#3a3a3a"/><rect x="6.3" y="0" width="1" height="4" fill="#3a3a3a"/><rect x="8.4" y="0" width="1" height="4" fill="#3a3a3a"/><rect x="10.5" y="0" width="1" height="4" fill="#3a3a3a"/><rect x="12.6" y="0" width="1" height="4" fill="#3a3a3a"/><rect x="14.7" y="0" width="1" height="4" fill="#3a3a3a"/><rect x="16.8" y="0" width="1" height="4" fill="#3a3a3a"/><rect x="18.9" y="0" width="1" height="4" fill="#3a3a3a"/><rect x="21.0" y="0" width="1" height="4" fill="#3a3a3a"/></svg>
<div style="position:absolute;left:1690.5px;top:468.5px;width:43px;height:45.10000000000002px;background:#535353"></div>
<svg style="left:1702px;top:473.5px;" width="22" height="5" viewBox="0 0 22 5"><rect x="0.0" y="0" width="1" height="4" fill="#3a3a3a"/><rect x="2.1" y="0" width="1" height="4" fill="#3a3a3a"/><rect x="4.2" y="0" width="1" height="4" fill="#3a3a3a"/><rect x="6.3" y="0" width="1" height="4" fill="#3a3a3a"/><rect x="8.4" y="0" width="1" height="4" fill="#3a3a3a"/><rect x="10.5" y="0" width="1" height="4" fill="#3a3a3a"/><rect x="12.6" y="0" width="1" height="4" fill="#3a3a3a"/><rect x="14.7" y="0" width="1" height="4" fill="#3a3a3a"/><rect x="16.8" y="0" width="1" height="4" fill="#3a3a3a"/><rect x="18.9" y="0" width="1" height="4" fill="#3a3a3a"/><rect x="21.0" y="0" width="1" height="4" fill="#3a3a3a"/></svg>
<div style="position:absolute;left:1690.5px;top:515.5px;width:43px;height:44.5px;background:#535353"></div>
<svg style="left:1702px;top:520.5px;" width="22" height="5" viewBox="0 0 22 5"><rect x="0.0" y="0" width="1" height="4" fill="#3a3a3a"/><rect x="2.1" y="0" width="1" height="4" fill="#3a3a3a"/><rect x="4.2" y="0" width="1" height="4" fill="#3a3a3a"/><rect x="6.3" y="0" width="1" height="4" fill="#3a3a3a"/><rect x="8.4" y="0" width="1" height="4" fill="#3a3a3a"/><rect x="10.5" y="0" width="1" height="4" fill="#3a3a3a"/><rect x="12.6" y="0" width="1" height="4" fill="#3a3a3a"/><rect x="14.7" y="0" width="1" height="4" fill="#3a3a3a"/><rect x="16.8" y="0" width="1" height="4" fill="#3a3a3a"/><rect x="18.9" y="0" width="1" height="4" fill="#3a3a3a"/><rect x="21.0" y="0" width="1" height="4" fill="#3a3a3a"/></svg>
<div style="position:absolute;left:1690.5px;top:562px;width:43px;height:885.5px;background:#535353"></div>
<svg style="left:1700px;top:131.5px;" width="24" height="24" viewBox="0 0 24 24"><circle cx="12" cy="12" r="7" fill="none" stroke="#c8c8c8" stroke-width="2"/><circle cx="12" cy="12" r="2" fill="#c8c8c8"/><path d="M12 1 V23 M1 12 H23 M4.5 4.5 L19.5 19.5 M19.5 4.5 L4.5 19.5" stroke="#c8c8c8" stroke-width="1.6"/></svg>
<svg style="left:1700px;top:163.5px;" width="24" height="24" viewBox="0 0 24 24"><circle cx="12" cy="12" r="9" fill="#c8c8c8"/><circle cx="12" cy="7.5" r="1.6" fill="#535353"/><path d="M10 10.5 H13 V16 H14.5 V17.5 H9.5 V16 H11 V12 H10 Z" fill="#535353"/></svg>
<svg style="left:1700px;top:211px;" width="24" height="24" viewBox="0 0 24 24"><circle cx="12" cy="12" r="7.5" fill="#c8c8c8"/><circle cx="12" cy="12" r="9.5" fill="none" stroke="#c8c8c8" stroke-width="1" stroke-dasharray="2 2"/></svg>
<svg style="left:1700px;top:244px;" width="24" height="24" viewBox="0 0 24 24"><rect x="7.5" y="4" width="12" height="11" fill="none" stroke="#c8c8c8" stroke-width="1.5"/><rect x="4" y="12" width="6" height="6" fill="none" stroke="#c8c8c8" stroke-width="1.5"/><rect x="6" y="15" width="5" height="5" fill="#c8c8c8"/></svg>
<svg style="left:1700px;top:290px;" width="24" height="24" viewBox="0 0 24 24"><defs><linearGradient id="gdk"><stop offset="0" stop-color="#2a2a2a"/><stop offset="1" stop-color="#e8e8e8"/></linearGradient></defs><rect x="3.5" y="6" width="17" height="13" fill="url(#gdk)" stroke="#c8c8c8" stroke-width="1.2"/></svg>
<svg style="left:1700px;top:324px;" width="24" height="24" viewBox="0 0 24 24"><circle cx="10" cy="10.5" r="6.5" fill="#c8c8c8"/><circle cx="14" cy="14" r="6.5" fill="#8a8a8a" stroke="#c8c8c8" stroke-width="1.2"/></svg>
<svg style="left:1700px;top:370px;" width="24" height="24" viewBox="0 0 24 24"><rect x="5.5" y="5.5" width="13" height="13" fill="none" stroke="#c8c8c8" stroke-width="1.6" stroke-dasharray="3 1.5"/><circle cx="12" cy="12" r="1" fill="#c8c8c8"/></svg>
<svg style="left:1700px;top:402px;" width="24" height="24" viewBox="0 0 24 24"><rect x="3" y="3" width="1.5" height="18" fill="#c8c8c8"/><rect x="6" y="6" width="7" height="5" fill="#c8c8c8"/><rect x="6" y="13" width="13" height="5" fill="#c8c8c8"/></svg>
<svg style="left:1700px;top:435.5px;" width="24" height="24" viewBox="0 0 24 24"><rect x="4" y="4" width="10" height="9" fill="#c8c8c8"/><rect x="10" y="10" width="10" height="10" fill="#c8c8c8" stroke="#535353" stroke-width="1.4"/></svg>
<svg style="left:1700px;top:482px;" width="24" height="24" viewBox="0 0 24 24"><path d="M11 6 H5 V20 H18 V13" fill="none" stroke="#c8c8c8" stroke-width="1.8"/><path d="M10 14 L19 5 M13 4 H20 V11" fill="none" stroke="#c8c8c8" stroke-width="1.8"/></svg>
<svg style="left:1700px;top:529px;" width="24" height="24" viewBox="0 0 24 24"><path d="M4 5 H20 V16 H11 L7 20 V16 H4 Z" fill="#c8c8c8"/></svg>
<div style="position:absolute;left:1736.5px;top:115.7px;width:278px;height:330.3px;background:#535353"></div>
<div style="position:absolute;left:1736.5px;top:115.7px;width:278px;height:31px;background:#434343"></div>
<div style="position:absolute;left:1736.5px;top:115.7px;width:57.799999999999955px;height:31px;background:#535353"></div>
<svg style="left:1742.5px;top:124.7px;" width="8" height="14" viewBox="0 0 8 14"><path d="M1 5 L4 1.5 L7 5 M1 9 L4 12.5 L7 9" fill="none" stroke="#b0b0b0" stroke-width="1.2"/></svg>
<div class="t" style="left:1754.0px;top:125.5px;font-size:11.5px;color:#f2f2f2;font-weight:bold;">Color</div>
<svg style="left:1993px;top:125.7px;" width="15" height="12" viewBox="0 0 15 12"><rect x="1" y="1" width="12" height="1.5" fill="#c8c8c8"/><rect x="1" y="5" width="12" height="1.5" fill="#c8c8c8"/><rect x="1" y="9" width="12" height="1.5" fill="#c8c8c8"/></svg>
<div style="position:absolute;left:1742.7px;top:158.3px;width:46px;height:15.5px;background:#111;border:1px solid #222"></div>
<div style="position:absolute;left:1743.5px;top:159px;width:14.5px;height:14px;background:#fff"></div>
<svg style="left:1743.5px;top:159px;" width="14.5" height="14" viewBox="0 0 14.5 14"><path d="M0.5 13.5 L14 0.5" stroke="#f00" stroke-width="2"/></svg>
<div style="position:absolute;left:1758.5px;top:159px;width:14.5px;height:14px;background:#000"></div>
<div style="position:absolute;left:1773.5px;top:159px;width:14.5px;height:14px;background:#fff"></div>
<div class="t" style="left:1913.0px;top:161.7px;font-size:11px;color:#b0b0b0;font-weight:normal;">#</div>
<div style="position:absolute;left:1927.5px;top:154.7px;width:67.5px;height:23px;background:#454545;border:1px solid #4c4c4c;border-radius:3px"></div>
<div class="t" style="left:1933.0px;top:161.1px;font-size:11.5px;color:#e8e8e8;font-weight:normal;">FF0000</div>
<div style="position:absolute;left:1743px;top:185.5px;width:252px;height:254px;border:1px solid #3e3e3e"></div>
<svg style="left:1744px;top:186.5px;" width="250" height="252" viewBox="0 0 250 252"><defs><linearGradient id="hue" x1="0" x2="1"><stop offset="0" stop-color="#f00"/><stop offset="0.1667" stop-color="#ff0"/><stop offset="0.3333" stop-color="#0f0"/><stop offset="0.5" stop-color="#0ff"/><stop offset="0.6667" stop-color="#00f"/><stop offset="0.8333" stop-color="#f0f"/><stop offset="1" stop-color="#f00"/></linearGradient><linearGradient id="wht" x1="0" x2="0" y1="0" y2="1"><stop offset="0" stop-color="#fff" stop-opacity="1"/><stop offset="0.5" stop-color="#fff" stop-opacity="0"/><stop offset="0.5" stop-color="#000" stop-opacity="0"/><stop offset="1" stop-color="#000" stop-opacity="1"/></linearGradient></defs><rect width="250" height="252" fill="url(#hue)"/><rect width="250" height="252" fill="url(#wht)"/></svg>
<div style="position:absolute;left:1736.5px;top:448.6px;width:278px;height:330.19999999999993px;background:#535353"></div>
<div style="position:absolute;left:1736.5px;top:448.6px;width:278px;height:31px;background:#434343"></div>
<div style="position:absolute;left:1736.5px;top:448.6px;width:72.40000000000009px;height:31px;background:#535353"></div>
<div class="t" style="left:1747.0px;top:458.4px;font-size:11.5px;color:#f2f2f2;font-weight:bold;">Swatches</div>
<div style="position:absolute;left:1875px;top:451.6px;width:1px;height:25px;background:#4a4a4a"></div>
<div class="t" style="left:1819.4px;top:458.4px;font-size:11.5px;color:#bcbcbc;font-weight:normal;">Libraries</div>
<svg style="left:1993px;top:458.6px;" width="15" height="12" viewBox="0 0 15 12"><rect x="1" y="1" width="12" height="1.5" fill="#c8c8c8"/><rect x="1" y="5" width="12" height="1.5" fill="#c8c8c8"/><rect x="1" y="9" width="12" height="1.5" fill="#c8c8c8"/></svg>
<div style="position:absolute;left:1755px;top:500.5px;width:21px;height:21px;background:#fff;border:1px solid #222"></div>
<svg style="left:1755px;top:500.5px;" width="21" height="21" viewBox="0 0 21 21"><rect x="6" y="6" width="9" height="9" fill="none" stroke="#333" stroke-width="1.5"/><path d="M1 20 L20 1" stroke="#f00" stroke-width="2.2"/></svg>
<div style="position:absolute;left:1743.7px;top:489px;width:21px;height:20.5px;background:#ff0000;border:1.5px solid #f0f0f0;box-shadow:0 0 0 1px #333"></div>
<div style="position:absolute;left:1952.5px;top:488.3px;width:55px;height:26px;background:#4e4e4e;border:1px solid #5a5a5a;border-radius:3px"></div>
<div style="position:absolute;left:1980.5px;top:489.3px;width:26px;height:24px;background:#333;border-radius:0 3px 3px 0"></div>
<svg style="left:1957px;top:493px;" width="17" height="16" viewBox="0 0 17 16"><rect x="1" y="2" width="14" height="2" fill="#d0d0d0"/><rect x="1" y="7" width="14" height="2" fill="#d0d0d0"/><rect x="1" y="12" width="14" height="2" fill="#d0d0d0"/></svg>
<svg style="left:1985px;top:493px;" width="17" height="17" viewBox="0 0 17 17"><rect x="1.0" y="1.0" width="4" height="4" fill="#f0f0f0"/><rect x="6.2" y="1.0" width="4" height="4" fill="#f0f0f0"/><rect x="11.4" y="1.0" width="4" height="4" fill="#f0f0f0"/><rect x="1.0" y="6.2" width="4" height="4" fill="#f0f0f0"/><rect x="6.2" y="6.2" width="4" height="4" fill="#f0f0f0"/><rect x="11.4" y="6.2" width="4" height="4" fill="#f0f0f0"/><rect x="1.0" y="11.4" width="4" height="4" fill="#f0f0f0"/><rect x="6.2" y="11.4" width="4" height="4" fill="#f0f0f0"/><rect x="11.4" y="11.4" width="4" height="4" fill="#f0f0f0"/></svg>
<div style="position:absolute;left:1743.5px;top:528.3px;width:265px;height:228px;border:1px solid #5c5c5c;border-radius:2px"></div>
<svg style="left:0;top:0" width="2048" height="700"><defs><linearGradient id="g1s"><stop offset="0" stop-color="#fff"/><stop offset="1" stop-color="#000"/></linearGradient><linearGradient id="g2s"><stop offset="0" stop-color="#d8eefc"/><stop offset="1" stop-color="#0070c0"/></linearGradient><radialGradient id="rads"><stop offset="0" stop-color="#fff"/><stop offset="0.35" stop-color="#fbb03b"/><stop offset="1" stop-color="#f15a24"/></radialGradient></defs><rect x="1743.5" y="529" width="15" height="15" fill="#fff"/><path d="M1744.5 543 L1757.5 530" stroke="#f00" stroke-width="1.8"/><rect x="1759.6" y="529" width="15" height="15" fill="#fff"/><circle cx="1767.1" cy="536.5" r="4" fill="none" stroke="#555" stroke-width="1"/><path d="M1767.1 530 V543 M1760.6 536.5 H1773.6" stroke="#555" stroke-width="1"/><rect x="1775.7" y="529" width="15" height="15" fill="#ffffff"/><rect x="1791.8" y="529" width="15" height="15" fill="#000000"/><rect x="1807.9" y="529" width="15" height="15" fill="#fff"/><rect x="1809.4" y="530.5" width="12" height="12" fill="#000"/><rect x="1810.9" y="532" width="9" height="9" fill="#f00"/><rect x="1824.0" y="529" width="15" height="15" fill="#ffff00"/><rect x="1840.1" y="529" width="15" height="15" fill="#00ff00"/><rect x="1856.2" y="529" width="15" height="15" fill="#00ffff"/><rect x="1872.3" y="529" width="15" height="15" fill="#0000ff"/><rect x="1888.4" y="529" width="15" height="15" fill="#ff00ff"/><rect x="1904.5" y="529" width="15" height="15" fill="#c1272d"/><rect x="1920.6" y="529" width="15" height="15" fill="#ed1c24"/><rect x="1936.7" y="529" width="15" height="15" fill="#f15a24"/><rect x="1952.8" y="529" width="15" height="15" fill="#f7931e"/><rect x="1968.9" y="529" width="15" height="15" fill="#fbb03b"/><rect x="1743.5" y="545.1" width="15" height="15" fill="#fcee21"/><rect x="1759.6" y="545.1" width="15" height="15" fill="#d9e021"/><rect x="1775.7" y="545.1" width="15" height="15" fill="#8cc63f"/><rect x="1791.8" y="545.1" width="15" height="15" fill="#39b54a"/><rect x="1807.9" y="545.1" width="15" height="15" fill="#009245"/><rect x="1824.0" y="545.1" width="15" height="15" fill="#006837"/><rect x="1840.1" y="545.1" width="15" height="15" fill="#22b573"/><rect x="1856.2" y="545.1" width="15" height="15" fill="#00a99d"/><rect x="1872.3" y="545.1" width="15" height="15" fill="#29abe2"/><rect x="1888.4" y="545.1" width="15" height="15" fill="#0071bc"/><rect x="1904.5" y="545.1" width="15" height="15" fill="#2e3192"/><rect x="1920.6" y="545.1" width="15" height="15" fill="#1b1464"/><rect x="1936.7" y="545.1" width="15" height="15" fill="#662d91"/><rect x="1952.8" y="545.1" width="15" height="15" fill="#93278f"/><rect x="1968.9" y="545.1" width="15" height="15" fill="#9e005d"/><rect x="1743.5" y="561.2" width="15" height="15" fill="#d4145a"/><rect x="1759.6" y="561.2" width="15" height="15" fill="#ed1e79"/><rect x="1775.7" y="561.2" width="15" height="15" fill="#c7b299"/><rect x="1791.8" y="561.2" width="15" height="15" fill="#998675"/><rect x="1807.9" y="561.2" width="15" height="15" fill="#736357"/><rect x="1824.0" y="561.2" width="15" height="15" fill="#534741"/><rect x="1840.1" y="561.2" width="15" height="15" fill="#c69c6d"/><rect x="1856.2" y="561.2" width="15" height="15" fill="#a67c52"/><rect x="1872.3" y="561.2" width="15" height="15" fill="#8c6239"/><rect x="1888.4" y="561.2" width="15" height="15" fill="#754c24"/><rect x="1904.5" y="561.2" width="15" height="15" fill="#603813"/><rect x="1920.6" y="561.2" width="15" height="15" fill="#42210b"/><rect x="1936.7" y="561.2" width="15" height="15" fill="url(#g1s)"/><rect x="1952.8" y="561.2" width="15" height="15" fill="url(#g2s)"/><rect x="1968.9" y="561.2" width="15" height="15" fill="#f7a8c8"/><rect x="1976.9" y="561.2" width="7" height="15" fill="#fbe0ea"/><rect x="1743.5" y="577.3" width="15" height="15" fill="url(#rads)"/><rect x="1759.6" y="577.3" width="15" height="15" fill="#fff"/><circle cx="1767.1" cy="584.8" r="6.5" fill="#ddd" stroke="#e0c040" stroke-width="1"/><rect x="1775.7" y="577.3" width="15" height="15" fill="#3a7ab8"/><circle cx="1780.7" cy="583.3" r="3" fill="#8fc0e8"/><circle cx="1786.7" cy="587.3" r="3" fill="#1e5a98"/><rect x="1791.8" y="577.3" width="15" height="15" fill="#b8d8a8"/><circle cx="1796.8" cy="583.3" r="3" fill="#e8e0a0"/><circle cx="1802.8" cy="587.3" r="3" fill="#78b8c8"/><path d="M1744.5 598.9 H1749.5 L1751.5 600.9 H1757.5 V608.9 H1744.5 Z" fill="#c8c8c8"/><rect x="1759.6" y="595.9" width="15" height="15" fill="#000000"/><rect x="1775.7" y="595.9" width="15" height="15" fill="#1a1a1a"/><rect x="1791.8" y="595.9" width="15" height="15" fill="#333333"/><rect x="1807.9" y="595.9" width="15" height="15" fill="#4d4d4d"/><rect x="1824.0" y="595.9" width="15" height="15" fill="#666666"/><rect x="1840.1" y="595.9" width="15" height="15" fill="#808080"/><rect x="1856.2" y="595.9" width="15" height="15" fill="#999999"/><rect x="1872.3" y="595.9" width="15" height="15" fill="#b3b3b3"/><rect x="1888.4" y="595.9" width="15" height="15" fill="#cccccc"/><rect x="1904.5" y="595.9" width="15" height="15" fill="#e6e6e6"/><rect x="1920.6" y="595.9" width="15" height="15" fill="#f2f2f2"/><path d="M1744.5 617.7 H1749.5 L1751.5 619.7 H1757.5 V627.7 H1744.5 Z" fill="#c8c8c8"/><rect x="1759.6" y="614.7" width="15" height="15" fill="#3fa9f5"/><rect x="1775.7" y="614.7" width="15" height="15" fill="#7ac943"/><rect x="1791.8" y="614.7" width="15" height="15" fill="#ff931e"/><rect x="1807.9" y="614.7" width="15" height="15" fill="#ff1d25"/><rect x="1824.0" y="614.7" width="15" height="15" fill="#ff7bac"/><rect x="1840.1" y="614.7" width="15" height="15" fill="#bdccd4"/></svg>
<svg style="left:1748px;top:759px;" width="20" height="16" viewBox="0 0 20 16"><rect x="1" y="2" width="2" height="12" fill="#c0c0c0"/><rect x="5" y="2" width="2" height="12" fill="#c0c0c0"/><path d="M9 2 L11 2 L15 14 L13 14 Z" fill="#c0c0c0"/><path d="M16 12 L19 12 L17.5 14 Z" fill="#c0c0c0"/></svg>
<svg style="left:1778px;top:759px;" width="18" height="17" viewBox="0 0 18 17"><rect x="4" y="1" width="12" height="12" fill="none" stroke="#c0c0c0" stroke-width="1.3"/><path d="M1 10 H9 M6 7 L9 10 L6 13" stroke="#c0c0c0" stroke-width="1.5" fill="none"/></svg>
<svg style="left:1846px;top:759px;" width="20" height="16" viewBox="0 0 20 16"><rect x="1.0" y="1.0" width="3.5" height="3.5" fill="#c0c0c0"/><rect x="5.5" y="1.0" width="3.5" height="3.5" fill="#c0c0c0"/><rect x="10.0" y="1.0" width="3.5" height="3.5" fill="#c0c0c0"/><rect x="1.0" y="5.5" width="3.5" height="3.5" fill="#c0c0c0"/><rect x="5.5" y="5.5" width="3.5" height="3.5" fill="#c0c0c0"/><rect x="10.0" y="5.5" width="3.5" height="3.5" fill="#c0c0c0"/><rect x="1.0" y="10.0" width="3.5" height="3.5" fill="#c0c0c0"/><rect x="5.5" y="10.0" width="3.5" height="3.5" fill="#c0c0c0"/><rect x="10.0" y="10.0" width="3.5" height="3.5" fill="#c0c0c0"/><path d="M15 12 L19 12 L17 14.5 Z" fill="#c0c0c0"/></svg>
<svg style="left:1877px;top:759px;" width="16" height="16" viewBox="0 0 16 16"><rect x="1" y="1" width="13" height="13" fill="none" stroke="#c0c0c0" stroke-width="1.3"/><path d="M4 6 H11 M4 8.5 H11 M4 11 H11" stroke="#c0c0c0" stroke-width="1"/></svg>
<svg style="left:1906px;top:759px;" width="18" height="16" viewBox="0 0 18 16"><path d="M1 3 H7 L9 5 H17 V14 H1 Z" fill="#c0c0c0"/></svg>
<svg style="left:1938px;top:759px;" width="16" height="16" viewBox="0 0 16 16"><rect x="1" y="1" width="13" height="13" fill="none" stroke="#c0c0c0" stroke-width="1.3"/><path d="M7.5 4 V11 M4 7.5 H11" stroke="#c0c0c0" stroke-width="1.4"/></svg>
<svg style="left:1967px;top:758px;" width="16" height="18" viewBox="0 0 16 18"><path d="M2 4 H14 M6 4 V2 H10 V4" stroke="#c0c0c0" stroke-width="1.3" fill="none"/><path d="M3 5 H13 L12 17 H4 Z" fill="none" stroke="#c0c0c0" stroke-width="1.3"/><path d="M6 7.5 V15 M10 7.5 V15" stroke="#c0c0c0" stroke-width="1"/></svg>
<div style="position:absolute;left:1736.5px;top:782.5px;width:278px;height:79.70000000000005px;background:#535353"></div>
<div style="position:absolute;left:1736.5px;top:782.5px;width:278px;height:31px;background:#434343"></div>
<div style="position:absolute;left:1736.5px;top:782.5px;width:92.5px;height:31px;background:#535353"></div>
<svg style="left:1742.5px;top:791.5px;" width="8" height="14" viewBox="0 0 8 14"><path d="M1 5 L4 1.5 L7 5 M1 9 L4 12.5 L7 9" fill="none" stroke="#b0b0b0" stroke-width="1.2"/></svg>
<div class="t" style="left:1754.0px;top:792.3px;font-size:11.5px;color:#f2f2f2;font-weight:bold;">Color Guide</div>
<svg style="left:1993px;top:792.5px;" width="15" height="12" viewBox="0 0 15 12"><rect x="1" y="1" width="12" height="1.5" fill="#c8c8c8"/><rect x="1" y="5" width="12" height="1.5" fill="#c8c8c8"/><rect x="1" y="9" width="12" height="1.5" fill="#c8c8c8"/></svg>
<div style="position:absolute;left:1742.8px;top:823.2px;width:24px;height:23.5px;background:#000;border-radius:2px"></div>
<div style="position:absolute;left:1744.3px;top:824.7px;width:21px;height:20.5px;background:#fff"></div>
<div style="position:absolute;left:1746.5px;top:827px;width:16.5px;height:16px;background:#f00;border:1px solid #000"></div>
<div style="position:absolute;left:1773.7px;top:822px;width:145px;height:28px;background:#4a4a4a;border:1px solid #464646;border-radius:3px"></div>
<div style="position:absolute;left:1898.4px;top:822px;width:1px;height:28px;background:#444"></div>
<div style="position:absolute;left:1776.9px;top:826.3px;width:19px;height:18.5px;background:#fff"></div>
<div style="position:absolute;left:1778.5px;top:828px;width:16px;height:15px;background:#c1272d;border:1px solid #000"></div>
<div style="position:absolute;left:1795.7px;top:826.3px;width:18.4px;height:18.5px;background:#7a0d12"></div>
<div style="position:absolute;left:1814.1px;top:826.3px;width:18.5px;height:18.5px;background:#786010"></div>
<div style="position:absolute;left:1832.6px;top:826.3px;width:18.4px;height:18.5px;background:#52cc6e"></div>
<div style="position:absolute;left:1851px;top:826.3px;width:18.4px;height:18.5px;background:#2e3078"></div>
<svg style="left:1902.0px;top:831.25px;" width="13.0" height="8.5" viewBox="0 0 13.0 8.5"><path d="M2 2 L6.5 6.5 L11.0 2" fill="none" stroke="#d0d0d0" stroke-width="1.6"/></svg>
<svg style="left:1930px;top:825px;" width="22" height="22" viewBox="0 0 22 22"><circle cx="11" cy="11" r="9" fill="#bcbcbc" stroke="#ddd" stroke-width="1"/><circle cx="11" cy="11" r="3" fill="#777"/><path d="M11 2 V8 M19 11 H14 M11 20 V14 M3 11 H8 M5 5 L9 9 M17 17 L13 13" stroke="#8a8a8a" stroke-width="1.5"/></svg>
<svg style="left:1960px;top:827px;" width="22" height="18" viewBox="0 0 22 18"><rect x="8" y="2" width="11" height="11" fill="none" stroke="#cdcdcd" stroke-width="1.4"/><path d="M12 2 V13 M15.5 2 V13" stroke="#cdcdcd" stroke-width="1.2"/><path d="M1 13 H7 M4 10 V16" stroke="#cdcdcd" stroke-width="1.8"/></svg>
<div style="position:absolute;left:1736.5px;top:866px;width:278px;height:249.9000000000001px;background:#535353"></div>
<div style="position:absolute;left:1736.5px;top:866px;width:278px;height:31px;background:#434343"></div>
<div style="position:absolute;left:1799px;top:869px;width:1px;height:25px;background:#4a4a4a"></div>
<div class="t" style="left:1747.0px;top:875.8px;font-size:11.5px;color:#bcbcbc;font-weight:normal;">Brushes</div>
<div style="position:absolute;left:1800px;top:866px;width:64px;height:31px;background:#535353"></div>
<svg style="left:1806px;top:875px;" width="8" height="14" viewBox="0 0 8 14"><path d="M1 5 L4 1.5 L7 5 M1 9 L4 12.5 L7 9" fill="none" stroke="#b0b0b0" stroke-width="1.2"/></svg>
<div class="t" style="left:1817.5px;top:875.8px;font-size:11.5px;color:#f2f2f2;font-weight:bold;">Stroke</div>
<div style="position:absolute;left:1929px;top:869px;width:1px;height:25px;background:#4a4a4a"></div>
<div class="t" style="left:1874.5px;top:875.8px;font-size:11.5px;color:#bcbcbc;font-weight:normal;">Symbols</div>
<svg style="left:1993px;top:876px;" width="15" height="12" viewBox="0 0 15 12"><rect x="1" y="1" width="12" height="1.5" fill="#c8c8c8"/><rect x="1" y="5" width="12" height="1.5" fill="#c8c8c8"/><rect x="1" y="9" width="12" height="1.5" fill="#c8c8c8"/></svg>
<div class="t" style="left:1407.7px;width:400px;text-align:right;top:910.8px;font-size:11.5px;color:#d2d2d2;font-weight:normal;">Weight:</div>
<div style="position:absolute;left:1812.4px;top:904.8px;width:100px;height:22.5px;background:#4a4a4a;border:1px solid #444;border-radius:3px"></div>
<div style="position:absolute;left:1833px;top:905.8px;width:59px;height:20.5px;background:#434343"></div>
<svg style="left:1815px;top:906px;" width="16" height="20" viewBox="0 0 16 20"><path d="M4 7 L8 3 L12 7 M4 13 L8 17 L12 13" fill="none" stroke="#d0d0d0" stroke-width="1.5"/></svg>
<svg style="left:1896px;top:912.0px;" width="12" height="8" viewBox="0 0 12 8"><path d="M2 2 L6 6 L10 2" fill="none" stroke="#d0d0d0" stroke-width="1.6"/></svg>
<div class="t" style="left:1407.7px;width:400px;text-align:right;top:941.8px;font-size:11.5px;color:#7c7c7c;font-weight:normal;">Cap:</div>
<div style="position:absolute;left:1812.4px;top:934.7px;width:77.5px;height:23.5px;border:1px solid #4b4b4b;border-radius:3px"></div>
<div style="position:absolute;left:1838px;top:934.7px;width:1px;height:23.5px;background:#4b4b4b"></div>
<div style="position:absolute;left:1864px;top:934.7px;width:1px;height:23.5px;background:#4b4b4b"></div>
<svg style="left:1818px;top:939px;" width="16" height="15" viewBox="0 0 16 15"><rect x="5" y="1" width="9" height="13" fill="#7c7c7c"/><circle cx="4" cy="7.5" r="2" fill="none" stroke="#7c7c7c"/></svg>
<svg style="left:1844px;top:939px;" width="16" height="15" viewBox="0 0 16 15"><path d="M14 1 H7 A6.5 6.5 0 0 0 7 14 H14 V10 H8 V5 H14 Z" fill="#7c7c7c"/></svg>
<svg style="left:1870px;top:939px;" width="16" height="15" viewBox="0 0 16 15"><path d="M1 1 H14 V14 H1 Z M5 5 V10 H14 V5 Z" fill="#7c7c7c" fill-rule="evenodd"/></svg>
<div class="t" style="left:1407.7px;width:400px;text-align:right;top:973.3px;font-size:11.5px;color:#7c7c7c;font-weight:normal;">Corner:</div>
<div style="position:absolute;left:1812.4px;top:966.2px;width:77.5px;height:23.5px;border:1px solid #4b4b4b;border-radius:3px"></div>
<div style="position:absolute;left:1838px;top:966.2px;width:1px;height:23.5px;background:#4b4b4b"></div>
<div style="position:absolute;left:1864px;top:966.2px;width:1px;height:23.5px;background:#4b4b4b"></div>
<svg style="left:1818px;top:970px;" width="16" height="16" viewBox="0 0 16 16"><path d="M1 1 H14 V6 H6 V15 H1 Z" fill="#7c7c7c"/><rect x="8" y="8" width="6" height="3" fill="#7c7c7c"/><rect x="8" y="8" width="3" height="7" fill="#7c7c7c"/></svg>
<svg style="left:1844px;top:970px;" width="16" height="16" viewBox="0 0 16 16"><path d="M8 1 H14 V6 H8 A2 2 0 0 0 6 8 V15 H1 V8 A7 7 0 0 1 8 1 Z" fill="#7c7c7c"/><rect x="8" y="8" width="6" height="3" fill="#7c7c7c"/><rect x="8" y="8" width="3" height="7" fill="#7c7c7c"/></svg>
<svg style="left:1870px;top:970px;" width="16" height="16" viewBox="0 0 16 16"><path d="M6 1 H14 V6 H8 L6 8 V15 H1 V6 Z" fill="#7c7c7c"/><rect x="8" y="8" width="6" height="3" fill="#7c7c7c"/><rect x="8" y="8" width="3" height="7" fill="#7c7c7c"/></svg>
<div class="t" style="left:1922.0px;top:973.3px;font-size:11.5px;color:#7c7c7c;font-weight:normal;">Limit:</div>
<div style="position:absolute;left:1954.9px;top:966px;width:43.5px;height:23px;background:#5a5a5a;border-radius:2px"></div>
<div class="t" style="left:2002.0px;top:973.7px;font-size:11px;color:#7c7c7c;font-weight:normal;">x</div>
<div class="t" style="left:1407.7px;width:400px;text-align:right;top:1004.3px;font-size:11.5px;color:#7c7c7c;font-weight:normal;">Align Stroke:</div>
<div style="position:absolute;left:1812.4px;top:997.7px;width:77.5px;height:23.5px;border:1px solid #4b4b4b;border-radius:3px"></div>
<div style="position:absolute;left:1838px;top:997.7px;width:1px;height:23.5px;background:#4b4b4b"></div>
<div style="position:absolute;left:1864px;top:997.7px;width:1px;height:23.5px;background:#4b4b4b"></div>
<svg style="left:1818px;top:1001px;" width="16" height="16" viewBox="0 0 16 16"><rect x="1" y="1" width="2" height="14" fill="#7c7c7c"/><rect x="1" y="13" width="14" height="2" fill="#7c7c7c"/><rect x="5" y="3" width="3" height="8" fill="#7c7c7c"/><rect x="5" y="8" width="9" height="3" fill="#7c7c7c"/></svg>
<svg style="left:1844px;top:1001px;" width="16" height="16" viewBox="0 0 16 16"><rect x="5" y="1" width="3" height="10" fill="#7c7c7c"/><rect x="5" y="8" width="9" height="3" fill="#7c7c7c"/><path d="M1 3 V15 H14" stroke="#7c7c7c" fill="none"/></svg>
<svg style="left:1870px;top:1001px;" width="16" height="16" viewBox="0 0 16 16"><rect x="1" y="1" width="13" height="13" fill="#7c7c7c"/><path d="M5 1 V9 H14" stroke="#535353" stroke-width="1" fill="none"/></svg>
<div style="position:absolute;left:1743px;top:1028.5px;width:265px;height:1px;background:#4a4a4a"></div>
<div style="position:absolute;left:1743.4px;top:1040.7px;width:14px;height:14px;background:#d6d6d6;border-radius:2px"></div>
<div style="position:absolute;left:1746.5px;top:1046.5px;width:8px;height:2.5px;background:#535353"></div>
<div class="t" style="left:1763.0px;top:1042.8px;font-size:11.5px;color:#f0f0f0;font-weight:normal;">Dashed Line</div>
<div style="position:absolute;left:1919.5px;top:1036.6px;width:88.5px;height:23.5px;border:1px solid #4b4b4b;border-radius:3px"></div>
<div style="position:absolute;left:1963.5px;top:1036.6px;width:1px;height:23.5px;background:#4b4b4b"></div>
<svg style="left:1924px;top:1041px;" width="36" height="16" viewBox="0 0 36 16"><path d="M2 2 H34 V8 M34 14 H2 V8" fill="none" stroke="#7c7c7c" stroke-width="1.6" stroke-dasharray="7 3"/></svg>
<svg style="left:1968px;top:1041px;" width="36" height="16" viewBox="0 0 36 16"><path d="M2 2 H34 V14 H2 Z" fill="none" stroke="#7c7c7c" stroke-width="1.6" stroke-dasharray="5 4"/></svg>
<div style="position:absolute;left:1744.0px;top:1067.3px;width:39px;height:23.5px;background:#575757;border-radius:2px"></div>
<div class="t" style="left:1563.5px;width:400px;text-align:center;top:1095.7px;font-size:11px;color:#707070;font-weight:normal;">dash</div>
<div style="position:absolute;left:1788.5px;top:1067.3px;width:39px;height:23.5px;background:#575757;border-radius:2px"></div>
<div class="t" style="left:1608.0px;width:400px;text-align:center;top:1095.7px;font-size:11px;color:#707070;font-weight:normal;">gap</div>
<div style="position:absolute;left:1833.0px;top:1067.3px;width:39px;height:23.5px;background:#575757;border-radius:2px"></div>
<div class="t" style="left:1652.5px;width:400px;text-align:center;top:1095.7px;font-size:11px;color:#707070;font-weight:normal;">dash</div>
<div style="position:absolute;left:1877.5px;top:1067.3px;width:39px;height:23.5px;background:#575757;border-radius:2px"></div>
<div class="t" style="left:1697.0px;width:400px;text-align:center;top:1095.7px;font-size:11px;color:#707070;font-weight:normal;">gap</div>
<div style="position:absolute;left:1922.0px;top:1067.3px;width:39px;height:23.5px;background:#575757;border-radius:2px"></div>
<div class="t" style="left:1741.5px;width:400px;text-align:center;top:1095.7px;font-size:11px;color:#707070;font-weight:normal;">dash</div>
<div style="position:absolute;left:1966.5px;top:1067.3px;width:39px;height:23.5px;background:#575757;border-radius:2px"></div>
<div class="t" style="left:1786.0px;width:400px;text-align:center;top:1095.7px;font-size:11px;color:#707070;font-weight:normal;">gap</div>
<div style="position:absolute;left:1736.5px;top:1118.7px;width:278px;height:328.79999999999995px;background:#535353"></div>
<div style="position:absolute;left:1736.5px;top:1118.7px;width:278px;height:31px;background:#434343"></div>
<div style="position:absolute;left:1736.5px;top:1118.7px;width:54.299999999999955px;height:31px;background:#535353"></div>
<div class="t" style="left:1747.0px;top:1128.5px;font-size:11.5px;color:#f2f2f2;font-weight:normal;">Layers</div>
<svg style="left:1993px;top:1128.7px;" width="15" height="12" viewBox="0 0 15 12"><rect x="1" y="1" width="12" height="1.5" fill="#c8c8c8"/><rect x="1" y="5" width="12" height="1.5" fill="#c8c8c8"/><rect x="1" y="9" width="12" height="1.5" fill="#c8c8c8"/></svg>
<div style="position:absolute;left:1743.2px;top:1157.4px;width:264px;height:266.5px;border:1px solid #4e4e4e;border-radius:2px"></div>
<div style="position:absolute;left:1744px;top:1182.0px;width:263px;height:1px;background:#4a4a4a"></div>
<div style="position:absolute;left:1767px;top:1158.5px;width:1px;height:23.5px;background:#4a4a4a"></div>
<div style="position:absolute;left:1791px;top:1158.5px;width:1px;height:23.5px;background:#4a4a4a"></div>
<div style="position:absolute;left:1798px;top:1158.5px;width:1px;height:23.5px;background:#4a4a4a"></div>
<div style="position:absolute;left:1966.5px;top:1158.5px;width:1px;height:23.5px;background:#4a4a4a"></div>
<svg style="left:1746px;top:1164.5px;" width="17" height="12" viewBox="0 0 17 12"><path d="M1 6 Q8 -1 16 6 Q8 13 1 6 Z" fill="#bdbdbd"/><circle cx="8.5" cy="6" r="2.6" fill="#535353"/><path d="M8.5 3.5 V8.5" stroke="#bdbdbd" stroke-width="1"/></svg>
<div style="position:absolute;left:1793px;top:1160.0px;width:4px;height:21px;background:#ff4cff"></div>
<svg style="left:1804px;top:1164.5px;" width="9" height="12" viewBox="0 0 9 12"><path d="M2 1 L7 6 L2 11" fill="none" stroke="#d8d8d8" stroke-width="1.6"/></svg>
<div style="position:absolute;left:1827px;top:1161.0px;width:21px;height:20.5px;background:#fff;border:1px solid #111"></div>
<div class="t" style="left:1853.0px;top:1165.3px;font-size:11.5px;color:#e6e6e6;font-weight:normal;">Current Build</div>
<svg style="left:1972px;top:1164.5px;" width="12" height="12" viewBox="0 0 12 12"><circle cx="6" cy="6" r="4.5" fill="none" stroke="#d0d0d0" stroke-width="1.2"/></svg>
<div style="position:absolute;left:1744px;top:1206.25px;width:263px;height:1px;background:#4a4a4a"></div>
<div style="position:absolute;left:1767px;top:1182.75px;width:1px;height:23.5px;background:#4a4a4a"></div>
<div style="position:absolute;left:1791px;top:1182.75px;width:1px;height:23.5px;background:#4a4a4a"></div>
<div style="position:absolute;left:1798px;top:1182.75px;width:1px;height:23.5px;background:#4a4a4a"></div>
<div style="position:absolute;left:1966.5px;top:1182.75px;width:1px;height:23.5px;background:#4a4a4a"></div>
<svg style="left:1746px;top:1188.75px;" width="17" height="12" viewBox="0 0 17 12"><path d="M1 6 Q8 -1 16 6 Q8 13 1 6 Z" fill="#bdbdbd"/><circle cx="8.5" cy="6" r="2.6" fill="#535353"/><path d="M8.5 3.5 V8.5" stroke="#bdbdbd" stroke-width="1"/></svg>
<div style="position:absolute;left:1793px;top:1184.25px;width:4px;height:21px;background:#808080"></div>
<svg style="left:1804px;top:1188.75px;" width="9" height="12" viewBox="0 0 9 12"><path d="M2 1 L7 6 L2 11" fill="none" stroke="#d8d8d8" stroke-width="1.6"/></svg>
<div style="position:absolute;left:1827px;top:1185.25px;width:21px;height:20.5px;background:#fff;border:1px solid #111"></div>
<div class="t" style="left:1853.0px;top:1189.5px;font-size:11.5px;color:#e6e6e6;font-weight:normal;">Lockups</div>
<svg style="left:1972px;top:1188.75px;" width="12" height="12" viewBox="0 0 12 12"><circle cx="6" cy="6" r="4.5" fill="none" stroke="#d0d0d0" stroke-width="1.2"/></svg>
<div style="position:absolute;left:1744px;top:1230.5px;width:263px;height:1px;background:#4a4a4a"></div>
<div style="position:absolute;left:1767px;top:1207.0px;width:1px;height:23.5px;background:#4a4a4a"></div>
<div style="position:absolute;left:1791px;top:1207.0px;width:1px;height:23.5px;background:#4a4a4a"></div>
<div style="position:absolute;left:1798px;top:1207.0px;width:1px;height:23.5px;background:#4a4a4a"></div>
<div style="position:absolute;left:1966.5px;top:1207.0px;width:1px;height:23.5px;background:#4a4a4a"></div>
<svg style="left:1746px;top:1213.0px;" width="17" height="12" viewBox="0 0 17 12"><path d="M1 6 Q8 -1 16 6 Q8 13 1 6 Z" fill="#bdbdbd"/><circle cx="8.5" cy="6" r="2.6" fill="#535353"/><path d="M8.5 3.5 V8.5" stroke="#bdbdbd" stroke-width="1"/></svg>
<div style="position:absolute;left:1793px;top:1208.5px;width:4px;height:21px;background:#4f4fff"></div>
<svg style="left:1804px;top:1213.0px;" width="9" height="12" viewBox="0 0 9 12"><path d="M2 1 L7 6 L2 11" fill="none" stroke="#d8d8d8" stroke-width="1.6"/></svg>
<div style="position:absolute;left:1827px;top:1209.5px;width:21px;height:20.5px;background:#fff;border:1px solid #111"></div>
<div class="t" style="left:1853.0px;top:1213.8px;font-size:11.5px;color:#e6e6e6;font-weight:normal;">Parts</div>
<svg style="left:1972px;top:1213.0px;" width="12" height="12" viewBox="0 0 12 12"><circle cx="6" cy="6" r="4.5" fill="none" stroke="#d0d0d0" stroke-width="1.2"/></svg>
<div style="position:absolute;left:1744px;top:1254.75px;width:263px;height:1px;background:#4a4a4a"></div>
<div style="position:absolute;left:1767px;top:1231.25px;width:1px;height:23.5px;background:#4a4a4a"></div>
<div style="position:absolute;left:1791px;top:1231.25px;width:1px;height:23.5px;background:#4a4a4a"></div>
<div style="position:absolute;left:1798px;top:1231.25px;width:1px;height:23.5px;background:#4a4a4a"></div>
<div style="position:absolute;left:1966.5px;top:1231.25px;width:1px;height:23.5px;background:#4a4a4a"></div>
<svg style="left:1746px;top:1237.25px;" width="17" height="12" viewBox="0 0 17 12"><path d="M1 6 Q8 -1 16 6 Q8 13 1 6 Z" fill="#bdbdbd"/><circle cx="8.5" cy="6" r="2.6" fill="#535353"/><path d="M8.5 3.5 V8.5" stroke="#bdbdbd" stroke-width="1"/></svg>
<div style="position:absolute;left:1793px;top:1232.75px;width:4px;height:21px;background:#4fff4f"></div>
<svg style="left:1804px;top:1237.25px;" width="9" height="12" viewBox="0 0 9 12"><path d="M2 1 L7 6 L2 11" fill="none" stroke="#d8d8d8" stroke-width="1.6"/></svg>
<div style="position:absolute;left:1827px;top:1233.75px;width:21px;height:20.5px;background:#fff;border:1px solid #111"></div>
<div class="t" style="left:1853.0px;top:1238.0px;font-size:11.5px;color:#e6e6e6;font-weight:normal;">Versions B</div>
<svg style="left:1972px;top:1237.25px;" width="12" height="12" viewBox="0 0 12 12"><circle cx="6" cy="6" r="4.5" fill="none" stroke="#d0d0d0" stroke-width="1.2"/></svg>
<div style="position:absolute;left:1744px;top:1255.5px;width:263px;height:22.5px;background:#4b6584"></div>
<svg style="left:1997px;top:1256.0px;" width="9" height="9" viewBox="0 0 9 9"><path d="M0 0 H9 V9 Z" fill="#e6e6e6"/></svg>
<div style="position:absolute;left:1744px;top:1279.0px;width:263px;height:1px;background:#4a4a4a"></div>
<div style="position:absolute;left:1767px;top:1255.5px;width:1px;height:23.5px;background:#4a4a4a"></div>
<div style="position:absolute;left:1791px;top:1255.5px;width:1px;height:23.5px;background:#4a4a4a"></div>
<div style="position:absolute;left:1798px;top:1255.5px;width:1px;height:23.5px;background:#4a4a4a"></div>
<div style="position:absolute;left:1966.5px;top:1255.5px;width:1px;height:23.5px;background:#4a4a4a"></div>
<svg style="left:1746px;top:1261.5px;" width="17" height="12" viewBox="0 0 17 12"><path d="M1 6 Q8 -1 16 6 Q8 13 1 6 Z" fill="#bdbdbd"/><circle cx="8.5" cy="6" r="2.6" fill="#535353"/><path d="M8.5 3.5 V8.5" stroke="#bdbdbd" stroke-width="1"/></svg>
<div style="position:absolute;left:1793px;top:1257.0px;width:4px;height:21px;background:#ff4f4f"></div>
<svg style="left:1804px;top:1261.5px;" width="9" height="12" viewBox="0 0 9 12"><path d="M2 1 L7 6 L2 11" fill="none" stroke="#d8d8d8" stroke-width="1.6"/></svg>
<div style="position:absolute;left:1827px;top:1258.0px;width:21px;height:20.5px;background:#fff;border:1px solid #111"></div>
<div class="t" style="left:1853.0px;top:1262.3px;font-size:11.5px;color:#e6e6e6;font-weight:normal;">Versions A</div>
<svg style="left:1972px;top:1261.5px;" width="12" height="12" viewBox="0 0 12 12"><circle cx="6" cy="6" r="4.5" fill="none" stroke="#d0d0d0" stroke-width="1.2"/></svg>
<div style="position:absolute;left:1744px;top:1303.25px;width:263px;height:1px;background:#4a4a4a"></div>
<div style="position:absolute;left:1767px;top:1279.75px;width:1px;height:23.5px;background:#4a4a4a"></div>
<div style="position:absolute;left:1791px;top:1279.75px;width:1px;height:23.5px;background:#4a4a4a"></div>
<div style="position:absolute;left:1798px;top:1279.75px;width:1px;height:23.5px;background:#4a4a4a"></div>
<div style="position:absolute;left:1966.5px;top:1279.75px;width:1px;height:23.5px;background:#4a4a4a"></div>
<svg style="left:1746px;top:1285.75px;" width="17" height="12" viewBox="0 0 17 12"><path d="M1 6 Q8 -1 16 6 Q8 13 1 6 Z" fill="#bdbdbd"/><circle cx="8.5" cy="6" r="2.6" fill="#535353"/><path d="M8.5 3.5 V8.5" stroke="#bdbdbd" stroke-width="1"/></svg>
<div style="position:absolute;left:1793px;top:1281.25px;width:4px;height:21px;background:#4fffff"></div>
<svg style="left:1804px;top:1285.75px;" width="9" height="12" viewBox="0 0 9 12"><path d="M2 1 L7 6 L2 11" fill="none" stroke="#d8d8d8" stroke-width="1.6"/></svg>
<div style="position:absolute;left:1827px;top:1282.25px;width:21px;height:20.5px;background:#fff;border:1px solid #111"></div>
<div class="t" style="left:1853.0px;top:1286.5px;font-size:11.5px;color:#e6e6e6;font-weight:normal;">Guides</div>
<svg style="left:1972px;top:1285.75px;" width="12" height="12" viewBox="0 0 12 12"><circle cx="6" cy="6" r="4.5" fill="none" stroke="#d0d0d0" stroke-width="1.2"/></svg>
<div style="position:absolute;left:1744px;top:1327.5px;width:263px;height:1px;background:#4a4a4a"></div>
<div style="position:absolute;left:1767px;top:1304.0px;width:1px;height:23.5px;background:#4a4a4a"></div>
<div style="position:absolute;left:1791px;top:1304.0px;width:1px;height:23.5px;background:#4a4a4a"></div>
<div style="position:absolute;left:1798px;top:1304.0px;width:1px;height:23.5px;background:#4a4a4a"></div>
<div style="position:absolute;left:1966.5px;top:1304.0px;width:1px;height:23.5px;background:#4a4a4a"></div>
<svg style="left:1746px;top:1310.0px;" width="17" height="12" viewBox="0 0 17 12"><path d="M1 6 Q8 -1 16 6 Q8 13 1 6 Z" fill="#bdbdbd"/><circle cx="8.5" cy="6" r="2.6" fill="#535353"/><path d="M8.5 3.5 V8.5" stroke="#bdbdbd" stroke-width="1"/></svg>
<svg style="left:1773px;top:1308.0px;" width="12" height="15" viewBox="0 0 12 15"><path d="M2 7 V4.5 A4 4 0 0 1 10 4.5 V7" fill="none" stroke="#bdbdbd" stroke-width="1.6"/><rect x="1" y="7" width="10" height="7" fill="#bdbdbd"/></svg>
<div style="position:absolute;left:1793px;top:1305.5px;width:4px;height:21px;background:#4f80ff"></div>
<svg style="left:1804px;top:1310.0px;" width="9" height="12" viewBox="0 0 9 12"><path d="M2 1 L7 6 L2 11" fill="none" stroke="#d8d8d8" stroke-width="1.6"/></svg>
<div style="position:absolute;left:1827px;top:1306.5px;width:21px;height:20.5px;background:#fff;border:1px solid #111"></div>
<div class="t" style="left:1853.0px;top:1310.8px;font-size:11.5px;color:#e6e6e6;font-weight:normal;">BACKGROU...</div>
<svg style="left:1972px;top:1310.0px;" width="12" height="12" viewBox="0 0 12 12"><circle cx="6" cy="6" r="4.5" fill="none" stroke="#d0d0d0" stroke-width="1.2"/></svg>
<svg style="left:1828px;top:1162px;" width="19" height="19" viewBox="0 0 19 19"><path d="M8 8 H17" stroke="#c33" stroke-width="1" stroke-dasharray="2 1"/><circle cx="6" cy="13" r="1.2" fill="#c33"/></svg>
<svg style="left:1828px;top:1186px;" width="19" height="19" viewBox="0 0 19 19"><circle cx="2.0" cy="5.0" r="1.1" fill="#d33"/><circle cx="5.3" cy="5.0" r="1.1" fill="#d33"/><circle cx="8.6" cy="5.0" r="1.1" fill="#99f"/><circle cx="11.899999999999999" cy="5.0" r="1.1" fill="#333"/><circle cx="15.2" cy="5.0" r="1.1" fill="#3c3"/><circle cx="2.0" cy="8.5" r="1.1" fill="#d33"/><circle cx="5.3" cy="8.5" r="1.1" fill="#d33"/><circle cx="8.6" cy="8.5" r="1.1" fill="#99f"/><circle cx="11.899999999999999" cy="8.5" r="1.1" fill="#333"/><circle cx="15.2" cy="8.5" r="1.1" fill="#3c3"/></svg>
<svg style="left:1828px;top:1210px;" width="19" height="19" viewBox="0 0 19 19"><rect x="10" y="1" width="4" height="11" fill="#d55"/><path d="M4 13 A5 4 0 0 0 14 15" fill="none" stroke="#d55" stroke-width="1"/></svg>
<svg style="left:1828px;top:1234px;" width="19" height="19" viewBox="0 0 19 19"><path d="M3 3.0 l2.5 4 h-5 Z" fill="#c33"/><path d="M9 3.0 l2.5 4 h-5 Z" fill="#c33"/><path d="M15 3.0 l2.5 4 h-5 Z" fill="#c33"/><path d="M3 8.5 l2.5 4 h-5 Z" fill="#c33"/><path d="M9 8.5 l2.5 4 h-5 Z" fill="#c33"/><path d="M15 8.5 l2.5 4 h-5 Z" fill="#c33"/><path d="M3 14.0 l2.5 4 h-5 Z" fill="#c33"/><path d="M9 14.0 l2.5 4 h-5 Z" fill="#c33"/><path d="M15 14.0 l2.5 4 h-5 Z" fill="#c33"/></svg>
<svg style="left:1828px;top:1259px;" width="19" height="19" viewBox="0 0 19 19"><rect x="8" y="1" width="3" height="18" fill="#d33"/></svg>
<div style="position:absolute;left:1827px;top:1306.5px;width:21px;height:20.5px;background:#000;border:1px solid #111"></div>
<svg style="left:1828px;top:1307.5px;" width="19" height="19" viewBox="0 0 19 19"><rect x="1" y="2" width="4" height="6" fill="#fff"/><rect x="7" y="2" width="4" height="6" fill="#fff"/><rect x="13" y="2" width="4" height="6" fill="#88f"/><rect x="1" y="12" width="17" height="6" fill="#fff"/></svg>
<div class="t" style="left:1743.0px;top:1430.3px;font-size:11.5px;color:#c8c8c8;font-weight:normal;">7 Layers</div>
<svg style="left:1816px;top:1426px;" width="18" height="18" viewBox="0 0 18 18"><path d="M8 3 H2 V16 H15 V10" fill="none" stroke="#c0c0c0" stroke-width="1.5"/><path d="M8 10 L16 2 M11 2 H16 V7" fill="none" stroke="#c0c0c0" stroke-width="1.5"/></svg>
<svg style="left:1846px;top:1426px;" width="18" height="18" viewBox="0 0 18 18"><circle cx="7" cy="7" r="5" fill="none" stroke="#6e6e6e" stroke-width="1.6"/><path d="M11 11 L16 16" stroke="#6e6e6e" stroke-width="2"/></svg>
<svg style="left:1876px;top:1426px;" width="18" height="18" viewBox="0 0 18 18"><rect x="2" y="2" width="9" height="9" fill="#c0c0c0"/><rect x="6" y="6" width="10" height="10" fill="none" stroke="#c0c0c0" stroke-width="1.3"/></svg>
<svg style="left:1903px;top:1426px;" width="22" height="18" viewBox="0 0 22 18"><path d="M2 2 V7 H7 M5 5 L7 7 L5 9" fill="none" stroke="#c0c0c0" stroke-width="1.3"/><rect x="9" y="3" width="11" height="12" fill="none" stroke="#c0c0c0" stroke-width="1.3"/><path d="M14.5 6 V12 M11.5 9 H17.5" stroke="#c0c0c0" stroke-width="1.3"/></svg>
<svg style="left:1938px;top:1426px;" width="16" height="16" viewBox="0 0 16 16"><rect x="1" y="1" width="13" height="13" fill="none" stroke="#c0c0c0" stroke-width="1.3"/><path d="M7.5 4 V11 M4 7.5 H11" stroke="#c0c0c0" stroke-width="1.4"/></svg>
<svg style="left:1967px;top:1425px;" width="16" height="18" viewBox="0 0 16 18"><path d="M2 4 H14 M6 4 V2 H10 V4" stroke="#c0c0c0" stroke-width="1.3" fill="none"/><path d="M3 5 H13 L12 17 H4 Z" fill="none" stroke="#c0c0c0" stroke-width="1.3"/><path d="M6 7.5 V15 M10 7.5 V15" stroke="#c0c0c0" stroke-width="1"/></svg></body></html>
